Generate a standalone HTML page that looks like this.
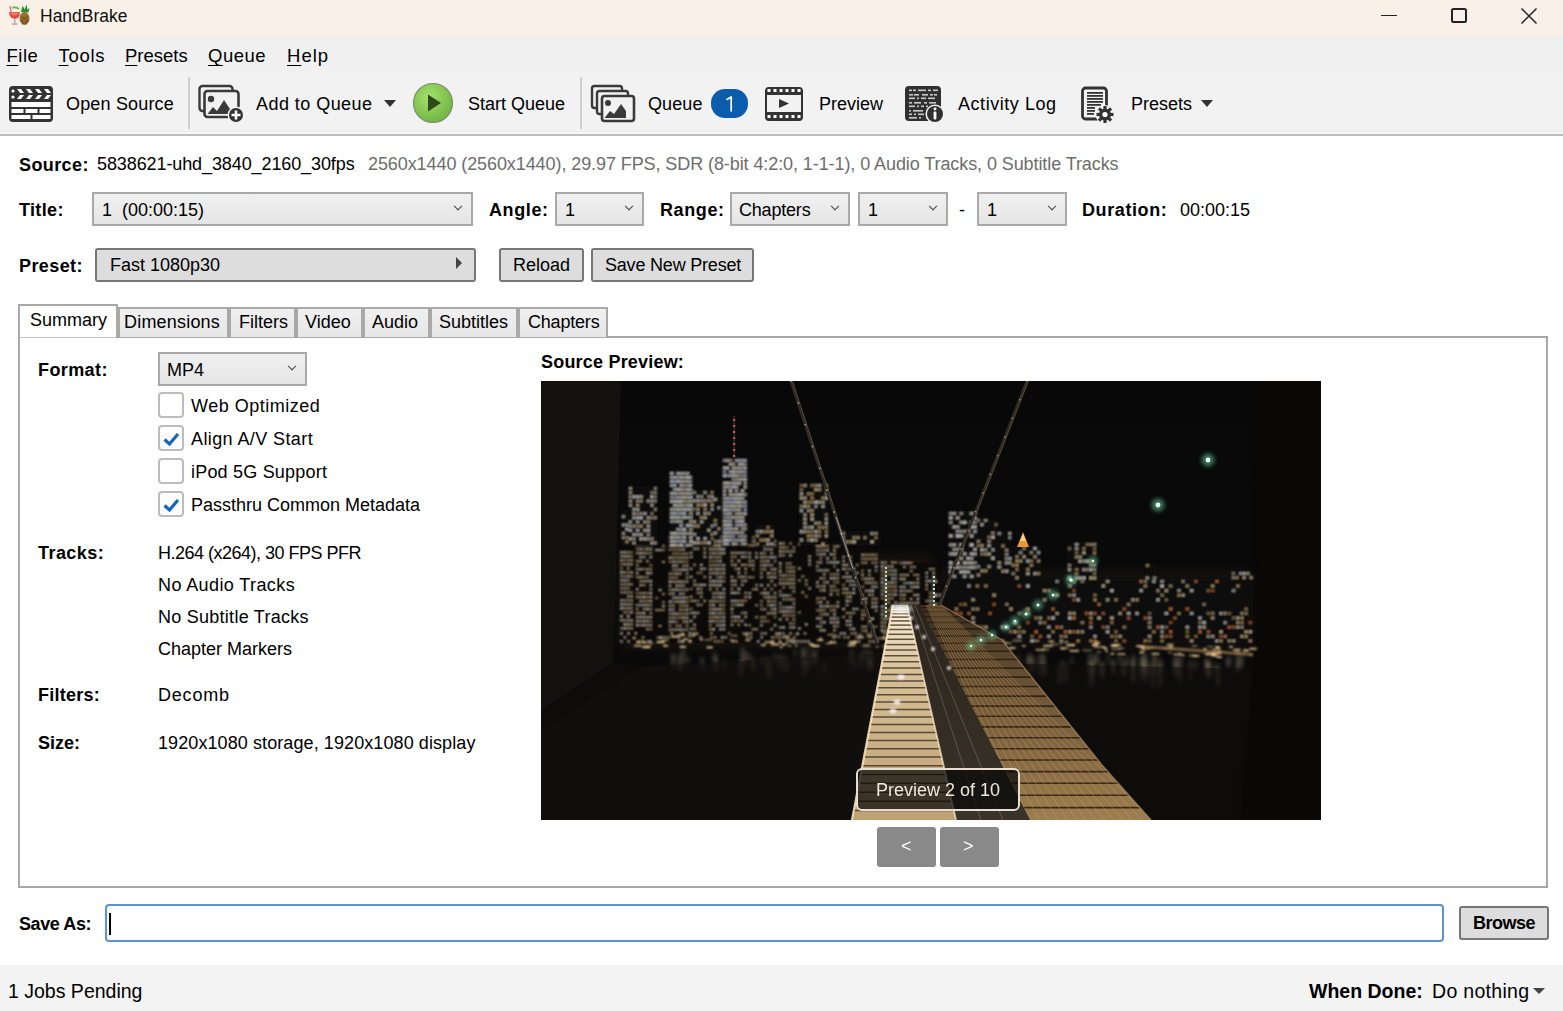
<!DOCTYPE html>
<html><head><meta charset="utf-8">
<style>
html,body{margin:0;padding:0;width:1563px;height:1011px;overflow:hidden;background:#fff;position:relative;font-family:"Liberation Sans",sans-serif;color:#000;}
.a{position:absolute;}
.t{position:absolute;white-space:nowrap;font-size:18px;line-height:20px;}
.b{font-weight:bold;}
#titlebar{left:0;top:0;width:1563px;height:38px;background:linear-gradient(#f9f1e7 0,#f9f1e7 34px,#f1efeb 38px);}
#menubar{left:0;top:38px;width:1563px;height:34px;background:#f0f0f0;}
#toolbar{left:0;top:72px;width:1563px;height:61px;background:#f2f2f2;}
#tbborder{left:0;top:131px;width:1563px;height:5px;background:linear-gradient(#ececec 0,#ececec 1px,#f7f7f7 1px,#f7f7f7 3px,#bdbdbd 3px);}
.u{text-decoration:underline;text-underline-offset:3px;text-decoration-thickness:1px;}
.combo{position:absolute;box-sizing:border-box;border:2px solid #a9a9a9;background:linear-gradient(#f0f0f0,#e5e5e5);}
.combo .chev{position:absolute;right:10px;top:50%;width:5px;height:5px;border-right:1.7px solid #404040;border-bottom:1.7px solid #404040;transform:translateY(-95%) rotate(45deg);}
.btn{position:absolute;box-sizing:border-box;border:2px solid #767676;border-radius:3px;background:#dddddd;}
.tab{position:absolute;box-sizing:border-box;border:2px solid #a9a9a9;border-bottom:none;background:linear-gradient(#f0f0f0,#e6e6e6);height:30px;top:307px;}
.cb{position:absolute;box-sizing:border-box;width:26px;height:26px;border:2px solid #bcbcbc;border-radius:4px;background:#fff;left:158px;}
</style></head><body>
<!-- title bar -->
<div id="titlebar" class="a"></div>
<svg class="a" style="left:7px;top:3px" width="24" height="24" viewBox="0 0 24 24">
  <path d="M2 9 L13 9 Q13 15 8 16 Q2 15 2 9Z" fill="#e04a40"/>
  <path d="M3 9.5 L12 9.5 Q11.5 12 7.5 12.5 Q3.5 12 3 9.5Z" fill="#f07a60"/>
  <rect x="7" y="15.5" width="1.4" height="5" fill="#a8a8a8"/>
  <ellipse cx="7.7" cy="21" rx="3.2" ry="1.1" fill="#b8b8b8"/>
  <path d="M3 3 L4 9" stroke="#e06090" stroke-width="1.3"/>
  <path d="M5 5 Q8.5 3 12 6" stroke="#60c050" stroke-width="2" fill="none"/>
  <ellipse cx="17.5" cy="15.5" rx="5" ry="6.5" fill="#9a7030"/>
  <path d="M13.5 13 L21 18 M13 17 L20 21 M21.5 13 L14 18 M22 17 L15 21" stroke="#6a4a18" stroke-width="0.9"/>
  <path d="M14 9 L15.5 2.5 L17.5 6.5 L19.5 1.5 L20.5 7 L22.5 4.5 L21.5 9.5Z" fill="#2a8a2a"/>
</svg>
<div class="t" style="left:40px;top:6px;font-size:17.5px;color:#111">HandBrake</div>
<!-- window controls -->
<div class="a" style="left:1381px;top:14.5px;width:16px;height:1.2px;background:#222"></div>
<div class="a" style="left:1451px;top:8px;width:16px;height:15px;box-sizing:border-box;border:2px solid #222;border-radius:2.5px"></div>
<svg class="a" style="left:1520px;top:7px" width="18" height="18" viewBox="0 0 18 18"><path d="M1.5 1.5L16.5 16.5M16.5 1.5L1.5 16.5" stroke="#222" stroke-width="1.5"/></svg>

<!-- menu -->
<div id="menubar" class="a"></div>
<div class="t" style="left:6.5px;top:46px;font-size:18.5px;letter-spacing:0.5px"><span class="u">F</span>ile</div>
<div class="t" style="left:58.5px;top:46px;font-size:18.5px;letter-spacing:0.7px"><span class="u">T</span>ools</div>
<div class="t" style="left:125px;top:46px;font-size:18.5px"><span class="u">P</span>resets</div>
<div class="t" style="left:208px;top:46px;font-size:18.5px;letter-spacing:0.5px"><span class="u">Q</span>ueue</div>
<div class="t" style="left:287px;top:46px;font-size:18.5px;letter-spacing:1px"><span class="u">H</span>elp</div>

<!-- toolbar -->
<div id="toolbar" class="a"></div>
<div id="tbborder" class="a"></div>
<div class="a" style="left:188px;top:77px;width:2px;height:52px;background:#cfcfcf"></div>
<div class="a" style="left:580px;top:77px;width:2px;height:52px;background:#cfcfcf"></div>

<!-- clapper icon -->
<svg class="a" style="left:8px;top:85px" width="46" height="38" viewBox="0 0 46 38">
  <rect x="1" y="1" width="44" height="36" rx="4" fill="#333"/>
  <g fill="#fff">
    <circle cx="5" cy="6" r="1.6"/><circle cx="5" cy="12" r="1.6"/>
    <path d="M9 4h4l3 4h-4z M18 4h4l3 4h-4z M27 4h4l3 4h-4z M36 4h4l3 4h-4z"/>
    <path d="M12 10h4l-3 4h-4z M21 10h4l-3 4h-4z M30 10h4l-3 4h-4z M39 10h4l-3 4h-4z"/>
    <rect x="3.5" y="17" width="39" height="5"/>
    <rect x="3.5" y="24" width="12" height="4"/><rect x="17.5" y="24" width="12" height="4"/><rect x="31.5" y="24" width="11" height="4"/>
    <rect x="3.5" y="30" width="19" height="4"/><rect x="24.5" y="30" width="18" height="4"/>
  </g>
</svg>
<div class="t" style="left:66px;top:94px;letter-spacing:0.17px">Open Source</div>

<!-- add to queue icon -->
<svg class="a" style="left:196px;top:83px" width="48" height="40" viewBox="0 0 48 40">
  <rect x="3.5" y="3" width="33" height="25" rx="3" fill="none" stroke="#3a3a3a" stroke-width="2.4"/>
  <rect x="8.5" y="8" width="34" height="26" rx="3" fill="#f2f2f2" stroke="#3a3a3a" stroke-width="2.6"/>
  <circle cx="15" cy="16" r="3.2" fill="#3a3a3a"/>
  <path d="M11.5 31 L17 24 L21 28 L28 17 L34 26 L34 31Z" fill="#3a3a3a"/>
  <circle cx="40" cy="32" r="8.5" fill="#f2f2f2"/>
  <circle cx="40" cy="32" r="7" fill="#333"/>
  <path d="M40 27.5v9M35.5 32h9" stroke="#fff" stroke-width="2.6"/>
</svg>
<div class="t" style="left:256px;top:94px;letter-spacing:0.45px">Add to Queue</div>
<div class="a" style="left:384px;top:100px;width:0;height:0;border-left:6px solid transparent;border-right:6px solid transparent;border-top:7px solid #333"></div>

<!-- start queue -->
<svg class="a" style="left:412px;top:82px" width="42" height="42" viewBox="0 0 42 42">
  <defs><radialGradient id="gg" cx="40%" cy="35%" r="70%"><stop offset="0" stop-color="#a6e070"/><stop offset="1" stop-color="#6fb33e"/></radialGradient></defs>
  <circle cx="21" cy="21" r="19.5" fill="url(#gg)" stroke="#7e8f70" stroke-width="1.2"/>
  <path d="M16 12.5 L29 21 L16 29.5Z" fill="#2c4a1a"/>
</svg>
<div class="t" style="left:468px;top:94px">Start Queue</div>

<!-- queue icon -->
<svg class="a" style="left:588px;top:83px" width="50" height="42" viewBox="0 0 50 42">
  <rect x="4" y="3" width="30" height="22" rx="2.5" fill="#f2f2f2" stroke="#3a3a3a" stroke-width="2.4"/>
  <rect x="9" y="8" width="31" height="23" rx="2.5" fill="#f2f2f2" stroke="#3a3a3a" stroke-width="2.4"/>
  <rect x="14" y="13" width="32" height="25" rx="2.5" fill="#f2f2f2" stroke="#3a3a3a" stroke-width="2.6"/>
  <circle cx="20" cy="20" r="3" fill="#3a3a3a"/>
  <path d="M16.5 35 L22 28 L26 31 L33 21 L38 28 L38 35Z" fill="#3a3a3a"/>
</svg>
<div class="t" style="left:648px;top:94px;letter-spacing:0.1px">Queue</div>
<div class="a" style="left:711px;top:89px;width:37px;height:29px;border-radius:14px;background:#0b5cad"></div>
<svg class="a" style="left:720px;top:92px" width="20" height="24" viewBox="0 0 20 24"><path d="M6.5 7.8 L11.2 5 L11.2 19.5" fill="none" stroke="#fff" stroke-width="1.7" stroke-linejoin="round"/></svg>

<!-- preview icon -->
<svg class="a" style="left:764px;top:86px" width="40" height="36" viewBox="0 0 40 36">
  <rect x="1" y="1" width="38" height="34" rx="4" fill="#333"/>
  <rect x="3" y="9" width="34" height="17" fill="#f2f2f2"/>
  <g fill="#fff"><rect x="3.5" y="3" width="3" height="3"/><rect x="9.5" y="3" width="3" height="3"/><rect x="15.5" y="3" width="3" height="3"/><rect x="21.5" y="3" width="3" height="3"/><rect x="27.5" y="3" width="3" height="3"/><rect x="33.5" y="3" width="3" height="3"/>
  <rect x="3.5" y="29" width="3" height="3"/><rect x="9.5" y="29" width="3" height="3"/><rect x="15.5" y="29" width="3" height="3"/><rect x="21.5" y="29" width="3" height="3"/><rect x="27.5" y="29" width="3" height="3"/><rect x="33.5" y="29" width="3" height="3"/></g>
  <path d="M15 13 L25 17.5 L15 22Z" fill="#333"/>
</svg>
<div class="t" style="left:819px;top:94px">Preview</div>

<!-- activity log icon -->
<svg class="a" style="left:904px;top:85px" width="44" height="38" viewBox="0 0 44 38">
  <rect x="1" y="1" width="36" height="35" rx="4" fill="#303030"/>
  <g fill="#c8c8c8">
    <rect x="5" y="4.5" width="3" height="1.6"/><rect x="9" y="4.5" width="3" height="1.6"/><rect x="14" y="4.5" width="8" height="1.6"/><rect x="24" y="4.5" width="3" height="1.6"/><rect x="29" y="4.5" width="5" height="1.6"/>
    <rect x="5" y="9" width="4" height="1.6"/><rect x="10" y="9" width="5" height="1.6"/><rect x="18" y="9" width="6" height="1.6"/><rect x="26" y="9" width="3" height="1.6"/><rect x="30" y="9" width="3" height="1.6"/>
    <rect x="5" y="12.5" width="6" height="1.6"/><rect x="13" y="12.5" width="2" height="1.6"/><rect x="17" y="12.5" width="5" height="1.6"/><rect x="24" y="12.5" width="7" height="1.6"/>
    <rect x="5" y="17" width="3" height="1.6"/><rect x="10" y="17" width="7" height="1.6"/><rect x="20" y="17" width="3" height="1.6"/><rect x="25" y="17" width="7" height="1.6"/>
    <rect x="5" y="20.5" width="6" height="1.6"/><rect x="13" y="20.5" width="2" height="1.6"/><rect x="17" y="20.5" width="3" height="1.6"/><rect x="22" y="20.5" width="2" height="1.6"/>
    <rect x="5" y="25" width="2" height="1.6"/><rect x="9" y="25" width="10" height="1.6"/>
    <rect x="5" y="28.5" width="3" height="1.6"/><rect x="10" y="28.5" width="2" height="1.6"/><rect x="14" y="28.5" width="6" height="1.6"/>
    <rect x="5" y="32" width="8" height="1.6"/><rect x="15" y="32" width="2" height="1.6"/>
  </g>
  <circle cx="31" cy="29" r="9.6" fill="#f2f2f2"/>
  <circle cx="31" cy="29" r="8" fill="#303030"/>
  <rect x="29.6" y="22.5" width="2.8" height="2.8" rx="1" fill="#fff"/>
  <rect x="29.6" y="26.5" width="2.8" height="8" rx="1" fill="#fff"/>
</svg>
<div class="t" style="left:958px;top:94px;letter-spacing:0.55px">Activity Log</div>

<!-- presets icon -->
<svg class="a" style="left:1080px;top:86px" width="38" height="38" viewBox="0 0 38 38">
  <rect x="2.5" y="2" width="24" height="31" rx="3" fill="none" stroke="#333" stroke-width="2.8"/>
  <g fill="#333"><rect x="7" y="6" width="16" height="1.8"/><rect x="7" y="9" width="16" height="1.8"/><rect x="7" y="12" width="16" height="1.8"/><rect x="7" y="15" width="16" height="1.8"/><rect x="7" y="18" width="14" height="1.8"/><rect x="7" y="21" width="8" height="1.8"/><rect x="7" y="24" width="8" height="1.8"/><rect x="7" y="27" width="7" height="1.8"/></g>
  <circle cx="25" cy="28.5" r="9.5" fill="#f2f2f2"/>
  <g transform="translate(25 28.5)" fill="#333">
    <circle r="6"/>
    <rect x="-1.6" y="-8.5" width="3.2" height="17"/>
    <rect x="-1.6" y="-8.5" width="3.2" height="17" transform="rotate(45)"/>
    <rect x="-1.6" y="-8.5" width="3.2" height="17" transform="rotate(90)"/>
    <rect x="-1.6" y="-8.5" width="3.2" height="17" transform="rotate(135)"/>
    <circle r="2.6" fill="#fff"/>
  </g>
</svg>
<div class="t" style="left:1131px;top:94px">Presets</div>
<div class="a" style="left:1201px;top:100px;width:0;height:0;border-left:6px solid transparent;border-right:6px solid transparent;border-top:7px solid #333"></div>

<!-- source row -->
<div class="t b" style="left:19px;top:155px;letter-spacing:0.4px">Source:</div>
<div class="t" style="left:97px;top:154px;letter-spacing:-0.1px">5838621-uhd_3840_2160_30fps</div>
<div class="t" style="left:368px;top:154px;color:#6d6d6d;letter-spacing:-0.085px">2560x1440 (2560x1440), 29.97 FPS, SDR (8-bit 4:2:0, 1-1-1), 0 Audio Tracks, 0 Subtitle Tracks</div>

<!-- title row -->
<div class="t b" style="left:19px;top:200px;letter-spacing:0.35px">Title:</div>
<div class="combo" style="left:92px;top:192px;width:381px;height:34px"><div class="chev"></div></div>
<div class="t" style="left:102px;top:200px">1&nbsp; (00:00:15)</div>
<div class="t b" style="left:489px;top:200px;letter-spacing:0.6px">Angle:</div>
<div class="combo" style="left:555px;top:192px;width:89px;height:34px"><div class="chev"></div></div>
<div class="t" style="left:565px;top:200px">1</div>
<div class="t b" style="left:660px;top:200px;letter-spacing:0.6px">Range:</div>
<div class="combo" style="left:730px;top:192px;width:120px;height:34px"><div class="chev"></div></div>
<div class="t" style="left:739px;top:200px;letter-spacing:-0.2px">Chapters</div>
<div class="combo" style="left:858px;top:192px;width:90px;height:34px"><div class="chev"></div></div>
<div class="t" style="left:868px;top:200px">1</div>
<div class="t" style="left:959px;top:200px">-</div>
<div class="combo" style="left:977px;top:192px;width:90px;height:34px"><div class="chev"></div></div>
<div class="t" style="left:987px;top:200px">1</div>
<div class="t b" style="left:1082px;top:200px;letter-spacing:0.6px">Duration:</div>
<div class="t" style="left:1180px;top:200px">00:00:15</div>

<!-- preset row -->
<div class="t b" style="left:19px;top:256px;letter-spacing:0.4px">Preset:</div>
<div class="btn" style="left:95px;top:248px;width:381px;height:34px"></div>
<div class="t" style="left:110px;top:255px">Fast 1080p30</div>
<div class="a" style="left:456px;top:257px;width:0;height:0;border-top:6px solid transparent;border-bottom:6px solid transparent;border-left:6px solid #444"></div>
<div class="btn" style="left:499px;top:248px;width:85px;height:34px"></div>
<div class="t" style="left:513px;top:255px">Reload</div>
<div class="btn" style="left:591px;top:248px;width:163px;height:34px"></div>
<div class="t" style="left:605px;top:255px;letter-spacing:-0.2px">Save New Preset</div>

<!-- tabs -->
<div class="a" style="left:18px;top:336px;width:1530px;height:552px;box-sizing:border-box;border:2px solid #a9a9a9;background:#fff"></div>
<div class="tab" style="left:118px;width:111px"></div>
<div class="tab" style="left:229px;width:67px"></div>
<div class="tab" style="left:296px;width:67px"></div>
<div class="tab" style="left:363px;width:67px"></div>
<div class="tab" style="left:430px;width:88px"></div>
<div class="tab" style="left:518px;width:90px"></div>
<div class="a" style="left:18px;top:304px;width:100px;height:34px;box-sizing:border-box;border:2px solid #a9a9a9;border-bottom:none;background:#fff"></div>
<div class="a" style="left:20px;top:337px;width:96px;height:1px;background:#c4c4c4"></div>
<div class="t" style="left:30px;top:310px">Summary</div>
<div class="t" style="left:124px;top:312px;letter-spacing:0.2px">Dimensions</div>
<div class="t" style="left:239px;top:312px">Filters</div>
<div class="t" style="left:305px;top:312px">Video</div>
<div class="t" style="left:372px;top:312px">Audio</div>
<div class="t" style="left:439px;top:312px">Subtitles</div>
<div class="t" style="left:528px;top:312px;letter-spacing:-0.2px">Chapters</div>

<!-- summary -->
<div class="t b" style="left:38px;top:360px;letter-spacing:0.4px">Format:</div>
<div class="combo" style="left:158px;top:352px;width:149px;height:34px"><div class="chev"></div></div>
<div class="t" style="left:167px;top:360px">MP4</div>
<div class="cb" style="top:392px"></div>
<div class="t" style="left:191px;top:396px;letter-spacing:0.5px">Web Optimized</div>
<div class="cb" style="top:425px"><svg class="a" style="left:2px;top:3px" width="18" height="18" viewBox="0 0 18 18"><path d="M2.5 9.5 L7.5 14 L16 4" fill="none" stroke="#1566c0" stroke-width="3.2"/></svg></div>
<div class="t" style="left:191px;top:429px;letter-spacing:0.4px">Align A/V Start</div>
<div class="cb" style="top:458px"></div>
<div class="t" style="left:191px;top:462px;letter-spacing:0.2px">iPod 5G Support</div>
<div class="cb" style="top:491px"><svg class="a" style="left:2px;top:3px" width="18" height="18" viewBox="0 0 18 18"><path d="M2.5 9.5 L7.5 14 L16 4" fill="none" stroke="#1566c0" stroke-width="3.2"/></svg></div>
<div class="t" style="left:191px;top:495px">Passthru Common Metadata</div>

<div class="t b" style="left:38px;top:543px;letter-spacing:0.45px">Tracks:</div>
<div class="t" style="left:158px;top:543px;letter-spacing:-0.5px">H.264 (x264), 30 FPS PFR</div>
<div class="t" style="left:158px;top:575px;letter-spacing:0.4px">No Audio Tracks</div>
<div class="t" style="left:158px;top:607px;letter-spacing:0.26px">No Subtitle Tracks</div>
<div class="t" style="left:158px;top:639px">Chapter Markers</div>
<div class="t b" style="left:38px;top:685px;letter-spacing:0.25px">Filters:</div>
<div class="t" style="left:158px;top:685px;letter-spacing:0.8px">Decomb</div>
<div class="t b" style="left:38px;top:733px">Size:</div>
<div class="t" style="left:158px;top:733px;letter-spacing:0.09px">1920x1080 storage, 1920x1080 display</div>

<div class="t b" style="left:541px;top:352px;letter-spacing:0.2px">Source Preview:</div>
<div id="photo" class="a" style="left:541px;top:381px;width:780px;height:439px;background:#0a0a0a;overflow:hidden"><svg width="780" height="439" viewBox="0 0 780 439" style="position:absolute;left:0;top:0">
<defs>
<linearGradient id="walk" x1="0" y1="0" x2="0" y2="1"><stop offset="0" stop-color="#fff4e0"/><stop offset="0.3" stop-color="#d8c098"/><stop offset="1" stop-color="#bda074"/></linearGradient>
<linearGradient id="latt" x1="0" y1="0" x2="0" y2="1"><stop offset="0" stop-color="#3a2e20"/><stop offset="0.4" stop-color="#6e5636"/><stop offset="1" stop-color="#9c7e50"/></linearGradient>
<linearGradient id="road" x1="0" y1="0" x2="0" y2="1"><stop offset="0" stop-color="#2a241c"/><stop offset="1" stop-color="#3a332a"/></linearGradient>
<linearGradient id="sky" x1="0" y1="0" x2="0" y2="1"><stop offset="0" stop-color="#080808"/><stop offset="1" stop-color="#0b0b0c"/></linearGradient>
<filter id="bl1" x="-5%" y="-5%" width="110%" height="110%"><feGaussianBlur stdDeviation="0.8"/></filter>
<filter id="bl2" x="-50%" y="-50%" width="200%" height="200%"><feGaussianBlur stdDeviation="2"/></filter>
<filter id="bl4" x="-20%" y="-20%" width="140%" height="140%"><feGaussianBlur stdDeviation="6"/></filter>
</defs>
<rect width="780" height="439" fill="url(#sky)"/>
<path d="M0 0 H80 L76 160 L72 282 L0 330Z" fill="#13110e"/>
<path d="M0 330 L72 282 L100 286 L0 350Z" fill="#0e0c0a"/>
<path d="M715 0 H780 V439 H690 L712 300Z" fill="#090807"/>
<rect x="80" y="175" width="310" height="90" fill="#2a2014" opacity=".45" filter="url(#bl4)"/>
<rect x="395" y="190" width="315" height="75" fill="#241b12" opacity=".45" filter="url(#bl4)"/>
<rect x="78" y="165" width="257" height="97" fill="#0b0a09"/><rect x="335" y="182" width="60" height="80" fill="#0b0a09"/>
<g filter="url(#bl1)">
<rect x="79.2" y="170.4" width="2.5" height="1.9" fill="#ffffff" opacity="0.88"/>
<rect x="82.6" y="170.4" width="2.5" height="1.9" fill="#fff2d0" opacity="0.95"/>
<rect x="86.0" y="170.4" width="2.5" height="1.9" fill="#e8c890" opacity="0.95"/>
<rect x="89.4" y="170.4" width="2.5" height="1.9" fill="#d8b070" opacity="0.79"/>
<rect x="79.2" y="174.4" width="2.5" height="1.9" fill="#f0d8a8" opacity="0.90"/>
<rect x="82.6" y="174.4" width="2.5" height="1.9" fill="#ffffff" opacity="0.91"/>
<rect x="86.0" y="174.4" width="2.5" height="1.9" fill="#fff2d0" opacity="0.91"/>
<rect x="89.4" y="174.4" width="2.5" height="1.9" fill="#f0d8a8" opacity="0.76"/>
<rect x="79.2" y="178.4" width="2.5" height="1.9" fill="#fff2d0" opacity="0.90"/>
<rect x="82.6" y="178.4" width="2.5" height="1.9" fill="#d8b070" opacity="0.86"/>
<rect x="86.0" y="178.4" width="2.5" height="1.9" fill="#e8c890" opacity="0.81"/>
<rect x="89.4" y="178.4" width="2.5" height="1.9" fill="#f0d8a8" opacity="0.92"/>
<rect x="79.2" y="182.4" width="2.5" height="1.9" fill="#d8b070" opacity="0.85"/>
<rect x="82.6" y="182.4" width="2.5" height="1.9" fill="#f0d8a8" opacity="0.93"/>
<rect x="86.0" y="182.4" width="2.5" height="1.9" fill="#fff2d0" opacity="0.88"/>
<rect x="89.4" y="182.4" width="2.5" height="1.9" fill="#e8c890" opacity="0.94"/>
<rect x="79.2" y="186.4" width="2.5" height="1.9" fill="#d8b070" opacity="0.85"/>
<rect x="86.0" y="186.4" width="2.5" height="1.9" fill="#f0d8a8" opacity="0.80"/>
<rect x="79.2" y="190.4" width="2.5" height="1.9" fill="#ffffff" opacity="1.00"/>
<rect x="82.6" y="190.4" width="2.5" height="1.9" fill="#f0d8a8" opacity="0.89"/>
<rect x="86.0" y="190.4" width="2.5" height="1.9" fill="#d8b070" opacity="0.83"/>
<rect x="89.4" y="190.4" width="2.5" height="1.9" fill="#f0d8a8" opacity="0.99"/>
<rect x="79.2" y="194.4" width="2.5" height="1.9" fill="#f0d8a8" opacity="0.78"/>
<rect x="82.6" y="194.4" width="2.5" height="1.9" fill="#f0d8a8" opacity="0.76"/>
<rect x="86.0" y="194.4" width="2.5" height="1.9" fill="#fff2d0" opacity="0.92"/>
<rect x="89.4" y="194.4" width="2.5" height="1.9" fill="#e8c890" opacity="0.80"/>
<rect x="79.2" y="198.4" width="2.5" height="1.9" fill="#fff2d0" opacity="0.85"/>
<rect x="82.6" y="198.4" width="2.5" height="1.9" fill="#ffffff" opacity="0.86"/>
<rect x="86.0" y="198.4" width="2.5" height="1.9" fill="#d8b070" opacity="0.97"/>
<rect x="79.2" y="202.4" width="2.5" height="1.9" fill="#f0d8a8" opacity="0.80"/>
<rect x="82.6" y="202.4" width="2.5" height="1.9" fill="#e8c890" opacity="0.91"/>
<rect x="86.0" y="202.4" width="2.5" height="1.9" fill="#fff2d0" opacity="0.80"/>
<rect x="89.4" y="202.4" width="2.5" height="1.9" fill="#e8c890" opacity="0.83"/>
<rect x="79.2" y="206.4" width="2.5" height="1.9" fill="#f0d8a8" opacity="0.77"/>
<rect x="82.6" y="206.4" width="2.5" height="1.9" fill="#fff2d0" opacity="0.75"/>
<rect x="86.0" y="206.4" width="2.5" height="1.9" fill="#e8c890" opacity="0.86"/>
<rect x="79.2" y="210.4" width="2.5" height="1.9" fill="#e8c890" opacity="0.78"/>
<rect x="82.6" y="210.4" width="2.5" height="1.9" fill="#fff2d0" opacity="0.83"/>
<rect x="86.0" y="210.4" width="2.5" height="1.9" fill="#e8c890" opacity="0.81"/>
<rect x="89.4" y="210.4" width="2.5" height="1.9" fill="#e8c890" opacity="0.80"/>
<rect x="86.0" y="214.4" width="2.5" height="1.9" fill="#ffffff" opacity="0.76"/>
<rect x="89.4" y="214.4" width="2.5" height="1.9" fill="#e8c890" opacity="0.99"/>
<rect x="79.2" y="218.4" width="2.5" height="1.9" fill="#ffffff" opacity="0.81"/>
<rect x="82.6" y="218.4" width="2.5" height="1.9" fill="#e8c890" opacity="0.87"/>
<rect x="86.0" y="218.4" width="2.5" height="1.9" fill="#f0d8a8" opacity="0.78"/>
<rect x="89.4" y="218.4" width="2.5" height="1.9" fill="#e8c890" opacity="0.90"/>
<rect x="79.2" y="222.4" width="2.5" height="1.9" fill="#fff2d0" opacity="0.94"/>
<rect x="82.6" y="222.4" width="2.5" height="1.9" fill="#ffffff" opacity="0.86"/>
<rect x="86.0" y="222.4" width="2.5" height="1.9" fill="#fff2d0" opacity="0.82"/>
<rect x="89.4" y="222.4" width="2.5" height="1.9" fill="#fff2d0" opacity="0.77"/>
<rect x="79.2" y="226.4" width="2.5" height="1.9" fill="#ffffff" opacity="1.00"/>
<rect x="82.6" y="226.4" width="2.5" height="1.9" fill="#e8c890" opacity="0.90"/>
<rect x="86.0" y="226.4" width="2.5" height="1.9" fill="#f0d8a8" opacity="0.98"/>
<rect x="89.4" y="226.4" width="2.5" height="1.9" fill="#d8b070" opacity="0.93"/>
<rect x="82.6" y="230.4" width="2.5" height="1.9" fill="#f0d8a8" opacity="0.87"/>
<rect x="86.0" y="230.4" width="2.5" height="1.9" fill="#d8b070" opacity="0.78"/>
<rect x="89.4" y="230.4" width="2.5" height="1.9" fill="#ffffff" opacity="0.89"/>
<rect x="79.2" y="234.4" width="2.5" height="1.9" fill="#fff2d0" opacity="0.95"/>
<rect x="86.0" y="234.4" width="2.5" height="1.9" fill="#ffffff" opacity="0.98"/>
<rect x="79.2" y="238.4" width="2.5" height="1.9" fill="#f0d8a8" opacity="0.97"/>
<rect x="82.6" y="238.4" width="2.5" height="1.9" fill="#e8c890" opacity="0.92"/>
<rect x="86.0" y="238.4" width="2.5" height="1.9" fill="#f0d8a8" opacity="0.90"/>
<rect x="89.4" y="238.4" width="2.5" height="1.9" fill="#f0d8a8" opacity="1.00"/>
<rect x="82.6" y="242.4" width="2.5" height="1.9" fill="#ffffff" opacity="0.98"/>
<rect x="86.0" y="242.4" width="2.5" height="1.9" fill="#ffffff" opacity="0.86"/>
<rect x="89.4" y="242.4" width="2.5" height="1.9" fill="#f0d8a8" opacity="0.88"/>
<rect x="79.2" y="246.4" width="2.5" height="1.9" fill="#d8b070" opacity="0.90"/>
<rect x="82.6" y="246.4" width="2.5" height="1.9" fill="#fff2d0" opacity="0.99"/>
<rect x="86.0" y="246.4" width="2.5" height="1.9" fill="#e8c890" opacity="0.92"/>
<rect x="89.4" y="246.4" width="2.5" height="1.9" fill="#f0d8a8" opacity="0.84"/>
<rect x="98.4" y="155.2" width="2.5" height="1.9" fill="#ffffff" opacity="0.87"/>
<rect x="101.8" y="155.2" width="2.5" height="1.9" fill="#ffffff" opacity="0.92"/>
<rect x="105.2" y="155.2" width="2.5" height="1.9" fill="#ffffff" opacity="0.95"/>
<rect x="108.6" y="155.2" width="2.5" height="1.9" fill="#fff2d0" opacity="0.97"/>
<rect x="95.0" y="159.2" width="2.5" height="1.9" fill="#e8c890" opacity="0.98"/>
<rect x="98.4" y="159.2" width="2.5" height="1.9" fill="#fff2d0" opacity="0.87"/>
<rect x="101.8" y="159.2" width="2.5" height="1.9" fill="#f0d8a8" opacity="0.93"/>
<rect x="108.6" y="159.2" width="2.5" height="1.9" fill="#fff2d0" opacity="0.78"/>
<rect x="95.0" y="163.2" width="2.5" height="1.9" fill="#fff2d0" opacity="0.96"/>
<rect x="98.4" y="163.2" width="2.5" height="1.9" fill="#e8c890" opacity="0.87"/>
<rect x="101.8" y="163.2" width="2.5" height="1.9" fill="#e8c890" opacity="0.86"/>
<rect x="105.2" y="163.2" width="2.5" height="1.9" fill="#f0d8a8" opacity="0.82"/>
<rect x="108.6" y="163.2" width="2.5" height="1.9" fill="#d8b070" opacity="0.89"/>
<rect x="95.0" y="167.2" width="2.5" height="1.9" fill="#e8c890" opacity="0.75"/>
<rect x="98.4" y="167.2" width="2.5" height="1.9" fill="#ffffff" opacity="0.80"/>
<rect x="101.8" y="167.2" width="2.5" height="1.9" fill="#d8b070" opacity="0.81"/>
<rect x="105.2" y="167.2" width="2.5" height="1.9" fill="#f0d8a8" opacity="1.00"/>
<rect x="108.6" y="167.2" width="2.5" height="1.9" fill="#f0d8a8" opacity="0.91"/>
<rect x="95.0" y="171.2" width="2.5" height="1.9" fill="#d8b070" opacity="0.99"/>
<rect x="98.4" y="171.2" width="2.5" height="1.9" fill="#fff2d0" opacity="0.96"/>
<rect x="101.8" y="171.2" width="2.5" height="1.9" fill="#f0d8a8" opacity="0.94"/>
<rect x="105.2" y="171.2" width="2.5" height="1.9" fill="#f0d8a8" opacity="0.79"/>
<rect x="108.6" y="171.2" width="2.5" height="1.9" fill="#d8b070" opacity="0.88"/>
<rect x="98.4" y="175.2" width="2.5" height="1.9" fill="#fff2d0" opacity="0.85"/>
<rect x="101.8" y="175.2" width="2.5" height="1.9" fill="#fff2d0" opacity="0.77"/>
<rect x="108.6" y="175.2" width="2.5" height="1.9" fill="#fff2d0" opacity="0.86"/>
<rect x="95.0" y="179.2" width="2.5" height="1.9" fill="#f0d8a8" opacity="0.84"/>
<rect x="98.4" y="179.2" width="2.5" height="1.9" fill="#e8c890" opacity="0.95"/>
<rect x="105.2" y="179.2" width="2.5" height="1.9" fill="#fff2d0" opacity="0.77"/>
<rect x="95.0" y="183.2" width="2.5" height="1.9" fill="#f0d8a8" opacity="0.80"/>
<rect x="108.6" y="183.2" width="2.5" height="1.9" fill="#d8b070" opacity="0.82"/>
<rect x="95.0" y="187.2" width="2.5" height="1.9" fill="#f0d8a8" opacity="0.84"/>
<rect x="98.4" y="187.2" width="2.5" height="1.9" fill="#ffffff" opacity="0.84"/>
<rect x="101.8" y="187.2" width="2.5" height="1.9" fill="#d8b070" opacity="0.87"/>
<rect x="105.2" y="187.2" width="2.5" height="1.9" fill="#f0d8a8" opacity="0.86"/>
<rect x="108.6" y="187.2" width="2.5" height="1.9" fill="#e8c890" opacity="0.83"/>
<rect x="95.0" y="191.2" width="2.5" height="1.9" fill="#fff2d0" opacity="0.87"/>
<rect x="105.2" y="191.2" width="2.5" height="1.9" fill="#ffffff" opacity="0.99"/>
<rect x="108.6" y="191.2" width="2.5" height="1.9" fill="#f0d8a8" opacity="0.94"/>
<rect x="95.0" y="195.2" width="2.5" height="1.9" fill="#e8c890" opacity="0.82"/>
<rect x="98.4" y="195.2" width="2.5" height="1.9" fill="#fff2d0" opacity="0.88"/>
<rect x="101.8" y="195.2" width="2.5" height="1.9" fill="#e8c890" opacity="0.81"/>
<rect x="105.2" y="195.2" width="2.5" height="1.9" fill="#e8c890" opacity="0.80"/>
<rect x="98.4" y="199.2" width="2.5" height="1.9" fill="#e8c890" opacity="0.87"/>
<rect x="101.8" y="199.2" width="2.5" height="1.9" fill="#f0d8a8" opacity="0.88"/>
<rect x="105.2" y="199.2" width="2.5" height="1.9" fill="#f0d8a8" opacity="0.88"/>
<rect x="108.6" y="199.2" width="2.5" height="1.9" fill="#ffffff" opacity="0.89"/>
<rect x="98.4" y="203.2" width="2.5" height="1.9" fill="#f0d8a8" opacity="0.92"/>
<rect x="101.8" y="203.2" width="2.5" height="1.9" fill="#e8c890" opacity="0.86"/>
<rect x="108.6" y="203.2" width="2.5" height="1.9" fill="#ffffff" opacity="0.82"/>
<rect x="95.0" y="207.2" width="2.5" height="1.9" fill="#fff2d0" opacity="0.83"/>
<rect x="108.6" y="207.2" width="2.5" height="1.9" fill="#f0d8a8" opacity="0.80"/>
<rect x="95.0" y="211.2" width="2.5" height="1.9" fill="#d8b070" opacity="0.78"/>
<rect x="98.4" y="211.2" width="2.5" height="1.9" fill="#f0d8a8" opacity="0.76"/>
<rect x="101.8" y="211.2" width="2.5" height="1.9" fill="#f0d8a8" opacity="0.92"/>
<rect x="105.2" y="211.2" width="2.5" height="1.9" fill="#d8b070" opacity="0.81"/>
<rect x="108.6" y="211.2" width="2.5" height="1.9" fill="#ffffff" opacity="0.93"/>
<rect x="95.0" y="215.2" width="2.5" height="1.9" fill="#e8c890" opacity="0.91"/>
<rect x="98.4" y="215.2" width="2.5" height="1.9" fill="#e8c890" opacity="0.97"/>
<rect x="101.8" y="215.2" width="2.5" height="1.9" fill="#ffffff" opacity="0.96"/>
<rect x="105.2" y="215.2" width="2.5" height="1.9" fill="#e8c890" opacity="0.80"/>
<rect x="108.6" y="215.2" width="2.5" height="1.9" fill="#fff2d0" opacity="0.88"/>
<rect x="98.4" y="219.2" width="2.5" height="1.9" fill="#fff2d0" opacity="0.81"/>
<rect x="101.8" y="219.2" width="2.5" height="1.9" fill="#d8b070" opacity="0.98"/>
<rect x="105.2" y="219.2" width="2.5" height="1.9" fill="#d8b070" opacity="0.97"/>
<rect x="108.6" y="219.2" width="2.5" height="1.9" fill="#fff2d0" opacity="0.97"/>
<rect x="95.0" y="223.2" width="2.5" height="1.9" fill="#fff2d0" opacity="0.78"/>
<rect x="98.4" y="223.2" width="2.5" height="1.9" fill="#ffffff" opacity="0.77"/>
<rect x="101.8" y="223.2" width="2.5" height="1.9" fill="#ffffff" opacity="0.89"/>
<rect x="105.2" y="223.2" width="2.5" height="1.9" fill="#fff2d0" opacity="0.85"/>
<rect x="108.6" y="223.2" width="2.5" height="1.9" fill="#f0d8a8" opacity="0.77"/>
<rect x="95.0" y="227.2" width="2.5" height="1.9" fill="#d8b070" opacity="0.98"/>
<rect x="101.8" y="227.2" width="2.5" height="1.9" fill="#e8c890" opacity="0.91"/>
<rect x="105.2" y="227.2" width="2.5" height="1.9" fill="#fff2d0" opacity="0.95"/>
<rect x="108.6" y="227.2" width="2.5" height="1.9" fill="#f0d8a8" opacity="0.76"/>
<rect x="95.0" y="231.2" width="2.5" height="1.9" fill="#e8c890" opacity="0.98"/>
<rect x="98.4" y="231.2" width="2.5" height="1.9" fill="#fff2d0" opacity="0.80"/>
<rect x="101.8" y="231.2" width="2.5" height="1.9" fill="#fff2d0" opacity="1.00"/>
<rect x="108.6" y="231.2" width="2.5" height="1.9" fill="#f0d8a8" opacity="0.78"/>
<rect x="95.0" y="235.2" width="2.5" height="1.9" fill="#f0d8a8" opacity="0.94"/>
<rect x="98.4" y="235.2" width="2.5" height="1.9" fill="#ffffff" opacity="0.86"/>
<rect x="101.8" y="235.2" width="2.5" height="1.9" fill="#fff2d0" opacity="0.90"/>
<rect x="105.2" y="235.2" width="2.5" height="1.9" fill="#f0d8a8" opacity="0.96"/>
<rect x="108.6" y="235.2" width="2.5" height="1.9" fill="#ffffff" opacity="0.84"/>
<rect x="95.0" y="239.2" width="2.5" height="1.9" fill="#fff2d0" opacity="0.90"/>
<rect x="98.4" y="239.2" width="2.5" height="1.9" fill="#f0d8a8" opacity="0.83"/>
<rect x="101.8" y="239.2" width="2.5" height="1.9" fill="#ffffff" opacity="0.89"/>
<rect x="105.2" y="239.2" width="2.5" height="1.9" fill="#e8c890" opacity="1.00"/>
<rect x="108.6" y="239.2" width="2.5" height="1.9" fill="#d8b070" opacity="0.82"/>
<rect x="95.0" y="243.2" width="2.5" height="1.9" fill="#fff2d0" opacity="0.95"/>
<rect x="98.4" y="243.2" width="2.5" height="1.9" fill="#d8b070" opacity="0.97"/>
<rect x="101.8" y="243.2" width="2.5" height="1.9" fill="#ffffff" opacity="0.94"/>
<rect x="105.2" y="243.2" width="2.5" height="1.9" fill="#fff2d0" opacity="0.77"/>
<rect x="108.6" y="243.2" width="2.5" height="1.9" fill="#ffffff" opacity="0.78"/>
<rect x="105.2" y="247.2" width="2.5" height="1.9" fill="#d8b070" opacity="0.99"/>
<rect x="108.6" y="247.2" width="2.5" height="1.9" fill="#d8b070" opacity="0.80"/>
<rect x="121.2" y="164.1" width="2.5" height="1.9" fill="#e8c890" opacity="0.78"/>
<rect x="114.4" y="168.1" width="2.5" height="1.9" fill="#ffffff" opacity="0.85"/>
<rect x="117.8" y="168.1" width="2.5" height="1.9" fill="#fff2d0" opacity="0.91"/>
<rect x="121.2" y="168.1" width="2.5" height="1.9" fill="#d8b070" opacity="0.81"/>
<rect x="121.2" y="180.1" width="2.5" height="1.9" fill="#e8c890" opacity="0.92"/>
<rect x="117.8" y="208.1" width="2.5" height="1.9" fill="#fff2d0" opacity="0.90"/>
<rect x="121.2" y="212.1" width="2.5" height="1.9" fill="#d8b070" opacity="0.94"/>
<rect x="114.4" y="216.1" width="2.5" height="1.9" fill="#d8b070" opacity="0.77"/>
<rect x="121.2" y="220.1" width="2.5" height="1.9" fill="#e8c890" opacity="0.77"/>
<rect x="121.2" y="224.1" width="2.5" height="1.9" fill="#fff2d0" opacity="0.90"/>
<rect x="114.4" y="228.1" width="2.5" height="1.9" fill="#e8c890" opacity="0.85"/>
<rect x="117.8" y="228.1" width="2.5" height="1.9" fill="#f0d8a8" opacity="0.84"/>
<rect x="121.2" y="228.1" width="2.5" height="1.9" fill="#d8b070" opacity="0.86"/>
<rect x="117.8" y="244.1" width="2.5" height="1.9" fill="#f0d8a8" opacity="0.88"/>
<rect x="127.8" y="155.7" width="2.5" height="1.9" fill="#fff2d0" opacity="0.80"/>
<rect x="131.2" y="155.7" width="2.5" height="1.9" fill="#fff2d0" opacity="0.97"/>
<rect x="134.6" y="155.7" width="2.5" height="1.9" fill="#f0d8a8" opacity="0.75"/>
<rect x="138.0" y="155.7" width="2.5" height="1.9" fill="#f0d8a8" opacity="0.91"/>
<rect x="141.4" y="155.7" width="2.5" height="1.9" fill="#e8c890" opacity="0.82"/>
<rect x="144.8" y="155.7" width="2.5" height="1.9" fill="#fff2d0" opacity="0.89"/>
<rect x="127.8" y="159.7" width="2.5" height="1.9" fill="#d8b070" opacity="0.87"/>
<rect x="131.2" y="159.7" width="2.5" height="1.9" fill="#d8b070" opacity="0.84"/>
<rect x="134.6" y="159.7" width="2.5" height="1.9" fill="#f0d8a8" opacity="0.95"/>
<rect x="138.0" y="159.7" width="2.5" height="1.9" fill="#e8c890" opacity="0.96"/>
<rect x="141.4" y="159.7" width="2.5" height="1.9" fill="#ffffff" opacity="0.86"/>
<rect x="144.8" y="159.7" width="2.5" height="1.9" fill="#fff2d0" opacity="0.84"/>
<rect x="127.8" y="163.7" width="2.5" height="1.9" fill="#e8c890" opacity="0.83"/>
<rect x="131.2" y="163.7" width="2.5" height="1.9" fill="#fff2d0" opacity="0.86"/>
<rect x="134.6" y="163.7" width="2.5" height="1.9" fill="#f0d8a8" opacity="0.87"/>
<rect x="138.0" y="163.7" width="2.5" height="1.9" fill="#e8c890" opacity="0.77"/>
<rect x="141.4" y="163.7" width="2.5" height="1.9" fill="#ffffff" opacity="0.95"/>
<rect x="144.8" y="163.7" width="2.5" height="1.9" fill="#f0d8a8" opacity="0.77"/>
<rect x="127.8" y="167.7" width="2.5" height="1.9" fill="#e8c890" opacity="0.77"/>
<rect x="131.2" y="167.7" width="2.5" height="1.9" fill="#d8b070" opacity="0.82"/>
<rect x="134.6" y="167.7" width="2.5" height="1.9" fill="#d8b070" opacity="0.91"/>
<rect x="138.0" y="167.7" width="2.5" height="1.9" fill="#f0d8a8" opacity="0.83"/>
<rect x="141.4" y="167.7" width="2.5" height="1.9" fill="#e8c890" opacity="0.98"/>
<rect x="131.2" y="171.7" width="2.5" height="1.9" fill="#d8b070" opacity="0.86"/>
<rect x="134.6" y="171.7" width="2.5" height="1.9" fill="#e8c890" opacity="0.81"/>
<rect x="138.0" y="171.7" width="2.5" height="1.9" fill="#d8b070" opacity="0.76"/>
<rect x="141.4" y="171.7" width="2.5" height="1.9" fill="#e8c890" opacity="0.85"/>
<rect x="144.8" y="171.7" width="2.5" height="1.9" fill="#e8c890" opacity="0.84"/>
<rect x="127.8" y="175.7" width="2.5" height="1.9" fill="#fff2d0" opacity="0.96"/>
<rect x="131.2" y="175.7" width="2.5" height="1.9" fill="#fff2d0" opacity="0.77"/>
<rect x="134.6" y="175.7" width="2.5" height="1.9" fill="#d8b070" opacity="0.95"/>
<rect x="138.0" y="175.7" width="2.5" height="1.9" fill="#f0d8a8" opacity="0.89"/>
<rect x="141.4" y="175.7" width="2.5" height="1.9" fill="#f0d8a8" opacity="0.91"/>
<rect x="144.8" y="175.7" width="2.5" height="1.9" fill="#f0d8a8" opacity="0.90"/>
<rect x="127.8" y="179.7" width="2.5" height="1.9" fill="#e8c890" opacity="0.77"/>
<rect x="131.2" y="179.7" width="2.5" height="1.9" fill="#f0d8a8" opacity="0.97"/>
<rect x="134.6" y="179.7" width="2.5" height="1.9" fill="#fff2d0" opacity="0.77"/>
<rect x="138.0" y="179.7" width="2.5" height="1.9" fill="#ffffff" opacity="0.81"/>
<rect x="141.4" y="179.7" width="2.5" height="1.9" fill="#e8c890" opacity="0.83"/>
<rect x="144.8" y="179.7" width="2.5" height="1.9" fill="#d8b070" opacity="0.83"/>
<rect x="131.2" y="183.7" width="2.5" height="1.9" fill="#ffffff" opacity="0.87"/>
<rect x="134.6" y="183.7" width="2.5" height="1.9" fill="#f0d8a8" opacity="0.93"/>
<rect x="141.4" y="183.7" width="2.5" height="1.9" fill="#d8b070" opacity="0.96"/>
<rect x="144.8" y="183.7" width="2.5" height="1.9" fill="#f0d8a8" opacity="0.97"/>
<rect x="131.2" y="187.7" width="2.5" height="1.9" fill="#e8c890" opacity="0.84"/>
<rect x="134.6" y="187.7" width="2.5" height="1.9" fill="#f0d8a8" opacity="0.86"/>
<rect x="138.0" y="187.7" width="2.5" height="1.9" fill="#fff2d0" opacity="0.81"/>
<rect x="141.4" y="187.7" width="2.5" height="1.9" fill="#ffffff" opacity="0.92"/>
<rect x="144.8" y="187.7" width="2.5" height="1.9" fill="#ffffff" opacity="0.86"/>
<rect x="127.8" y="191.7" width="2.5" height="1.9" fill="#f0d8a8" opacity="0.87"/>
<rect x="131.2" y="191.7" width="2.5" height="1.9" fill="#d8b070" opacity="0.91"/>
<rect x="134.6" y="191.7" width="2.5" height="1.9" fill="#fff2d0" opacity="0.98"/>
<rect x="138.0" y="191.7" width="2.5" height="1.9" fill="#f0d8a8" opacity="0.90"/>
<rect x="144.8" y="191.7" width="2.5" height="1.9" fill="#f0d8a8" opacity="0.80"/>
<rect x="127.8" y="195.7" width="2.5" height="1.9" fill="#e8c890" opacity="0.81"/>
<rect x="131.2" y="195.7" width="2.5" height="1.9" fill="#e8c890" opacity="0.88"/>
<rect x="134.6" y="195.7" width="2.5" height="1.9" fill="#d8b070" opacity="0.85"/>
<rect x="144.8" y="195.7" width="2.5" height="1.9" fill="#e8c890" opacity="0.87"/>
<rect x="127.8" y="199.7" width="2.5" height="1.9" fill="#ffffff" opacity="0.98"/>
<rect x="131.2" y="199.7" width="2.5" height="1.9" fill="#e8c890" opacity="0.94"/>
<rect x="134.6" y="199.7" width="2.5" height="1.9" fill="#fff2d0" opacity="0.85"/>
<rect x="138.0" y="199.7" width="2.5" height="1.9" fill="#fff2d0" opacity="0.95"/>
<rect x="141.4" y="199.7" width="2.5" height="1.9" fill="#e8c890" opacity="0.95"/>
<rect x="144.8" y="199.7" width="2.5" height="1.9" fill="#f0d8a8" opacity="0.91"/>
<rect x="127.8" y="203.7" width="2.5" height="1.9" fill="#f0d8a8" opacity="0.97"/>
<rect x="134.6" y="203.7" width="2.5" height="1.9" fill="#fff2d0" opacity="0.93"/>
<rect x="138.0" y="203.7" width="2.5" height="1.9" fill="#fff2d0" opacity="0.85"/>
<rect x="141.4" y="203.7" width="2.5" height="1.9" fill="#fff2d0" opacity="0.81"/>
<rect x="127.8" y="207.7" width="2.5" height="1.9" fill="#e8c890" opacity="0.82"/>
<rect x="131.2" y="207.7" width="2.5" height="1.9" fill="#fff2d0" opacity="0.89"/>
<rect x="134.6" y="207.7" width="2.5" height="1.9" fill="#fff2d0" opacity="0.96"/>
<rect x="138.0" y="207.7" width="2.5" height="1.9" fill="#fff2d0" opacity="0.77"/>
<rect x="141.4" y="207.7" width="2.5" height="1.9" fill="#e8c890" opacity="0.77"/>
<rect x="144.8" y="207.7" width="2.5" height="1.9" fill="#ffffff" opacity="0.77"/>
<rect x="127.8" y="211.7" width="2.5" height="1.9" fill="#e8c890" opacity="0.96"/>
<rect x="131.2" y="211.7" width="2.5" height="1.9" fill="#fff2d0" opacity="0.85"/>
<rect x="138.0" y="211.7" width="2.5" height="1.9" fill="#ffffff" opacity="0.80"/>
<rect x="141.4" y="211.7" width="2.5" height="1.9" fill="#e8c890" opacity="0.87"/>
<rect x="131.2" y="215.7" width="2.5" height="1.9" fill="#ffffff" opacity="0.77"/>
<rect x="134.6" y="215.7" width="2.5" height="1.9" fill="#ffffff" opacity="0.92"/>
<rect x="138.0" y="215.7" width="2.5" height="1.9" fill="#f0d8a8" opacity="0.92"/>
<rect x="141.4" y="215.7" width="2.5" height="1.9" fill="#ffffff" opacity="0.92"/>
<rect x="144.8" y="215.7" width="2.5" height="1.9" fill="#f0d8a8" opacity="0.91"/>
<rect x="127.8" y="219.7" width="2.5" height="1.9" fill="#ffffff" opacity="0.93"/>
<rect x="131.2" y="219.7" width="2.5" height="1.9" fill="#d8b070" opacity="0.89"/>
<rect x="134.6" y="219.7" width="2.5" height="1.9" fill="#f0d8a8" opacity="0.96"/>
<rect x="138.0" y="219.7" width="2.5" height="1.9" fill="#fff2d0" opacity="0.98"/>
<rect x="141.4" y="219.7" width="2.5" height="1.9" fill="#ffffff" opacity="0.98"/>
<rect x="144.8" y="219.7" width="2.5" height="1.9" fill="#d8b070" opacity="0.94"/>
<rect x="127.8" y="223.7" width="2.5" height="1.9" fill="#f0d8a8" opacity="0.81"/>
<rect x="131.2" y="223.7" width="2.5" height="1.9" fill="#f0d8a8" opacity="0.83"/>
<rect x="138.0" y="223.7" width="2.5" height="1.9" fill="#d8b070" opacity="0.86"/>
<rect x="141.4" y="223.7" width="2.5" height="1.9" fill="#f0d8a8" opacity="0.79"/>
<rect x="144.8" y="223.7" width="2.5" height="1.9" fill="#fff2d0" opacity="0.79"/>
<rect x="127.8" y="227.7" width="2.5" height="1.9" fill="#ffffff" opacity="0.90"/>
<rect x="131.2" y="227.7" width="2.5" height="1.9" fill="#fff2d0" opacity="0.76"/>
<rect x="138.0" y="227.7" width="2.5" height="1.9" fill="#f0d8a8" opacity="0.84"/>
<rect x="141.4" y="227.7" width="2.5" height="1.9" fill="#e8c890" opacity="0.78"/>
<rect x="144.8" y="227.7" width="2.5" height="1.9" fill="#fff2d0" opacity="0.96"/>
<rect x="127.8" y="231.7" width="2.5" height="1.9" fill="#d8b070" opacity="0.98"/>
<rect x="131.2" y="231.7" width="2.5" height="1.9" fill="#ffffff" opacity="0.90"/>
<rect x="134.6" y="231.7" width="2.5" height="1.9" fill="#fff2d0" opacity="0.92"/>
<rect x="138.0" y="231.7" width="2.5" height="1.9" fill="#f0d8a8" opacity="0.82"/>
<rect x="141.4" y="231.7" width="2.5" height="1.9" fill="#d8b070" opacity="0.91"/>
<rect x="144.8" y="231.7" width="2.5" height="1.9" fill="#ffffff" opacity="0.80"/>
<rect x="127.8" y="235.7" width="2.5" height="1.9" fill="#d8b070" opacity="0.96"/>
<rect x="131.2" y="235.7" width="2.5" height="1.9" fill="#fff2d0" opacity="0.81"/>
<rect x="134.6" y="235.7" width="2.5" height="1.9" fill="#d8b070" opacity="0.89"/>
<rect x="138.0" y="235.7" width="2.5" height="1.9" fill="#e8c890" opacity="0.88"/>
<rect x="141.4" y="235.7" width="2.5" height="1.9" fill="#fff2d0" opacity="1.00"/>
<rect x="144.8" y="235.7" width="2.5" height="1.9" fill="#fff2d0" opacity="0.89"/>
<rect x="127.8" y="239.7" width="2.5" height="1.9" fill="#fff2d0" opacity="0.94"/>
<rect x="131.2" y="239.7" width="2.5" height="1.9" fill="#ffffff" opacity="0.89"/>
<rect x="134.6" y="239.7" width="2.5" height="1.9" fill="#d8b070" opacity="0.77"/>
<rect x="141.4" y="239.7" width="2.5" height="1.9" fill="#f0d8a8" opacity="0.86"/>
<rect x="144.8" y="239.7" width="2.5" height="1.9" fill="#fff2d0" opacity="0.98"/>
<rect x="127.8" y="243.7" width="2.5" height="1.9" fill="#e8c890" opacity="0.77"/>
<rect x="134.6" y="243.7" width="2.5" height="1.9" fill="#d8b070" opacity="0.90"/>
<rect x="138.0" y="243.7" width="2.5" height="1.9" fill="#f0d8a8" opacity="0.82"/>
<rect x="144.8" y="243.7" width="2.5" height="1.9" fill="#e8c890" opacity="0.84"/>
<rect x="127.8" y="247.7" width="2.5" height="1.9" fill="#e8c890" opacity="0.89"/>
<rect x="131.2" y="247.7" width="2.5" height="1.9" fill="#f0d8a8" opacity="0.85"/>
<rect x="134.6" y="247.7" width="2.5" height="1.9" fill="#fff2d0" opacity="0.83"/>
<rect x="138.0" y="247.7" width="2.5" height="1.9" fill="#ffffff" opacity="0.90"/>
<rect x="141.4" y="247.7" width="2.5" height="1.9" fill="#f0d8a8" opacity="0.79"/>
<rect x="144.8" y="247.7" width="2.5" height="1.9" fill="#f0d8a8" opacity="0.79"/>
<rect x="148.9" y="158.9" width="2.5" height="1.9" fill="#fff2d0" opacity="0.89"/>
<rect x="152.3" y="158.9" width="2.5" height="1.9" fill="#f0d8a8" opacity="0.93"/>
<rect x="159.1" y="158.9" width="2.5" height="1.9" fill="#ffffff" opacity="0.90"/>
<rect x="148.9" y="162.9" width="2.5" height="1.9" fill="#e8c890" opacity="0.98"/>
<rect x="155.7" y="162.9" width="2.5" height="1.9" fill="#d8b070" opacity="0.87"/>
<rect x="152.3" y="166.9" width="2.5" height="1.9" fill="#ffffff" opacity="0.78"/>
<rect x="155.7" y="166.9" width="2.5" height="1.9" fill="#e8c890" opacity="0.83"/>
<rect x="162.5" y="166.9" width="2.5" height="1.9" fill="#f0d8a8" opacity="0.83"/>
<rect x="148.9" y="170.9" width="2.5" height="1.9" fill="#e8c890" opacity="0.98"/>
<rect x="162.5" y="170.9" width="2.5" height="1.9" fill="#e8c890" opacity="0.97"/>
<rect x="148.9" y="174.9" width="2.5" height="1.9" fill="#ffffff" opacity="0.81"/>
<rect x="162.5" y="174.9" width="2.5" height="1.9" fill="#fff2d0" opacity="0.89"/>
<rect x="152.3" y="182.9" width="2.5" height="1.9" fill="#e8c890" opacity="0.86"/>
<rect x="159.1" y="182.9" width="2.5" height="1.9" fill="#ffffff" opacity="0.89"/>
<rect x="148.9" y="186.9" width="2.5" height="1.9" fill="#fff2d0" opacity="0.78"/>
<rect x="159.1" y="186.9" width="2.5" height="1.9" fill="#fff2d0" opacity="0.93"/>
<rect x="162.5" y="186.9" width="2.5" height="1.9" fill="#fff2d0" opacity="0.77"/>
<rect x="155.7" y="190.9" width="2.5" height="1.9" fill="#d8b070" opacity="0.92"/>
<rect x="159.1" y="190.9" width="2.5" height="1.9" fill="#d8b070" opacity="0.76"/>
<rect x="148.9" y="194.9" width="2.5" height="1.9" fill="#ffffff" opacity="0.79"/>
<rect x="162.5" y="194.9" width="2.5" height="1.9" fill="#f0d8a8" opacity="0.80"/>
<rect x="152.3" y="198.9" width="2.5" height="1.9" fill="#ffffff" opacity="0.75"/>
<rect x="152.3" y="202.9" width="2.5" height="1.9" fill="#f0d8a8" opacity="0.91"/>
<rect x="155.7" y="202.9" width="2.5" height="1.9" fill="#d8b070" opacity="0.99"/>
<rect x="159.1" y="202.9" width="2.5" height="1.9" fill="#ffffff" opacity="0.93"/>
<rect x="162.5" y="202.9" width="2.5" height="1.9" fill="#ffffff" opacity="0.85"/>
<rect x="148.9" y="206.9" width="2.5" height="1.9" fill="#d8b070" opacity="0.78"/>
<rect x="155.7" y="206.9" width="2.5" height="1.9" fill="#fff2d0" opacity="0.88"/>
<rect x="159.1" y="206.9" width="2.5" height="1.9" fill="#d8b070" opacity="0.84"/>
<rect x="155.7" y="210.9" width="2.5" height="1.9" fill="#d8b070" opacity="0.97"/>
<rect x="159.1" y="210.9" width="2.5" height="1.9" fill="#fff2d0" opacity="0.82"/>
<rect x="148.9" y="214.9" width="2.5" height="1.9" fill="#f0d8a8" opacity="0.86"/>
<rect x="159.1" y="214.9" width="2.5" height="1.9" fill="#e8c890" opacity="0.90"/>
<rect x="148.9" y="218.9" width="2.5" height="1.9" fill="#e8c890" opacity="0.77"/>
<rect x="152.3" y="218.9" width="2.5" height="1.9" fill="#fff2d0" opacity="0.81"/>
<rect x="155.7" y="218.9" width="2.5" height="1.9" fill="#e8c890" opacity="0.76"/>
<rect x="162.5" y="218.9" width="2.5" height="1.9" fill="#f0d8a8" opacity="0.91"/>
<rect x="155.7" y="222.9" width="2.5" height="1.9" fill="#ffffff" opacity="0.77"/>
<rect x="159.1" y="222.9" width="2.5" height="1.9" fill="#d8b070" opacity="0.83"/>
<rect x="148.9" y="226.9" width="2.5" height="1.9" fill="#d8b070" opacity="0.88"/>
<rect x="148.9" y="230.9" width="2.5" height="1.9" fill="#fff2d0" opacity="0.78"/>
<rect x="152.3" y="230.9" width="2.5" height="1.9" fill="#ffffff" opacity="0.89"/>
<rect x="155.7" y="230.9" width="2.5" height="1.9" fill="#fff2d0" opacity="0.81"/>
<rect x="152.3" y="234.9" width="2.5" height="1.9" fill="#fff2d0" opacity="0.90"/>
<rect x="148.9" y="238.9" width="2.5" height="1.9" fill="#fff2d0" opacity="0.90"/>
<rect x="152.3" y="242.9" width="2.5" height="1.9" fill="#f0d8a8" opacity="0.98"/>
<rect x="148.9" y="246.9" width="2.5" height="1.9" fill="#fff2d0" opacity="0.76"/>
<rect x="152.3" y="246.9" width="2.5" height="1.9" fill="#d8b070" opacity="0.95"/>
<rect x="168.0" y="155.3" width="2.5" height="1.9" fill="#fff2d0" opacity="0.87"/>
<rect x="171.4" y="155.3" width="2.5" height="1.9" fill="#e8c890" opacity="0.95"/>
<rect x="174.8" y="155.3" width="2.5" height="1.9" fill="#ffffff" opacity="0.87"/>
<rect x="178.2" y="155.3" width="2.5" height="1.9" fill="#f0d8a8" opacity="0.78"/>
<rect x="181.6" y="155.3" width="2.5" height="1.9" fill="#e8c890" opacity="1.00"/>
<rect x="168.0" y="159.3" width="2.5" height="1.9" fill="#ffffff" opacity="0.88"/>
<rect x="174.8" y="159.3" width="2.5" height="1.9" fill="#ffffff" opacity="0.97"/>
<rect x="178.2" y="159.3" width="2.5" height="1.9" fill="#ffffff" opacity="0.89"/>
<rect x="181.6" y="159.3" width="2.5" height="1.9" fill="#f0d8a8" opacity="0.99"/>
<rect x="168.0" y="163.3" width="2.5" height="1.9" fill="#e8c890" opacity="0.81"/>
<rect x="171.4" y="163.3" width="2.5" height="1.9" fill="#e8c890" opacity="0.96"/>
<rect x="174.8" y="163.3" width="2.5" height="1.9" fill="#f0d8a8" opacity="0.98"/>
<rect x="178.2" y="163.3" width="2.5" height="1.9" fill="#d8b070" opacity="0.99"/>
<rect x="168.0" y="167.3" width="2.5" height="1.9" fill="#fff2d0" opacity="0.85"/>
<rect x="171.4" y="167.3" width="2.5" height="1.9" fill="#f0d8a8" opacity="0.93"/>
<rect x="174.8" y="167.3" width="2.5" height="1.9" fill="#e8c890" opacity="0.98"/>
<rect x="178.2" y="167.3" width="2.5" height="1.9" fill="#ffffff" opacity="0.98"/>
<rect x="181.6" y="167.3" width="2.5" height="1.9" fill="#ffffff" opacity="0.95"/>
<rect x="168.0" y="171.3" width="2.5" height="1.9" fill="#d8b070" opacity="0.81"/>
<rect x="171.4" y="171.3" width="2.5" height="1.9" fill="#fff2d0" opacity="0.87"/>
<rect x="174.8" y="171.3" width="2.5" height="1.9" fill="#e8c890" opacity="0.87"/>
<rect x="178.2" y="171.3" width="2.5" height="1.9" fill="#ffffff" opacity="0.87"/>
<rect x="181.6" y="171.3" width="2.5" height="1.9" fill="#fff2d0" opacity="0.97"/>
<rect x="168.0" y="175.3" width="2.5" height="1.9" fill="#ffffff" opacity="0.85"/>
<rect x="171.4" y="175.3" width="2.5" height="1.9" fill="#d8b070" opacity="0.84"/>
<rect x="174.8" y="175.3" width="2.5" height="1.9" fill="#f0d8a8" opacity="0.88"/>
<rect x="178.2" y="175.3" width="2.5" height="1.9" fill="#e8c890" opacity="0.85"/>
<rect x="168.0" y="179.3" width="2.5" height="1.9" fill="#d8b070" opacity="0.78"/>
<rect x="171.4" y="179.3" width="2.5" height="1.9" fill="#d8b070" opacity="0.78"/>
<rect x="174.8" y="179.3" width="2.5" height="1.9" fill="#f0d8a8" opacity="0.76"/>
<rect x="178.2" y="179.3" width="2.5" height="1.9" fill="#ffffff" opacity="0.86"/>
<rect x="168.0" y="183.3" width="2.5" height="1.9" fill="#d8b070" opacity="0.94"/>
<rect x="171.4" y="183.3" width="2.5" height="1.9" fill="#f0d8a8" opacity="0.83"/>
<rect x="174.8" y="183.3" width="2.5" height="1.9" fill="#ffffff" opacity="0.76"/>
<rect x="178.2" y="183.3" width="2.5" height="1.9" fill="#e8c890" opacity="0.78"/>
<rect x="181.6" y="183.3" width="2.5" height="1.9" fill="#ffffff" opacity="0.86"/>
<rect x="168.0" y="187.3" width="2.5" height="1.9" fill="#fff2d0" opacity="0.88"/>
<rect x="171.4" y="187.3" width="2.5" height="1.9" fill="#d8b070" opacity="0.93"/>
<rect x="174.8" y="187.3" width="2.5" height="1.9" fill="#fff2d0" opacity="0.97"/>
<rect x="178.2" y="187.3" width="2.5" height="1.9" fill="#e8c890" opacity="0.93"/>
<rect x="181.6" y="187.3" width="2.5" height="1.9" fill="#ffffff" opacity="0.88"/>
<rect x="168.0" y="191.3" width="2.5" height="1.9" fill="#f0d8a8" opacity="0.82"/>
<rect x="171.4" y="191.3" width="2.5" height="1.9" fill="#fff2d0" opacity="0.79"/>
<rect x="174.8" y="191.3" width="2.5" height="1.9" fill="#ffffff" opacity="0.89"/>
<rect x="178.2" y="191.3" width="2.5" height="1.9" fill="#d8b070" opacity="0.92"/>
<rect x="181.6" y="191.3" width="2.5" height="1.9" fill="#fff2d0" opacity="0.89"/>
<rect x="168.0" y="195.3" width="2.5" height="1.9" fill="#f0d8a8" opacity="0.99"/>
<rect x="174.8" y="195.3" width="2.5" height="1.9" fill="#d8b070" opacity="0.77"/>
<rect x="178.2" y="195.3" width="2.5" height="1.9" fill="#ffffff" opacity="0.87"/>
<rect x="181.6" y="195.3" width="2.5" height="1.9" fill="#d8b070" opacity="0.82"/>
<rect x="168.0" y="199.3" width="2.5" height="1.9" fill="#fff2d0" opacity="0.79"/>
<rect x="171.4" y="199.3" width="2.5" height="1.9" fill="#ffffff" opacity="0.94"/>
<rect x="174.8" y="199.3" width="2.5" height="1.9" fill="#fff2d0" opacity="0.88"/>
<rect x="178.2" y="199.3" width="2.5" height="1.9" fill="#ffffff" opacity="0.95"/>
<rect x="181.6" y="199.3" width="2.5" height="1.9" fill="#d8b070" opacity="0.93"/>
<rect x="168.0" y="203.3" width="2.5" height="1.9" fill="#f0d8a8" opacity="0.98"/>
<rect x="171.4" y="203.3" width="2.5" height="1.9" fill="#f0d8a8" opacity="0.98"/>
<rect x="174.8" y="203.3" width="2.5" height="1.9" fill="#ffffff" opacity="0.87"/>
<rect x="178.2" y="203.3" width="2.5" height="1.9" fill="#ffffff" opacity="0.93"/>
<rect x="168.0" y="207.3" width="2.5" height="1.9" fill="#f0d8a8" opacity="0.84"/>
<rect x="174.8" y="207.3" width="2.5" height="1.9" fill="#d8b070" opacity="0.95"/>
<rect x="181.6" y="207.3" width="2.5" height="1.9" fill="#ffffff" opacity="0.90"/>
<rect x="171.4" y="211.3" width="2.5" height="1.9" fill="#e8c890" opacity="0.93"/>
<rect x="174.8" y="211.3" width="2.5" height="1.9" fill="#f0d8a8" opacity="0.91"/>
<rect x="178.2" y="211.3" width="2.5" height="1.9" fill="#ffffff" opacity="0.90"/>
<rect x="181.6" y="211.3" width="2.5" height="1.9" fill="#f0d8a8" opacity="0.96"/>
<rect x="171.4" y="215.3" width="2.5" height="1.9" fill="#ffffff" opacity="0.76"/>
<rect x="174.8" y="215.3" width="2.5" height="1.9" fill="#e8c890" opacity="0.82"/>
<rect x="178.2" y="215.3" width="2.5" height="1.9" fill="#ffffff" opacity="0.99"/>
<rect x="181.6" y="215.3" width="2.5" height="1.9" fill="#fff2d0" opacity="0.82"/>
<rect x="168.0" y="219.3" width="2.5" height="1.9" fill="#fff2d0" opacity="0.81"/>
<rect x="171.4" y="219.3" width="2.5" height="1.9" fill="#e8c890" opacity="0.99"/>
<rect x="174.8" y="219.3" width="2.5" height="1.9" fill="#e8c890" opacity="0.87"/>
<rect x="178.2" y="219.3" width="2.5" height="1.9" fill="#e8c890" opacity="0.77"/>
<rect x="181.6" y="219.3" width="2.5" height="1.9" fill="#d8b070" opacity="0.82"/>
<rect x="168.0" y="223.3" width="2.5" height="1.9" fill="#f0d8a8" opacity="0.83"/>
<rect x="171.4" y="223.3" width="2.5" height="1.9" fill="#ffffff" opacity="0.92"/>
<rect x="178.2" y="223.3" width="2.5" height="1.9" fill="#fff2d0" opacity="0.83"/>
<rect x="181.6" y="223.3" width="2.5" height="1.9" fill="#e8c890" opacity="0.82"/>
<rect x="168.0" y="227.3" width="2.5" height="1.9" fill="#d8b070" opacity="0.94"/>
<rect x="171.4" y="227.3" width="2.5" height="1.9" fill="#fff2d0" opacity="0.91"/>
<rect x="174.8" y="227.3" width="2.5" height="1.9" fill="#fff2d0" opacity="0.98"/>
<rect x="178.2" y="227.3" width="2.5" height="1.9" fill="#f0d8a8" opacity="1.00"/>
<rect x="181.6" y="227.3" width="2.5" height="1.9" fill="#d8b070" opacity="0.78"/>
<rect x="168.0" y="231.3" width="2.5" height="1.9" fill="#ffffff" opacity="0.76"/>
<rect x="171.4" y="231.3" width="2.5" height="1.9" fill="#ffffff" opacity="0.97"/>
<rect x="174.8" y="231.3" width="2.5" height="1.9" fill="#d8b070" opacity="0.85"/>
<rect x="178.2" y="231.3" width="2.5" height="1.9" fill="#ffffff" opacity="0.81"/>
<rect x="181.6" y="231.3" width="2.5" height="1.9" fill="#d8b070" opacity="0.93"/>
<rect x="168.0" y="235.3" width="2.5" height="1.9" fill="#d8b070" opacity="0.96"/>
<rect x="171.4" y="235.3" width="2.5" height="1.9" fill="#e8c890" opacity="0.96"/>
<rect x="174.8" y="235.3" width="2.5" height="1.9" fill="#ffffff" opacity="0.91"/>
<rect x="178.2" y="235.3" width="2.5" height="1.9" fill="#d8b070" opacity="0.95"/>
<rect x="181.6" y="235.3" width="2.5" height="1.9" fill="#ffffff" opacity="0.91"/>
<rect x="168.0" y="239.3" width="2.5" height="1.9" fill="#fff2d0" opacity="0.99"/>
<rect x="171.4" y="239.3" width="2.5" height="1.9" fill="#fff2d0" opacity="0.82"/>
<rect x="174.8" y="239.3" width="2.5" height="1.9" fill="#d8b070" opacity="0.91"/>
<rect x="178.2" y="239.3" width="2.5" height="1.9" fill="#fff2d0" opacity="0.76"/>
<rect x="181.6" y="239.3" width="2.5" height="1.9" fill="#f0d8a8" opacity="0.97"/>
<rect x="168.0" y="243.3" width="2.5" height="1.9" fill="#d8b070" opacity="0.93"/>
<rect x="174.8" y="243.3" width="2.5" height="1.9" fill="#d8b070" opacity="0.98"/>
<rect x="178.2" y="243.3" width="2.5" height="1.9" fill="#ffffff" opacity="0.79"/>
<rect x="181.6" y="243.3" width="2.5" height="1.9" fill="#ffffff" opacity="0.95"/>
<rect x="168.0" y="247.3" width="2.5" height="1.9" fill="#d8b070" opacity="0.81"/>
<rect x="171.4" y="247.3" width="2.5" height="1.9" fill="#ffffff" opacity="0.94"/>
<rect x="178.2" y="247.3" width="2.5" height="1.9" fill="#fff2d0" opacity="0.89"/>
<rect x="181.6" y="247.3" width="2.5" height="1.9" fill="#fff2d0" opacity="0.86"/>
<rect x="189.8" y="170.9" width="2.5" height="1.9" fill="#fff2d0" opacity="0.83"/>
<rect x="193.2" y="170.9" width="2.5" height="1.9" fill="#e8c890" opacity="0.89"/>
<rect x="196.6" y="170.9" width="2.5" height="1.9" fill="#ffffff" opacity="0.82"/>
<rect x="200.0" y="170.9" width="2.5" height="1.9" fill="#ffffff" opacity="0.80"/>
<rect x="203.4" y="170.9" width="2.5" height="1.9" fill="#e8c890" opacity="0.76"/>
<rect x="189.8" y="174.9" width="2.5" height="1.9" fill="#d8b070" opacity="0.92"/>
<rect x="193.2" y="174.9" width="2.5" height="1.9" fill="#d8b070" opacity="0.87"/>
<rect x="200.0" y="174.9" width="2.5" height="1.9" fill="#ffffff" opacity="0.87"/>
<rect x="203.4" y="174.9" width="2.5" height="1.9" fill="#e8c890" opacity="0.85"/>
<rect x="189.8" y="178.9" width="2.5" height="1.9" fill="#e8c890" opacity="0.90"/>
<rect x="196.6" y="178.9" width="2.5" height="1.9" fill="#fff2d0" opacity="0.98"/>
<rect x="189.8" y="182.9" width="2.5" height="1.9" fill="#f0d8a8" opacity="0.79"/>
<rect x="193.2" y="182.9" width="2.5" height="1.9" fill="#fff2d0" opacity="0.88"/>
<rect x="200.0" y="182.9" width="2.5" height="1.9" fill="#f0d8a8" opacity="0.94"/>
<rect x="203.4" y="182.9" width="2.5" height="1.9" fill="#e8c890" opacity="0.87"/>
<rect x="193.2" y="186.9" width="2.5" height="1.9" fill="#d8b070" opacity="0.75"/>
<rect x="196.6" y="186.9" width="2.5" height="1.9" fill="#fff2d0" opacity="0.95"/>
<rect x="203.4" y="186.9" width="2.5" height="1.9" fill="#e8c890" opacity="0.96"/>
<rect x="196.6" y="190.9" width="2.5" height="1.9" fill="#ffffff" opacity="0.85"/>
<rect x="203.4" y="190.9" width="2.5" height="1.9" fill="#e8c890" opacity="0.76"/>
<rect x="189.8" y="194.9" width="2.5" height="1.9" fill="#fff2d0" opacity="0.83"/>
<rect x="196.6" y="194.9" width="2.5" height="1.9" fill="#d8b070" opacity="0.95"/>
<rect x="200.0" y="194.9" width="2.5" height="1.9" fill="#ffffff" opacity="0.84"/>
<rect x="203.4" y="194.9" width="2.5" height="1.9" fill="#d8b070" opacity="0.90"/>
<rect x="189.8" y="198.9" width="2.5" height="1.9" fill="#fff2d0" opacity="0.94"/>
<rect x="193.2" y="198.9" width="2.5" height="1.9" fill="#fff2d0" opacity="0.89"/>
<rect x="200.0" y="198.9" width="2.5" height="1.9" fill="#f0d8a8" opacity="0.79"/>
<rect x="203.4" y="198.9" width="2.5" height="1.9" fill="#fff2d0" opacity="0.86"/>
<rect x="189.8" y="202.9" width="2.5" height="1.9" fill="#e8c890" opacity="0.76"/>
<rect x="193.2" y="202.9" width="2.5" height="1.9" fill="#e8c890" opacity="0.96"/>
<rect x="200.0" y="202.9" width="2.5" height="1.9" fill="#fff2d0" opacity="0.83"/>
<rect x="189.8" y="206.9" width="2.5" height="1.9" fill="#d8b070" opacity="0.86"/>
<rect x="196.6" y="206.9" width="2.5" height="1.9" fill="#ffffff" opacity="0.95"/>
<rect x="189.8" y="210.9" width="2.5" height="1.9" fill="#ffffff" opacity="0.99"/>
<rect x="193.2" y="210.9" width="2.5" height="1.9" fill="#fff2d0" opacity="0.94"/>
<rect x="196.6" y="210.9" width="2.5" height="1.9" fill="#f0d8a8" opacity="0.79"/>
<rect x="203.4" y="210.9" width="2.5" height="1.9" fill="#f0d8a8" opacity="0.80"/>
<rect x="203.4" y="214.9" width="2.5" height="1.9" fill="#e8c890" opacity="0.98"/>
<rect x="189.8" y="218.9" width="2.5" height="1.9" fill="#ffffff" opacity="0.86"/>
<rect x="193.2" y="218.9" width="2.5" height="1.9" fill="#ffffff" opacity="0.88"/>
<rect x="196.6" y="218.9" width="2.5" height="1.9" fill="#e8c890" opacity="0.89"/>
<rect x="200.0" y="218.9" width="2.5" height="1.9" fill="#f0d8a8" opacity="0.88"/>
<rect x="203.4" y="218.9" width="2.5" height="1.9" fill="#d8b070" opacity="0.90"/>
<rect x="189.8" y="222.9" width="2.5" height="1.9" fill="#d8b070" opacity="0.79"/>
<rect x="193.2" y="222.9" width="2.5" height="1.9" fill="#d8b070" opacity="0.93"/>
<rect x="196.6" y="222.9" width="2.5" height="1.9" fill="#ffffff" opacity="1.00"/>
<rect x="200.0" y="222.9" width="2.5" height="1.9" fill="#fff2d0" opacity="0.94"/>
<rect x="189.8" y="226.9" width="2.5" height="1.9" fill="#fff2d0" opacity="0.96"/>
<rect x="189.8" y="230.9" width="2.5" height="1.9" fill="#d8b070" opacity="0.77"/>
<rect x="200.0" y="230.9" width="2.5" height="1.9" fill="#d8b070" opacity="0.86"/>
<rect x="203.4" y="230.9" width="2.5" height="1.9" fill="#ffffff" opacity="0.80"/>
<rect x="189.8" y="234.9" width="2.5" height="1.9" fill="#fff2d0" opacity="0.77"/>
<rect x="193.2" y="234.9" width="2.5" height="1.9" fill="#ffffff" opacity="0.97"/>
<rect x="196.6" y="234.9" width="2.5" height="1.9" fill="#ffffff" opacity="0.96"/>
<rect x="203.4" y="234.9" width="2.5" height="1.9" fill="#f0d8a8" opacity="0.95"/>
<rect x="189.8" y="238.9" width="2.5" height="1.9" fill="#d8b070" opacity="0.79"/>
<rect x="193.2" y="238.9" width="2.5" height="1.9" fill="#d8b070" opacity="0.99"/>
<rect x="196.6" y="238.9" width="2.5" height="1.9" fill="#d8b070" opacity="0.78"/>
<rect x="200.0" y="238.9" width="2.5" height="1.9" fill="#ffffff" opacity="0.76"/>
<rect x="189.8" y="242.9" width="2.5" height="1.9" fill="#ffffff" opacity="0.77"/>
<rect x="196.6" y="242.9" width="2.5" height="1.9" fill="#d8b070" opacity="0.97"/>
<rect x="203.4" y="242.9" width="2.5" height="1.9" fill="#ffffff" opacity="0.84"/>
<rect x="210.9" y="155.3" width="2.5" height="1.9" fill="#d8b070" opacity="0.78"/>
<rect x="210.9" y="159.3" width="2.5" height="1.9" fill="#fff2d0" opacity="0.75"/>
<rect x="214.3" y="159.3" width="2.5" height="1.9" fill="#fff2d0" opacity="0.93"/>
<rect x="207.5" y="163.3" width="2.5" height="1.9" fill="#d8b070" opacity="0.94"/>
<rect x="210.9" y="163.3" width="2.5" height="1.9" fill="#f0d8a8" opacity="0.91"/>
<rect x="214.3" y="163.3" width="2.5" height="1.9" fill="#e8c890" opacity="0.85"/>
<rect x="207.5" y="171.3" width="2.5" height="1.9" fill="#ffffff" opacity="0.81"/>
<rect x="214.3" y="171.3" width="2.5" height="1.9" fill="#d8b070" opacity="0.99"/>
<rect x="207.5" y="175.3" width="2.5" height="1.9" fill="#ffffff" opacity="0.81"/>
<rect x="214.3" y="175.3" width="2.5" height="1.9" fill="#ffffff" opacity="0.90"/>
<rect x="207.5" y="179.3" width="2.5" height="1.9" fill="#f0d8a8" opacity="0.84"/>
<rect x="210.9" y="179.3" width="2.5" height="1.9" fill="#e8c890" opacity="0.86"/>
<rect x="207.5" y="183.3" width="2.5" height="1.9" fill="#f0d8a8" opacity="0.92"/>
<rect x="210.9" y="183.3" width="2.5" height="1.9" fill="#ffffff" opacity="0.84"/>
<rect x="210.9" y="187.3" width="2.5" height="1.9" fill="#d8b070" opacity="0.84"/>
<rect x="207.5" y="195.3" width="2.5" height="1.9" fill="#fff2d0" opacity="0.77"/>
<rect x="210.9" y="195.3" width="2.5" height="1.9" fill="#d8b070" opacity="0.76"/>
<rect x="214.3" y="203.3" width="2.5" height="1.9" fill="#f0d8a8" opacity="0.84"/>
<rect x="210.9" y="207.3" width="2.5" height="1.9" fill="#e8c890" opacity="0.77"/>
<rect x="214.3" y="207.3" width="2.5" height="1.9" fill="#f0d8a8" opacity="1.00"/>
<rect x="207.5" y="211.3" width="2.5" height="1.9" fill="#fff2d0" opacity="0.91"/>
<rect x="207.5" y="215.3" width="2.5" height="1.9" fill="#ffffff" opacity="0.91"/>
<rect x="214.3" y="223.3" width="2.5" height="1.9" fill="#f0d8a8" opacity="0.75"/>
<rect x="214.3" y="235.3" width="2.5" height="1.9" fill="#fff2d0" opacity="0.75"/>
<rect x="207.5" y="243.3" width="2.5" height="1.9" fill="#d8b070" opacity="0.85"/>
<rect x="210.9" y="247.3" width="2.5" height="1.9" fill="#e8c890" opacity="0.89"/>
<rect x="214.3" y="247.3" width="2.5" height="1.9" fill="#fff2d0" opacity="0.78"/>
<rect x="219.2" y="159.3" width="2.5" height="1.9" fill="#e8c890" opacity="0.85"/>
<rect x="222.6" y="159.3" width="2.5" height="1.9" fill="#fff2d0" opacity="0.90"/>
<rect x="226.0" y="159.3" width="2.5" height="1.9" fill="#f0d8a8" opacity="0.86"/>
<rect x="232.8" y="159.3" width="2.5" height="1.9" fill="#e8c890" opacity="0.79"/>
<rect x="222.6" y="163.3" width="2.5" height="1.9" fill="#ffffff" opacity="0.90"/>
<rect x="232.8" y="163.3" width="2.5" height="1.9" fill="#f0d8a8" opacity="0.81"/>
<rect x="222.6" y="167.3" width="2.5" height="1.9" fill="#ffffff" opacity="0.79"/>
<rect x="226.0" y="167.3" width="2.5" height="1.9" fill="#f0d8a8" opacity="0.85"/>
<rect x="229.4" y="167.3" width="2.5" height="1.9" fill="#e8c890" opacity="0.91"/>
<rect x="219.2" y="171.3" width="2.5" height="1.9" fill="#ffffff" opacity="0.82"/>
<rect x="222.6" y="171.3" width="2.5" height="1.9" fill="#e8c890" opacity="0.78"/>
<rect x="229.4" y="171.3" width="2.5" height="1.9" fill="#ffffff" opacity="0.80"/>
<rect x="219.2" y="175.3" width="2.5" height="1.9" fill="#fff2d0" opacity="0.89"/>
<rect x="222.6" y="175.3" width="2.5" height="1.9" fill="#f0d8a8" opacity="0.85"/>
<rect x="226.0" y="175.3" width="2.5" height="1.9" fill="#e8c890" opacity="0.81"/>
<rect x="229.4" y="175.3" width="2.5" height="1.9" fill="#ffffff" opacity="0.95"/>
<rect x="232.8" y="175.3" width="2.5" height="1.9" fill="#ffffff" opacity="0.83"/>
<rect x="219.2" y="179.3" width="2.5" height="1.9" fill="#d8b070" opacity="0.96"/>
<rect x="222.6" y="179.3" width="2.5" height="1.9" fill="#e8c890" opacity="0.85"/>
<rect x="226.0" y="179.3" width="2.5" height="1.9" fill="#fff2d0" opacity="0.92"/>
<rect x="232.8" y="179.3" width="2.5" height="1.9" fill="#d8b070" opacity="0.87"/>
<rect x="219.2" y="183.3" width="2.5" height="1.9" fill="#e8c890" opacity="0.87"/>
<rect x="222.6" y="183.3" width="2.5" height="1.9" fill="#ffffff" opacity="0.90"/>
<rect x="226.0" y="183.3" width="2.5" height="1.9" fill="#e8c890" opacity="0.84"/>
<rect x="229.4" y="183.3" width="2.5" height="1.9" fill="#e8c890" opacity="0.92"/>
<rect x="219.2" y="187.3" width="2.5" height="1.9" fill="#e8c890" opacity="0.76"/>
<rect x="222.6" y="187.3" width="2.5" height="1.9" fill="#f0d8a8" opacity="0.88"/>
<rect x="229.4" y="187.3" width="2.5" height="1.9" fill="#f0d8a8" opacity="0.80"/>
<rect x="232.8" y="187.3" width="2.5" height="1.9" fill="#ffffff" opacity="0.91"/>
<rect x="219.2" y="191.3" width="2.5" height="1.9" fill="#f0d8a8" opacity="0.82"/>
<rect x="226.0" y="191.3" width="2.5" height="1.9" fill="#fff2d0" opacity="0.96"/>
<rect x="229.4" y="191.3" width="2.5" height="1.9" fill="#d8b070" opacity="0.79"/>
<rect x="232.8" y="191.3" width="2.5" height="1.9" fill="#d8b070" opacity="0.91"/>
<rect x="219.2" y="195.3" width="2.5" height="1.9" fill="#ffffff" opacity="0.76"/>
<rect x="226.0" y="195.3" width="2.5" height="1.9" fill="#d8b070" opacity="0.91"/>
<rect x="229.4" y="195.3" width="2.5" height="1.9" fill="#fff2d0" opacity="0.89"/>
<rect x="232.8" y="195.3" width="2.5" height="1.9" fill="#ffffff" opacity="0.85"/>
<rect x="229.4" y="199.3" width="2.5" height="1.9" fill="#f0d8a8" opacity="0.86"/>
<rect x="219.2" y="203.3" width="2.5" height="1.9" fill="#ffffff" opacity="0.92"/>
<rect x="226.0" y="203.3" width="2.5" height="1.9" fill="#f0d8a8" opacity="0.96"/>
<rect x="232.8" y="203.3" width="2.5" height="1.9" fill="#e8c890" opacity="0.93"/>
<rect x="222.6" y="207.3" width="2.5" height="1.9" fill="#e8c890" opacity="0.78"/>
<rect x="229.4" y="207.3" width="2.5" height="1.9" fill="#d8b070" opacity="0.88"/>
<rect x="219.2" y="211.3" width="2.5" height="1.9" fill="#d8b070" opacity="0.87"/>
<rect x="222.6" y="211.3" width="2.5" height="1.9" fill="#ffffff" opacity="0.98"/>
<rect x="226.0" y="211.3" width="2.5" height="1.9" fill="#ffffff" opacity="0.87"/>
<rect x="232.8" y="211.3" width="2.5" height="1.9" fill="#ffffff" opacity="0.78"/>
<rect x="222.6" y="215.3" width="2.5" height="1.9" fill="#e8c890" opacity="0.83"/>
<rect x="226.0" y="215.3" width="2.5" height="1.9" fill="#fff2d0" opacity="0.91"/>
<rect x="229.4" y="215.3" width="2.5" height="1.9" fill="#e8c890" opacity="0.92"/>
<rect x="232.8" y="215.3" width="2.5" height="1.9" fill="#e8c890" opacity="0.96"/>
<rect x="219.2" y="219.3" width="2.5" height="1.9" fill="#e8c890" opacity="0.79"/>
<rect x="226.0" y="219.3" width="2.5" height="1.9" fill="#f0d8a8" opacity="0.92"/>
<rect x="229.4" y="219.3" width="2.5" height="1.9" fill="#d8b070" opacity="0.84"/>
<rect x="232.8" y="219.3" width="2.5" height="1.9" fill="#f0d8a8" opacity="0.81"/>
<rect x="219.2" y="223.3" width="2.5" height="1.9" fill="#d8b070" opacity="0.84"/>
<rect x="226.0" y="223.3" width="2.5" height="1.9" fill="#e8c890" opacity="0.77"/>
<rect x="229.4" y="223.3" width="2.5" height="1.9" fill="#ffffff" opacity="0.98"/>
<rect x="232.8" y="223.3" width="2.5" height="1.9" fill="#ffffff" opacity="0.78"/>
<rect x="219.2" y="227.3" width="2.5" height="1.9" fill="#e8c890" opacity="0.78"/>
<rect x="222.6" y="227.3" width="2.5" height="1.9" fill="#fff2d0" opacity="0.76"/>
<rect x="229.4" y="227.3" width="2.5" height="1.9" fill="#e8c890" opacity="0.87"/>
<rect x="232.8" y="227.3" width="2.5" height="1.9" fill="#ffffff" opacity="0.99"/>
<rect x="226.0" y="231.3" width="2.5" height="1.9" fill="#fff2d0" opacity="0.80"/>
<rect x="229.4" y="231.3" width="2.5" height="1.9" fill="#e8c890" opacity="0.93"/>
<rect x="232.8" y="231.3" width="2.5" height="1.9" fill="#fff2d0" opacity="0.94"/>
<rect x="219.2" y="235.3" width="2.5" height="1.9" fill="#d8b070" opacity="0.92"/>
<rect x="222.6" y="235.3" width="2.5" height="1.9" fill="#d8b070" opacity="0.90"/>
<rect x="232.8" y="235.3" width="2.5" height="1.9" fill="#d8b070" opacity="0.76"/>
<rect x="219.2" y="239.3" width="2.5" height="1.9" fill="#d8b070" opacity="0.92"/>
<rect x="222.6" y="239.3" width="2.5" height="1.9" fill="#e8c890" opacity="0.78"/>
<rect x="226.0" y="239.3" width="2.5" height="1.9" fill="#d8b070" opacity="0.76"/>
<rect x="219.2" y="243.3" width="2.5" height="1.9" fill="#ffffff" opacity="0.79"/>
<rect x="232.8" y="243.3" width="2.5" height="1.9" fill="#fff2d0" opacity="0.88"/>
<rect x="229.4" y="247.3" width="2.5" height="1.9" fill="#f0d8a8" opacity="0.86"/>
<rect x="238.0" y="161.5" width="2.5" height="1.9" fill="#fff2d0" opacity="0.99"/>
<rect x="241.4" y="161.5" width="2.5" height="1.9" fill="#e8c890" opacity="0.93"/>
<rect x="248.2" y="161.5" width="2.5" height="1.9" fill="#e8c890" opacity="0.78"/>
<rect x="238.0" y="165.5" width="2.5" height="1.9" fill="#f0d8a8" opacity="0.83"/>
<rect x="241.4" y="165.5" width="2.5" height="1.9" fill="#e8c890" opacity="0.99"/>
<rect x="244.8" y="165.5" width="2.5" height="1.9" fill="#d8b070" opacity="0.83"/>
<rect x="251.6" y="165.5" width="2.5" height="1.9" fill="#f0d8a8" opacity="0.79"/>
<rect x="238.0" y="169.5" width="2.5" height="1.9" fill="#fff2d0" opacity="1.00"/>
<rect x="241.4" y="169.5" width="2.5" height="1.9" fill="#e8c890" opacity="0.89"/>
<rect x="244.8" y="169.5" width="2.5" height="1.9" fill="#fff2d0" opacity="0.77"/>
<rect x="248.2" y="169.5" width="2.5" height="1.9" fill="#e8c890" opacity="0.87"/>
<rect x="251.6" y="169.5" width="2.5" height="1.9" fill="#f0d8a8" opacity="0.85"/>
<rect x="238.0" y="173.5" width="2.5" height="1.9" fill="#f0d8a8" opacity="0.92"/>
<rect x="241.4" y="173.5" width="2.5" height="1.9" fill="#e8c890" opacity="0.77"/>
<rect x="248.2" y="173.5" width="2.5" height="1.9" fill="#fff2d0" opacity="0.93"/>
<rect x="238.0" y="181.5" width="2.5" height="1.9" fill="#ffffff" opacity="0.95"/>
<rect x="244.8" y="181.5" width="2.5" height="1.9" fill="#e8c890" opacity="0.83"/>
<rect x="248.2" y="181.5" width="2.5" height="1.9" fill="#e8c890" opacity="0.79"/>
<rect x="238.0" y="185.5" width="2.5" height="1.9" fill="#d8b070" opacity="0.97"/>
<rect x="244.8" y="185.5" width="2.5" height="1.9" fill="#f0d8a8" opacity="0.79"/>
<rect x="248.2" y="185.5" width="2.5" height="1.9" fill="#e8c890" opacity="0.88"/>
<rect x="251.6" y="185.5" width="2.5" height="1.9" fill="#f0d8a8" opacity="0.75"/>
<rect x="238.0" y="189.5" width="2.5" height="1.9" fill="#fff2d0" opacity="0.99"/>
<rect x="244.8" y="189.5" width="2.5" height="1.9" fill="#d8b070" opacity="0.80"/>
<rect x="248.2" y="189.5" width="2.5" height="1.9" fill="#fff2d0" opacity="0.82"/>
<rect x="251.6" y="189.5" width="2.5" height="1.9" fill="#e8c890" opacity="0.93"/>
<rect x="238.0" y="193.5" width="2.5" height="1.9" fill="#d8b070" opacity="0.86"/>
<rect x="241.4" y="193.5" width="2.5" height="1.9" fill="#ffffff" opacity="0.79"/>
<rect x="244.8" y="193.5" width="2.5" height="1.9" fill="#d8b070" opacity="0.86"/>
<rect x="248.2" y="193.5" width="2.5" height="1.9" fill="#d8b070" opacity="0.80"/>
<rect x="251.6" y="193.5" width="2.5" height="1.9" fill="#e8c890" opacity="0.82"/>
<rect x="238.0" y="197.5" width="2.5" height="1.9" fill="#d8b070" opacity="0.89"/>
<rect x="241.4" y="197.5" width="2.5" height="1.9" fill="#d8b070" opacity="0.81"/>
<rect x="244.8" y="197.5" width="2.5" height="1.9" fill="#d8b070" opacity="0.93"/>
<rect x="248.2" y="197.5" width="2.5" height="1.9" fill="#f0d8a8" opacity="0.95"/>
<rect x="251.6" y="197.5" width="2.5" height="1.9" fill="#f0d8a8" opacity="0.92"/>
<rect x="238.0" y="201.5" width="2.5" height="1.9" fill="#ffffff" opacity="0.80"/>
<rect x="241.4" y="201.5" width="2.5" height="1.9" fill="#fff2d0" opacity="0.84"/>
<rect x="244.8" y="201.5" width="2.5" height="1.9" fill="#f0d8a8" opacity="1.00"/>
<rect x="248.2" y="201.5" width="2.5" height="1.9" fill="#fff2d0" opacity="0.85"/>
<rect x="251.6" y="201.5" width="2.5" height="1.9" fill="#fff2d0" opacity="0.83"/>
<rect x="241.4" y="205.5" width="2.5" height="1.9" fill="#d8b070" opacity="0.89"/>
<rect x="248.2" y="205.5" width="2.5" height="1.9" fill="#f0d8a8" opacity="0.76"/>
<rect x="251.6" y="205.5" width="2.5" height="1.9" fill="#f0d8a8" opacity="0.86"/>
<rect x="238.0" y="209.5" width="2.5" height="1.9" fill="#f0d8a8" opacity="0.80"/>
<rect x="251.6" y="209.5" width="2.5" height="1.9" fill="#fff2d0" opacity="0.79"/>
<rect x="238.0" y="213.5" width="2.5" height="1.9" fill="#f0d8a8" opacity="0.80"/>
<rect x="241.4" y="213.5" width="2.5" height="1.9" fill="#fff2d0" opacity="0.97"/>
<rect x="244.8" y="213.5" width="2.5" height="1.9" fill="#ffffff" opacity="0.84"/>
<rect x="248.2" y="213.5" width="2.5" height="1.9" fill="#d8b070" opacity="0.79"/>
<rect x="241.4" y="217.5" width="2.5" height="1.9" fill="#f0d8a8" opacity="0.78"/>
<rect x="244.8" y="217.5" width="2.5" height="1.9" fill="#e8c890" opacity="0.78"/>
<rect x="248.2" y="217.5" width="2.5" height="1.9" fill="#e8c890" opacity="0.95"/>
<rect x="251.6" y="217.5" width="2.5" height="1.9" fill="#e8c890" opacity="0.82"/>
<rect x="238.0" y="221.5" width="2.5" height="1.9" fill="#fff2d0" opacity="0.75"/>
<rect x="251.6" y="221.5" width="2.5" height="1.9" fill="#fff2d0" opacity="0.79"/>
<rect x="238.0" y="225.5" width="2.5" height="1.9" fill="#e8c890" opacity="0.78"/>
<rect x="241.4" y="225.5" width="2.5" height="1.9" fill="#e8c890" opacity="0.86"/>
<rect x="244.8" y="225.5" width="2.5" height="1.9" fill="#ffffff" opacity="0.87"/>
<rect x="248.2" y="225.5" width="2.5" height="1.9" fill="#ffffff" opacity="0.99"/>
<rect x="251.6" y="225.5" width="2.5" height="1.9" fill="#e8c890" opacity="0.85"/>
<rect x="238.0" y="229.5" width="2.5" height="1.9" fill="#fff2d0" opacity="0.76"/>
<rect x="241.4" y="229.5" width="2.5" height="1.9" fill="#fff2d0" opacity="0.99"/>
<rect x="244.8" y="229.5" width="2.5" height="1.9" fill="#ffffff" opacity="0.95"/>
<rect x="248.2" y="229.5" width="2.5" height="1.9" fill="#f0d8a8" opacity="0.87"/>
<rect x="251.6" y="229.5" width="2.5" height="1.9" fill="#f0d8a8" opacity="0.79"/>
<rect x="241.4" y="233.5" width="2.5" height="1.9" fill="#e8c890" opacity="0.89"/>
<rect x="244.8" y="233.5" width="2.5" height="1.9" fill="#d8b070" opacity="0.91"/>
<rect x="248.2" y="233.5" width="2.5" height="1.9" fill="#d8b070" opacity="0.79"/>
<rect x="251.6" y="233.5" width="2.5" height="1.9" fill="#e8c890" opacity="0.85"/>
<rect x="238.0" y="237.5" width="2.5" height="1.9" fill="#ffffff" opacity="0.81"/>
<rect x="244.8" y="237.5" width="2.5" height="1.9" fill="#e8c890" opacity="0.96"/>
<rect x="251.6" y="237.5" width="2.5" height="1.9" fill="#e8c890" opacity="0.89"/>
<rect x="248.2" y="241.5" width="2.5" height="1.9" fill="#e8c890" opacity="0.90"/>
<rect x="251.6" y="241.5" width="2.5" height="1.9" fill="#d8b070" opacity="0.82"/>
<rect x="238.0" y="245.5" width="2.5" height="1.9" fill="#f0d8a8" opacity="0.84"/>
<rect x="241.4" y="245.5" width="2.5" height="1.9" fill="#ffffff" opacity="0.94"/>
<rect x="248.2" y="245.5" width="2.5" height="1.9" fill="#f0d8a8" opacity="0.92"/>
<rect x="251.6" y="245.5" width="2.5" height="1.9" fill="#ffffff" opacity="0.89"/>
<rect x="260.6" y="158.5" width="2.5" height="1.9" fill="#fff2d0" opacity="0.99"/>
<rect x="257.2" y="162.5" width="2.5" height="1.9" fill="#f0d8a8" opacity="0.81"/>
<rect x="267.4" y="174.5" width="2.5" height="1.9" fill="#fff2d0" opacity="0.92"/>
<rect x="267.4" y="178.5" width="2.5" height="1.9" fill="#fff2d0" opacity="0.95"/>
<rect x="267.4" y="182.5" width="2.5" height="1.9" fill="#ffffff" opacity="0.83"/>
<rect x="257.2" y="186.5" width="2.5" height="1.9" fill="#f0d8a8" opacity="0.99"/>
<rect x="260.6" y="194.5" width="2.5" height="1.9" fill="#d8b070" opacity="1.00"/>
<rect x="257.2" y="198.5" width="2.5" height="1.9" fill="#d8b070" opacity="1.00"/>
<rect x="264.0" y="198.5" width="2.5" height="1.9" fill="#f0d8a8" opacity="0.86"/>
<rect x="264.0" y="202.5" width="2.5" height="1.9" fill="#d8b070" opacity="0.99"/>
<rect x="267.4" y="206.5" width="2.5" height="1.9" fill="#fff2d0" opacity="0.87"/>
<rect x="260.6" y="210.5" width="2.5" height="1.9" fill="#e8c890" opacity="0.94"/>
<rect x="264.0" y="214.5" width="2.5" height="1.9" fill="#d8b070" opacity="0.92"/>
<rect x="257.2" y="230.5" width="2.5" height="1.9" fill="#e8c890" opacity="0.76"/>
<rect x="264.0" y="242.5" width="2.5" height="1.9" fill="#fff2d0" opacity="0.95"/>
<rect x="257.2" y="246.5" width="2.5" height="1.9" fill="#ffffff" opacity="0.86"/>
<rect x="275.2" y="164.4" width="2.5" height="1.9" fill="#f0d8a8" opacity="0.88"/>
<rect x="278.6" y="164.4" width="2.5" height="1.9" fill="#f0d8a8" opacity="0.90"/>
<rect x="282.0" y="164.4" width="2.5" height="1.9" fill="#d8b070" opacity="0.95"/>
<rect x="285.4" y="164.4" width="2.5" height="1.9" fill="#d8b070" opacity="0.82"/>
<rect x="292.2" y="164.4" width="2.5" height="1.9" fill="#f0d8a8" opacity="0.86"/>
<rect x="295.6" y="164.4" width="2.5" height="1.9" fill="#f0d8a8" opacity="0.99"/>
<rect x="275.2" y="168.4" width="2.5" height="1.9" fill="#d8b070" opacity="0.97"/>
<rect x="278.6" y="168.4" width="2.5" height="1.9" fill="#f0d8a8" opacity="0.75"/>
<rect x="282.0" y="168.4" width="2.5" height="1.9" fill="#e8c890" opacity="0.86"/>
<rect x="285.4" y="168.4" width="2.5" height="1.9" fill="#ffffff" opacity="0.87"/>
<rect x="292.2" y="168.4" width="2.5" height="1.9" fill="#fff2d0" opacity="0.92"/>
<rect x="275.2" y="172.4" width="2.5" height="1.9" fill="#e8c890" opacity="0.78"/>
<rect x="278.6" y="172.4" width="2.5" height="1.9" fill="#ffffff" opacity="0.85"/>
<rect x="282.0" y="172.4" width="2.5" height="1.9" fill="#ffffff" opacity="0.93"/>
<rect x="288.8" y="172.4" width="2.5" height="1.9" fill="#fff2d0" opacity="0.96"/>
<rect x="292.2" y="172.4" width="2.5" height="1.9" fill="#e8c890" opacity="0.97"/>
<rect x="278.6" y="176.4" width="2.5" height="1.9" fill="#f0d8a8" opacity="0.81"/>
<rect x="285.4" y="176.4" width="2.5" height="1.9" fill="#ffffff" opacity="0.93"/>
<rect x="292.2" y="176.4" width="2.5" height="1.9" fill="#f0d8a8" opacity="0.95"/>
<rect x="275.2" y="180.4" width="2.5" height="1.9" fill="#d8b070" opacity="0.92"/>
<rect x="278.6" y="180.4" width="2.5" height="1.9" fill="#ffffff" opacity="0.83"/>
<rect x="285.4" y="180.4" width="2.5" height="1.9" fill="#d8b070" opacity="0.91"/>
<rect x="288.8" y="180.4" width="2.5" height="1.9" fill="#ffffff" opacity="0.91"/>
<rect x="292.2" y="180.4" width="2.5" height="1.9" fill="#ffffff" opacity="0.92"/>
<rect x="295.6" y="180.4" width="2.5" height="1.9" fill="#ffffff" opacity="0.97"/>
<rect x="275.2" y="184.4" width="2.5" height="1.9" fill="#fff2d0" opacity="0.82"/>
<rect x="292.2" y="184.4" width="2.5" height="1.9" fill="#d8b070" opacity="0.81"/>
<rect x="275.2" y="188.4" width="2.5" height="1.9" fill="#d8b070" opacity="0.89"/>
<rect x="278.6" y="188.4" width="2.5" height="1.9" fill="#ffffff" opacity="0.84"/>
<rect x="282.0" y="188.4" width="2.5" height="1.9" fill="#f0d8a8" opacity="0.90"/>
<rect x="285.4" y="188.4" width="2.5" height="1.9" fill="#ffffff" opacity="0.82"/>
<rect x="295.6" y="188.4" width="2.5" height="1.9" fill="#ffffff" opacity="0.90"/>
<rect x="282.0" y="192.4" width="2.5" height="1.9" fill="#e8c890" opacity="0.99"/>
<rect x="288.8" y="192.4" width="2.5" height="1.9" fill="#d8b070" opacity="0.89"/>
<rect x="292.2" y="192.4" width="2.5" height="1.9" fill="#e8c890" opacity="0.85"/>
<rect x="295.6" y="192.4" width="2.5" height="1.9" fill="#f0d8a8" opacity="0.78"/>
<rect x="278.6" y="196.4" width="2.5" height="1.9" fill="#e8c890" opacity="0.99"/>
<rect x="282.0" y="196.4" width="2.5" height="1.9" fill="#e8c890" opacity="0.84"/>
<rect x="288.8" y="196.4" width="2.5" height="1.9" fill="#ffffff" opacity="0.92"/>
<rect x="292.2" y="196.4" width="2.5" height="1.9" fill="#ffffff" opacity="0.92"/>
<rect x="295.6" y="196.4" width="2.5" height="1.9" fill="#f0d8a8" opacity="0.87"/>
<rect x="275.2" y="200.4" width="2.5" height="1.9" fill="#ffffff" opacity="0.89"/>
<rect x="282.0" y="200.4" width="2.5" height="1.9" fill="#f0d8a8" opacity="0.77"/>
<rect x="285.4" y="200.4" width="2.5" height="1.9" fill="#fff2d0" opacity="0.92"/>
<rect x="292.2" y="200.4" width="2.5" height="1.9" fill="#d8b070" opacity="0.79"/>
<rect x="295.6" y="200.4" width="2.5" height="1.9" fill="#e8c890" opacity="0.76"/>
<rect x="275.2" y="204.4" width="2.5" height="1.9" fill="#ffffff" opacity="0.79"/>
<rect x="278.6" y="204.4" width="2.5" height="1.9" fill="#e8c890" opacity="0.81"/>
<rect x="282.0" y="204.4" width="2.5" height="1.9" fill="#f0d8a8" opacity="0.98"/>
<rect x="288.8" y="204.4" width="2.5" height="1.9" fill="#fff2d0" opacity="0.82"/>
<rect x="292.2" y="204.4" width="2.5" height="1.9" fill="#e8c890" opacity="0.76"/>
<rect x="278.6" y="208.4" width="2.5" height="1.9" fill="#d8b070" opacity="0.92"/>
<rect x="282.0" y="208.4" width="2.5" height="1.9" fill="#fff2d0" opacity="0.96"/>
<rect x="288.8" y="208.4" width="2.5" height="1.9" fill="#e8c890" opacity="0.82"/>
<rect x="292.2" y="208.4" width="2.5" height="1.9" fill="#d8b070" opacity="0.81"/>
<rect x="295.6" y="208.4" width="2.5" height="1.9" fill="#e8c890" opacity="0.83"/>
<rect x="288.8" y="212.4" width="2.5" height="1.9" fill="#fff2d0" opacity="0.98"/>
<rect x="295.6" y="212.4" width="2.5" height="1.9" fill="#d8b070" opacity="0.90"/>
<rect x="275.2" y="216.4" width="2.5" height="1.9" fill="#d8b070" opacity="0.97"/>
<rect x="278.6" y="216.4" width="2.5" height="1.9" fill="#d8b070" opacity="0.76"/>
<rect x="282.0" y="216.4" width="2.5" height="1.9" fill="#f0d8a8" opacity="0.96"/>
<rect x="275.2" y="220.4" width="2.5" height="1.9" fill="#d8b070" opacity="0.76"/>
<rect x="278.6" y="220.4" width="2.5" height="1.9" fill="#ffffff" opacity="0.90"/>
<rect x="285.4" y="220.4" width="2.5" height="1.9" fill="#f0d8a8" opacity="0.85"/>
<rect x="295.6" y="220.4" width="2.5" height="1.9" fill="#f0d8a8" opacity="0.92"/>
<rect x="278.6" y="224.4" width="2.5" height="1.9" fill="#ffffff" opacity="0.94"/>
<rect x="282.0" y="224.4" width="2.5" height="1.9" fill="#f0d8a8" opacity="0.84"/>
<rect x="285.4" y="224.4" width="2.5" height="1.9" fill="#fff2d0" opacity="0.98"/>
<rect x="288.8" y="224.4" width="2.5" height="1.9" fill="#f0d8a8" opacity="0.75"/>
<rect x="292.2" y="224.4" width="2.5" height="1.9" fill="#e8c890" opacity="0.79"/>
<rect x="295.6" y="224.4" width="2.5" height="1.9" fill="#fff2d0" opacity="0.96"/>
<rect x="275.2" y="228.4" width="2.5" height="1.9" fill="#e8c890" opacity="0.80"/>
<rect x="278.6" y="228.4" width="2.5" height="1.9" fill="#e8c890" opacity="0.95"/>
<rect x="282.0" y="228.4" width="2.5" height="1.9" fill="#e8c890" opacity="0.81"/>
<rect x="288.8" y="228.4" width="2.5" height="1.9" fill="#d8b070" opacity="0.87"/>
<rect x="292.2" y="228.4" width="2.5" height="1.9" fill="#e8c890" opacity="1.00"/>
<rect x="278.6" y="232.4" width="2.5" height="1.9" fill="#d8b070" opacity="0.83"/>
<rect x="282.0" y="232.4" width="2.5" height="1.9" fill="#f0d8a8" opacity="0.91"/>
<rect x="285.4" y="232.4" width="2.5" height="1.9" fill="#fff2d0" opacity="0.84"/>
<rect x="292.2" y="232.4" width="2.5" height="1.9" fill="#ffffff" opacity="0.92"/>
<rect x="275.2" y="236.4" width="2.5" height="1.9" fill="#ffffff" opacity="0.88"/>
<rect x="278.6" y="236.4" width="2.5" height="1.9" fill="#e8c890" opacity="1.00"/>
<rect x="288.8" y="236.4" width="2.5" height="1.9" fill="#fff2d0" opacity="0.88"/>
<rect x="292.2" y="236.4" width="2.5" height="1.9" fill="#ffffff" opacity="0.88"/>
<rect x="295.6" y="236.4" width="2.5" height="1.9" fill="#d8b070" opacity="0.88"/>
<rect x="278.6" y="240.4" width="2.5" height="1.9" fill="#f0d8a8" opacity="0.75"/>
<rect x="282.0" y="240.4" width="2.5" height="1.9" fill="#ffffff" opacity="0.93"/>
<rect x="288.8" y="240.4" width="2.5" height="1.9" fill="#ffffff" opacity="0.90"/>
<rect x="292.2" y="240.4" width="2.5" height="1.9" fill="#f0d8a8" opacity="0.90"/>
<rect x="295.6" y="240.4" width="2.5" height="1.9" fill="#ffffff" opacity="0.94"/>
<rect x="275.2" y="244.4" width="2.5" height="1.9" fill="#ffffff" opacity="0.80"/>
<rect x="278.6" y="244.4" width="2.5" height="1.9" fill="#e8c890" opacity="0.95"/>
<rect x="292.2" y="244.4" width="2.5" height="1.9" fill="#fff2d0" opacity="0.90"/>
<rect x="295.6" y="244.4" width="2.5" height="1.9" fill="#d8b070" opacity="0.83"/>
<rect x="278.6" y="248.4" width="2.5" height="1.9" fill="#f0d8a8" opacity="0.99"/>
<rect x="282.0" y="248.4" width="2.5" height="1.9" fill="#fff2d0" opacity="0.95"/>
<rect x="292.2" y="248.4" width="2.5" height="1.9" fill="#f0d8a8" opacity="0.93"/>
<rect x="301.4" y="175.0" width="2.5" height="1.9" fill="#f0d8a8" opacity="0.90"/>
<rect x="308.2" y="175.0" width="2.5" height="1.9" fill="#e8c890" opacity="0.83"/>
<rect x="301.4" y="179.0" width="2.5" height="1.9" fill="#fff2d0" opacity="0.85"/>
<rect x="308.2" y="179.0" width="2.5" height="1.9" fill="#e8c890" opacity="0.82"/>
<rect x="301.4" y="183.0" width="2.5" height="1.9" fill="#fff2d0" opacity="0.92"/>
<rect x="304.8" y="183.0" width="2.5" height="1.9" fill="#f0d8a8" opacity="0.99"/>
<rect x="315.0" y="183.0" width="2.5" height="1.9" fill="#d8b070" opacity="0.87"/>
<rect x="301.4" y="187.0" width="2.5" height="1.9" fill="#ffffff" opacity="0.90"/>
<rect x="304.8" y="187.0" width="2.5" height="1.9" fill="#d8b070" opacity="0.76"/>
<rect x="308.2" y="187.0" width="2.5" height="1.9" fill="#e8c890" opacity="0.84"/>
<rect x="311.6" y="187.0" width="2.5" height="1.9" fill="#fff2d0" opacity="0.99"/>
<rect x="304.8" y="191.0" width="2.5" height="1.9" fill="#f0d8a8" opacity="0.87"/>
<rect x="315.0" y="191.0" width="2.5" height="1.9" fill="#fff2d0" opacity="0.87"/>
<rect x="301.4" y="195.0" width="2.5" height="1.9" fill="#e8c890" opacity="0.97"/>
<rect x="304.8" y="195.0" width="2.5" height="1.9" fill="#fff2d0" opacity="0.85"/>
<rect x="308.2" y="195.0" width="2.5" height="1.9" fill="#ffffff" opacity="0.90"/>
<rect x="304.8" y="199.0" width="2.5" height="1.9" fill="#f0d8a8" opacity="0.79"/>
<rect x="308.2" y="199.0" width="2.5" height="1.9" fill="#f0d8a8" opacity="0.97"/>
<rect x="311.6" y="199.0" width="2.5" height="1.9" fill="#ffffff" opacity="0.79"/>
<rect x="301.4" y="203.0" width="2.5" height="1.9" fill="#d8b070" opacity="0.90"/>
<rect x="308.2" y="203.0" width="2.5" height="1.9" fill="#f0d8a8" opacity="0.81"/>
<rect x="311.6" y="203.0" width="2.5" height="1.9" fill="#ffffff" opacity="0.78"/>
<rect x="315.0" y="203.0" width="2.5" height="1.9" fill="#e8c890" opacity="0.79"/>
<rect x="301.4" y="207.0" width="2.5" height="1.9" fill="#e8c890" opacity="0.95"/>
<rect x="304.8" y="207.0" width="2.5" height="1.9" fill="#ffffff" opacity="0.89"/>
<rect x="311.6" y="207.0" width="2.5" height="1.9" fill="#ffffff" opacity="0.83"/>
<rect x="301.4" y="211.0" width="2.5" height="1.9" fill="#d8b070" opacity="0.98"/>
<rect x="304.8" y="211.0" width="2.5" height="1.9" fill="#e8c890" opacity="0.96"/>
<rect x="308.2" y="211.0" width="2.5" height="1.9" fill="#d8b070" opacity="0.98"/>
<rect x="311.6" y="211.0" width="2.5" height="1.9" fill="#ffffff" opacity="0.95"/>
<rect x="304.8" y="215.0" width="2.5" height="1.9" fill="#f0d8a8" opacity="0.82"/>
<rect x="308.2" y="215.0" width="2.5" height="1.9" fill="#fff2d0" opacity="0.94"/>
<rect x="304.8" y="219.0" width="2.5" height="1.9" fill="#ffffff" opacity="0.97"/>
<rect x="308.2" y="219.0" width="2.5" height="1.9" fill="#d8b070" opacity="0.78"/>
<rect x="304.8" y="223.0" width="2.5" height="1.9" fill="#e8c890" opacity="0.92"/>
<rect x="301.4" y="227.0" width="2.5" height="1.9" fill="#fff2d0" opacity="0.96"/>
<rect x="311.6" y="227.0" width="2.5" height="1.9" fill="#ffffff" opacity="0.87"/>
<rect x="315.0" y="227.0" width="2.5" height="1.9" fill="#f0d8a8" opacity="0.86"/>
<rect x="304.8" y="231.0" width="2.5" height="1.9" fill="#e8c890" opacity="0.85"/>
<rect x="308.2" y="231.0" width="2.5" height="1.9" fill="#f0d8a8" opacity="0.82"/>
<rect x="311.6" y="231.0" width="2.5" height="1.9" fill="#e8c890" opacity="0.80"/>
<rect x="301.4" y="235.0" width="2.5" height="1.9" fill="#e8c890" opacity="0.90"/>
<rect x="308.2" y="235.0" width="2.5" height="1.9" fill="#f0d8a8" opacity="0.91"/>
<rect x="304.8" y="239.0" width="2.5" height="1.9" fill="#ffffff" opacity="0.93"/>
<rect x="308.2" y="239.0" width="2.5" height="1.9" fill="#ffffff" opacity="0.79"/>
<rect x="304.8" y="243.0" width="2.5" height="1.9" fill="#e8c890" opacity="0.85"/>
<rect x="308.2" y="243.0" width="2.5" height="1.9" fill="#ffffff" opacity="0.88"/>
<rect x="308.2" y="247.0" width="2.5" height="1.9" fill="#e8c890" opacity="0.79"/>
<rect x="311.6" y="247.0" width="2.5" height="1.9" fill="#ffffff" opacity="0.96"/>
<rect x="320.3" y="172.8" width="2.5" height="1.9" fill="#f0d8a8" opacity="0.98"/>
<rect x="323.7" y="172.8" width="2.5" height="1.9" fill="#d8b070" opacity="0.92"/>
<rect x="327.1" y="172.8" width="2.5" height="1.9" fill="#d8b070" opacity="0.99"/>
<rect x="330.5" y="172.8" width="2.5" height="1.9" fill="#f0d8a8" opacity="0.87"/>
<rect x="333.9" y="172.8" width="2.5" height="1.9" fill="#e8c890" opacity="0.79"/>
<rect x="320.3" y="176.8" width="2.5" height="1.9" fill="#e8c890" opacity="0.84"/>
<rect x="323.7" y="176.8" width="2.5" height="1.9" fill="#d8b070" opacity="0.98"/>
<rect x="327.1" y="176.8" width="2.5" height="1.9" fill="#d8b070" opacity="0.97"/>
<rect x="330.5" y="176.8" width="2.5" height="1.9" fill="#e8c890" opacity="0.81"/>
<rect x="333.9" y="176.8" width="2.5" height="1.9" fill="#e8c890" opacity="0.99"/>
<rect x="320.3" y="180.8" width="2.5" height="1.9" fill="#d8b070" opacity="0.91"/>
<rect x="323.7" y="180.8" width="2.5" height="1.9" fill="#f0d8a8" opacity="0.86"/>
<rect x="330.5" y="180.8" width="2.5" height="1.9" fill="#e8c890" opacity="0.79"/>
<rect x="333.9" y="180.8" width="2.5" height="1.9" fill="#e8c890" opacity="0.78"/>
<rect x="333.9" y="184.8" width="2.5" height="1.9" fill="#ffffff" opacity="0.90"/>
<rect x="320.3" y="188.8" width="2.5" height="1.9" fill="#d8b070" opacity="0.85"/>
<rect x="327.1" y="188.8" width="2.5" height="1.9" fill="#ffffff" opacity="0.92"/>
<rect x="333.9" y="188.8" width="2.5" height="1.9" fill="#f0d8a8" opacity="0.76"/>
<rect x="320.3" y="192.8" width="2.5" height="1.9" fill="#f0d8a8" opacity="0.99"/>
<rect x="327.1" y="192.8" width="2.5" height="1.9" fill="#e8c890" opacity="0.86"/>
<rect x="320.3" y="196.8" width="2.5" height="1.9" fill="#d8b070" opacity="0.83"/>
<rect x="323.7" y="196.8" width="2.5" height="1.9" fill="#fff2d0" opacity="0.93"/>
<rect x="327.1" y="196.8" width="2.5" height="1.9" fill="#fff2d0" opacity="0.87"/>
<rect x="330.5" y="196.8" width="2.5" height="1.9" fill="#fff2d0" opacity="0.78"/>
<rect x="323.7" y="200.8" width="2.5" height="1.9" fill="#fff2d0" opacity="0.80"/>
<rect x="327.1" y="200.8" width="2.5" height="1.9" fill="#e8c890" opacity="1.00"/>
<rect x="330.5" y="200.8" width="2.5" height="1.9" fill="#f0d8a8" opacity="0.83"/>
<rect x="333.9" y="200.8" width="2.5" height="1.9" fill="#f0d8a8" opacity="0.78"/>
<rect x="320.3" y="204.8" width="2.5" height="1.9" fill="#d8b070" opacity="0.87"/>
<rect x="330.5" y="204.8" width="2.5" height="1.9" fill="#f0d8a8" opacity="0.98"/>
<rect x="333.9" y="204.8" width="2.5" height="1.9" fill="#ffffff" opacity="0.83"/>
<rect x="323.7" y="208.8" width="2.5" height="1.9" fill="#f0d8a8" opacity="0.85"/>
<rect x="327.1" y="208.8" width="2.5" height="1.9" fill="#ffffff" opacity="0.90"/>
<rect x="330.5" y="208.8" width="2.5" height="1.9" fill="#ffffff" opacity="0.98"/>
<rect x="320.3" y="212.8" width="2.5" height="1.9" fill="#e8c890" opacity="0.81"/>
<rect x="327.1" y="212.8" width="2.5" height="1.9" fill="#e8c890" opacity="0.97"/>
<rect x="330.5" y="212.8" width="2.5" height="1.9" fill="#e8c890" opacity="0.88"/>
<rect x="320.3" y="216.8" width="2.5" height="1.9" fill="#d8b070" opacity="0.94"/>
<rect x="323.7" y="216.8" width="2.5" height="1.9" fill="#ffffff" opacity="0.97"/>
<rect x="330.5" y="216.8" width="2.5" height="1.9" fill="#f0d8a8" opacity="0.78"/>
<rect x="333.9" y="216.8" width="2.5" height="1.9" fill="#fff2d0" opacity="0.81"/>
<rect x="320.3" y="220.8" width="2.5" height="1.9" fill="#ffffff" opacity="0.84"/>
<rect x="323.7" y="220.8" width="2.5" height="1.9" fill="#fff2d0" opacity="0.81"/>
<rect x="330.5" y="220.8" width="2.5" height="1.9" fill="#f0d8a8" opacity="0.93"/>
<rect x="333.9" y="220.8" width="2.5" height="1.9" fill="#e8c890" opacity="0.99"/>
<rect x="330.5" y="224.8" width="2.5" height="1.9" fill="#fff2d0" opacity="0.91"/>
<rect x="333.9" y="224.8" width="2.5" height="1.9" fill="#ffffff" opacity="0.95"/>
<rect x="320.3" y="228.8" width="2.5" height="1.9" fill="#d8b070" opacity="0.84"/>
<rect x="323.7" y="228.8" width="2.5" height="1.9" fill="#d8b070" opacity="0.95"/>
<rect x="333.9" y="228.8" width="2.5" height="1.9" fill="#f0d8a8" opacity="0.81"/>
<rect x="320.3" y="232.8" width="2.5" height="1.9" fill="#f0d8a8" opacity="0.99"/>
<rect x="323.7" y="232.8" width="2.5" height="1.9" fill="#d8b070" opacity="0.90"/>
<rect x="320.3" y="236.8" width="2.5" height="1.9" fill="#f0d8a8" opacity="0.88"/>
<rect x="327.1" y="236.8" width="2.5" height="1.9" fill="#f0d8a8" opacity="0.97"/>
<rect x="330.5" y="236.8" width="2.5" height="1.9" fill="#ffffff" opacity="0.99"/>
<rect x="327.1" y="240.8" width="2.5" height="1.9" fill="#ffffff" opacity="0.76"/>
<rect x="320.3" y="244.8" width="2.5" height="1.9" fill="#fff2d0" opacity="0.75"/>
<rect x="323.7" y="244.8" width="2.5" height="1.9" fill="#f0d8a8" opacity="0.95"/>
<rect x="330.5" y="244.8" width="2.5" height="1.9" fill="#ffffff" opacity="0.87"/>
<rect x="333.9" y="244.8" width="2.5" height="1.9" fill="#d8b070" opacity="0.76"/>
<rect x="320.3" y="248.8" width="2.5" height="1.9" fill="#d8b070" opacity="0.81"/>
<rect x="323.7" y="248.8" width="2.5" height="1.9" fill="#e8c890" opacity="0.98"/>
<rect x="330.5" y="248.8" width="2.5" height="1.9" fill="#fff2d0" opacity="0.84"/>
<rect x="339.8" y="180.6" width="2.5" height="1.9" fill="#fff2d0" opacity="0.82"/>
<rect x="343.2" y="180.6" width="2.5" height="1.9" fill="#d8b070" opacity="0.97"/>
<rect x="350.0" y="180.6" width="2.5" height="1.9" fill="#f0d8a8" opacity="0.87"/>
<rect x="353.4" y="180.6" width="2.5" height="1.9" fill="#f0d8a8" opacity="0.79"/>
<rect x="339.8" y="184.6" width="2.5" height="1.9" fill="#ffffff" opacity="0.95"/>
<rect x="343.2" y="184.6" width="2.5" height="1.9" fill="#e8c890" opacity="0.89"/>
<rect x="346.6" y="184.6" width="2.5" height="1.9" fill="#ffffff" opacity="0.77"/>
<rect x="350.0" y="184.6" width="2.5" height="1.9" fill="#f0d8a8" opacity="0.97"/>
<rect x="339.8" y="188.6" width="2.5" height="1.9" fill="#f0d8a8" opacity="0.86"/>
<rect x="343.2" y="188.6" width="2.5" height="1.9" fill="#e8c890" opacity="0.89"/>
<rect x="346.6" y="188.6" width="2.5" height="1.9" fill="#e8c890" opacity="0.83"/>
<rect x="350.0" y="188.6" width="2.5" height="1.9" fill="#ffffff" opacity="0.75"/>
<rect x="353.4" y="188.6" width="2.5" height="1.9" fill="#f0d8a8" opacity="0.98"/>
<rect x="339.8" y="192.6" width="2.5" height="1.9" fill="#d8b070" opacity="0.82"/>
<rect x="343.2" y="192.6" width="2.5" height="1.9" fill="#e8c890" opacity="0.94"/>
<rect x="346.6" y="192.6" width="2.5" height="1.9" fill="#d8b070" opacity="0.88"/>
<rect x="350.0" y="192.6" width="2.5" height="1.9" fill="#ffffff" opacity="0.76"/>
<rect x="353.4" y="192.6" width="2.5" height="1.9" fill="#ffffff" opacity="0.78"/>
<rect x="339.8" y="196.6" width="2.5" height="1.9" fill="#fff2d0" opacity="0.89"/>
<rect x="343.2" y="196.6" width="2.5" height="1.9" fill="#ffffff" opacity="0.75"/>
<rect x="350.0" y="196.6" width="2.5" height="1.9" fill="#ffffff" opacity="0.91"/>
<rect x="353.4" y="196.6" width="2.5" height="1.9" fill="#ffffff" opacity="0.79"/>
<rect x="339.8" y="200.6" width="2.5" height="1.9" fill="#ffffff" opacity="0.98"/>
<rect x="343.2" y="200.6" width="2.5" height="1.9" fill="#f0d8a8" opacity="0.84"/>
<rect x="346.6" y="200.6" width="2.5" height="1.9" fill="#f0d8a8" opacity="0.98"/>
<rect x="350.0" y="200.6" width="2.5" height="1.9" fill="#fff2d0" opacity="0.98"/>
<rect x="353.4" y="200.6" width="2.5" height="1.9" fill="#d8b070" opacity="0.91"/>
<rect x="339.8" y="204.6" width="2.5" height="1.9" fill="#d8b070" opacity="0.86"/>
<rect x="343.2" y="204.6" width="2.5" height="1.9" fill="#ffffff" opacity="0.94"/>
<rect x="346.6" y="204.6" width="2.5" height="1.9" fill="#e8c890" opacity="0.92"/>
<rect x="350.0" y="204.6" width="2.5" height="1.9" fill="#d8b070" opacity="0.99"/>
<rect x="353.4" y="204.6" width="2.5" height="1.9" fill="#fff2d0" opacity="0.76"/>
<rect x="339.8" y="208.6" width="2.5" height="1.9" fill="#d8b070" opacity="0.98"/>
<rect x="343.2" y="208.6" width="2.5" height="1.9" fill="#ffffff" opacity="0.92"/>
<rect x="346.6" y="208.6" width="2.5" height="1.9" fill="#d8b070" opacity="0.76"/>
<rect x="350.0" y="208.6" width="2.5" height="1.9" fill="#d8b070" opacity="0.78"/>
<rect x="353.4" y="208.6" width="2.5" height="1.9" fill="#f0d8a8" opacity="0.90"/>
<rect x="339.8" y="212.6" width="2.5" height="1.9" fill="#ffffff" opacity="0.83"/>
<rect x="343.2" y="212.6" width="2.5" height="1.9" fill="#d8b070" opacity="0.75"/>
<rect x="346.6" y="212.6" width="2.5" height="1.9" fill="#fff2d0" opacity="0.80"/>
<rect x="350.0" y="212.6" width="2.5" height="1.9" fill="#f0d8a8" opacity="0.80"/>
<rect x="353.4" y="212.6" width="2.5" height="1.9" fill="#ffffff" opacity="0.94"/>
<rect x="339.8" y="216.6" width="2.5" height="1.9" fill="#d8b070" opacity="0.76"/>
<rect x="343.2" y="216.6" width="2.5" height="1.9" fill="#f0d8a8" opacity="0.87"/>
<rect x="346.6" y="216.6" width="2.5" height="1.9" fill="#d8b070" opacity="0.98"/>
<rect x="350.0" y="216.6" width="2.5" height="1.9" fill="#d8b070" opacity="0.90"/>
<rect x="343.2" y="220.6" width="2.5" height="1.9" fill="#d8b070" opacity="0.80"/>
<rect x="346.6" y="220.6" width="2.5" height="1.9" fill="#f0d8a8" opacity="0.86"/>
<rect x="353.4" y="220.6" width="2.5" height="1.9" fill="#e8c890" opacity="0.92"/>
<rect x="339.8" y="224.6" width="2.5" height="1.9" fill="#ffffff" opacity="0.97"/>
<rect x="343.2" y="224.6" width="2.5" height="1.9" fill="#f0d8a8" opacity="0.82"/>
<rect x="350.0" y="224.6" width="2.5" height="1.9" fill="#ffffff" opacity="0.99"/>
<rect x="353.4" y="224.6" width="2.5" height="1.9" fill="#ffffff" opacity="0.77"/>
<rect x="339.8" y="228.6" width="2.5" height="1.9" fill="#e8c890" opacity="0.84"/>
<rect x="343.2" y="228.6" width="2.5" height="1.9" fill="#f0d8a8" opacity="0.94"/>
<rect x="346.6" y="228.6" width="2.5" height="1.9" fill="#d8b070" opacity="0.89"/>
<rect x="350.0" y="228.6" width="2.5" height="1.9" fill="#e8c890" opacity="0.88"/>
<rect x="353.4" y="228.6" width="2.5" height="1.9" fill="#ffffff" opacity="0.92"/>
<rect x="339.8" y="232.6" width="2.5" height="1.9" fill="#ffffff" opacity="0.95"/>
<rect x="343.2" y="232.6" width="2.5" height="1.9" fill="#e8c890" opacity="0.76"/>
<rect x="346.6" y="232.6" width="2.5" height="1.9" fill="#d8b070" opacity="0.79"/>
<rect x="350.0" y="232.6" width="2.5" height="1.9" fill="#ffffff" opacity="0.90"/>
<rect x="353.4" y="232.6" width="2.5" height="1.9" fill="#f0d8a8" opacity="0.84"/>
<rect x="339.8" y="236.6" width="2.5" height="1.9" fill="#e8c890" opacity="0.79"/>
<rect x="343.2" y="236.6" width="2.5" height="1.9" fill="#ffffff" opacity="0.95"/>
<rect x="346.6" y="236.6" width="2.5" height="1.9" fill="#ffffff" opacity="0.77"/>
<rect x="350.0" y="236.6" width="2.5" height="1.9" fill="#d8b070" opacity="0.88"/>
<rect x="353.4" y="236.6" width="2.5" height="1.9" fill="#fff2d0" opacity="0.92"/>
<rect x="339.8" y="240.6" width="2.5" height="1.9" fill="#e8c890" opacity="0.97"/>
<rect x="343.2" y="240.6" width="2.5" height="1.9" fill="#e8c890" opacity="0.95"/>
<rect x="350.0" y="240.6" width="2.5" height="1.9" fill="#e8c890" opacity="0.88"/>
<rect x="353.4" y="240.6" width="2.5" height="1.9" fill="#f0d8a8" opacity="0.90"/>
<rect x="339.8" y="244.6" width="2.5" height="1.9" fill="#f0d8a8" opacity="0.99"/>
<rect x="343.2" y="244.6" width="2.5" height="1.9" fill="#e8c890" opacity="0.82"/>
<rect x="350.0" y="244.6" width="2.5" height="1.9" fill="#f0d8a8" opacity="0.93"/>
<rect x="353.4" y="244.6" width="2.5" height="1.9" fill="#ffffff" opacity="0.75"/>
<rect x="339.8" y="248.6" width="2.5" height="1.9" fill="#ffffff" opacity="0.97"/>
<rect x="343.2" y="248.6" width="2.5" height="1.9" fill="#d8b070" opacity="0.99"/>
<rect x="346.6" y="248.6" width="2.5" height="1.9" fill="#ffffff" opacity="0.93"/>
<rect x="350.0" y="248.6" width="2.5" height="1.9" fill="#e8c890" opacity="0.77"/>
<rect x="353.4" y="248.6" width="2.5" height="1.9" fill="#fff2d0" opacity="0.83"/>
<rect x="358.7" y="181.0" width="2.5" height="1.9" fill="#d8b070" opacity="0.89"/>
<rect x="362.1" y="181.0" width="2.5" height="1.9" fill="#fff2d0" opacity="0.83"/>
<rect x="365.5" y="181.0" width="2.5" height="1.9" fill="#ffffff" opacity="0.88"/>
<rect x="368.9" y="181.0" width="2.5" height="1.9" fill="#d8b070" opacity="0.99"/>
<rect x="362.1" y="185.0" width="2.5" height="1.9" fill="#fff2d0" opacity="0.80"/>
<rect x="368.9" y="185.0" width="2.5" height="1.9" fill="#d8b070" opacity="0.91"/>
<rect x="372.3" y="185.0" width="2.5" height="1.9" fill="#f0d8a8" opacity="0.78"/>
<rect x="368.9" y="189.0" width="2.5" height="1.9" fill="#f0d8a8" opacity="0.81"/>
<rect x="358.7" y="193.0" width="2.5" height="1.9" fill="#f0d8a8" opacity="0.86"/>
<rect x="362.1" y="193.0" width="2.5" height="1.9" fill="#e8c890" opacity="0.87"/>
<rect x="365.5" y="193.0" width="2.5" height="1.9" fill="#e8c890" opacity="0.94"/>
<rect x="372.3" y="193.0" width="2.5" height="1.9" fill="#d8b070" opacity="0.94"/>
<rect x="375.7" y="193.0" width="2.5" height="1.9" fill="#d8b070" opacity="0.99"/>
<rect x="358.7" y="197.0" width="2.5" height="1.9" fill="#fff2d0" opacity="0.94"/>
<rect x="362.1" y="197.0" width="2.5" height="1.9" fill="#f0d8a8" opacity="0.98"/>
<rect x="375.7" y="197.0" width="2.5" height="1.9" fill="#f0d8a8" opacity="0.97"/>
<rect x="362.1" y="201.0" width="2.5" height="1.9" fill="#f0d8a8" opacity="0.76"/>
<rect x="365.5" y="201.0" width="2.5" height="1.9" fill="#ffffff" opacity="0.76"/>
<rect x="368.9" y="201.0" width="2.5" height="1.9" fill="#ffffff" opacity="0.96"/>
<rect x="372.3" y="201.0" width="2.5" height="1.9" fill="#d8b070" opacity="0.92"/>
<rect x="375.7" y="201.0" width="2.5" height="1.9" fill="#f0d8a8" opacity="0.94"/>
<rect x="358.7" y="205.0" width="2.5" height="1.9" fill="#ffffff" opacity="0.87"/>
<rect x="362.1" y="205.0" width="2.5" height="1.9" fill="#ffffff" opacity="0.86"/>
<rect x="368.9" y="205.0" width="2.5" height="1.9" fill="#fff2d0" opacity="0.75"/>
<rect x="372.3" y="205.0" width="2.5" height="1.9" fill="#fff2d0" opacity="0.96"/>
<rect x="375.7" y="205.0" width="2.5" height="1.9" fill="#ffffff" opacity="0.96"/>
<rect x="358.7" y="209.0" width="2.5" height="1.9" fill="#fff2d0" opacity="0.92"/>
<rect x="362.1" y="209.0" width="2.5" height="1.9" fill="#e8c890" opacity="0.79"/>
<rect x="365.5" y="209.0" width="2.5" height="1.9" fill="#fff2d0" opacity="0.84"/>
<rect x="368.9" y="209.0" width="2.5" height="1.9" fill="#f0d8a8" opacity="0.84"/>
<rect x="358.7" y="213.0" width="2.5" height="1.9" fill="#f0d8a8" opacity="0.92"/>
<rect x="362.1" y="213.0" width="2.5" height="1.9" fill="#f0d8a8" opacity="0.99"/>
<rect x="372.3" y="213.0" width="2.5" height="1.9" fill="#f0d8a8" opacity="0.90"/>
<rect x="375.7" y="213.0" width="2.5" height="1.9" fill="#fff2d0" opacity="0.97"/>
<rect x="358.7" y="217.0" width="2.5" height="1.9" fill="#d8b070" opacity="0.77"/>
<rect x="362.1" y="217.0" width="2.5" height="1.9" fill="#d8b070" opacity="0.91"/>
<rect x="368.9" y="217.0" width="2.5" height="1.9" fill="#f0d8a8" opacity="0.94"/>
<rect x="375.7" y="217.0" width="2.5" height="1.9" fill="#ffffff" opacity="0.93"/>
<rect x="358.7" y="221.0" width="2.5" height="1.9" fill="#d8b070" opacity="0.77"/>
<rect x="362.1" y="221.0" width="2.5" height="1.9" fill="#d8b070" opacity="0.82"/>
<rect x="365.5" y="221.0" width="2.5" height="1.9" fill="#f0d8a8" opacity="0.89"/>
<rect x="368.9" y="221.0" width="2.5" height="1.9" fill="#f0d8a8" opacity="0.77"/>
<rect x="372.3" y="221.0" width="2.5" height="1.9" fill="#d8b070" opacity="0.95"/>
<rect x="375.7" y="221.0" width="2.5" height="1.9" fill="#fff2d0" opacity="0.89"/>
<rect x="358.7" y="225.0" width="2.5" height="1.9" fill="#d8b070" opacity="0.75"/>
<rect x="362.1" y="225.0" width="2.5" height="1.9" fill="#d8b070" opacity="0.83"/>
<rect x="368.9" y="225.0" width="2.5" height="1.9" fill="#e8c890" opacity="0.84"/>
<rect x="372.3" y="225.0" width="2.5" height="1.9" fill="#d8b070" opacity="0.99"/>
<rect x="365.5" y="229.0" width="2.5" height="1.9" fill="#d8b070" opacity="0.94"/>
<rect x="368.9" y="229.0" width="2.5" height="1.9" fill="#fff2d0" opacity="0.81"/>
<rect x="372.3" y="229.0" width="2.5" height="1.9" fill="#e8c890" opacity="0.94"/>
<rect x="375.7" y="229.0" width="2.5" height="1.9" fill="#e8c890" opacity="0.78"/>
<rect x="358.7" y="233.0" width="2.5" height="1.9" fill="#ffffff" opacity="0.78"/>
<rect x="365.5" y="233.0" width="2.5" height="1.9" fill="#d8b070" opacity="0.76"/>
<rect x="368.9" y="233.0" width="2.5" height="1.9" fill="#f0d8a8" opacity="0.93"/>
<rect x="372.3" y="233.0" width="2.5" height="1.9" fill="#f0d8a8" opacity="0.80"/>
<rect x="375.7" y="233.0" width="2.5" height="1.9" fill="#e8c890" opacity="0.86"/>
<rect x="365.5" y="237.0" width="2.5" height="1.9" fill="#fff2d0" opacity="0.97"/>
<rect x="372.3" y="237.0" width="2.5" height="1.9" fill="#d8b070" opacity="0.77"/>
<rect x="375.7" y="237.0" width="2.5" height="1.9" fill="#f0d8a8" opacity="0.87"/>
<rect x="358.7" y="241.0" width="2.5" height="1.9" fill="#fff2d0" opacity="0.81"/>
<rect x="362.1" y="241.0" width="2.5" height="1.9" fill="#e8c890" opacity="0.75"/>
<rect x="368.9" y="241.0" width="2.5" height="1.9" fill="#ffffff" opacity="0.96"/>
<rect x="372.3" y="241.0" width="2.5" height="1.9" fill="#ffffff" opacity="0.92"/>
<rect x="375.7" y="241.0" width="2.5" height="1.9" fill="#e8c890" opacity="0.75"/>
<rect x="358.7" y="245.0" width="2.5" height="1.9" fill="#f0d8a8" opacity="0.83"/>
<rect x="362.1" y="245.0" width="2.5" height="1.9" fill="#ffffff" opacity="0.83"/>
<rect x="368.9" y="245.0" width="2.5" height="1.9" fill="#ffffff" opacity="0.88"/>
<rect x="358.7" y="249.0" width="2.5" height="1.9" fill="#d8b070" opacity="0.84"/>
<rect x="365.5" y="249.0" width="2.5" height="1.9" fill="#fff2d0" opacity="0.98"/>
<rect x="368.9" y="249.0" width="2.5" height="1.9" fill="#f0d8a8" opacity="0.94"/>
<rect x="375.7" y="249.0" width="2.5" height="1.9" fill="#f0d8a8" opacity="0.87"/>
<rect x="387.9" y="187.0" width="2.5" height="1.9" fill="#fff2d0" opacity="0.77"/>
<rect x="391.3" y="187.0" width="2.5" height="1.9" fill="#f0d8a8" opacity="0.79"/>
<rect x="384.5" y="191.0" width="2.5" height="1.9" fill="#ffffff" opacity="0.84"/>
<rect x="391.3" y="191.0" width="2.5" height="1.9" fill="#fff2d0" opacity="0.88"/>
<rect x="384.5" y="195.0" width="2.5" height="1.9" fill="#f0d8a8" opacity="0.84"/>
<rect x="391.3" y="195.0" width="2.5" height="1.9" fill="#fff2d0" opacity="0.93"/>
<rect x="384.5" y="199.0" width="2.5" height="1.9" fill="#fff2d0" opacity="0.81"/>
<rect x="387.9" y="199.0" width="2.5" height="1.9" fill="#ffffff" opacity="0.98"/>
<rect x="384.5" y="203.0" width="2.5" height="1.9" fill="#f0d8a8" opacity="0.95"/>
<rect x="391.3" y="203.0" width="2.5" height="1.9" fill="#fff2d0" opacity="0.82"/>
<rect x="384.5" y="207.0" width="2.5" height="1.9" fill="#d8b070" opacity="0.97"/>
<rect x="391.3" y="207.0" width="2.5" height="1.9" fill="#ffffff" opacity="0.81"/>
<rect x="387.9" y="211.0" width="2.5" height="1.9" fill="#d8b070" opacity="0.88"/>
<rect x="391.3" y="211.0" width="2.5" height="1.9" fill="#ffffff" opacity="0.77"/>
<rect x="387.9" y="215.0" width="2.5" height="1.9" fill="#f0d8a8" opacity="0.81"/>
<rect x="391.3" y="215.0" width="2.5" height="1.9" fill="#d8b070" opacity="0.75"/>
<rect x="384.5" y="219.0" width="2.5" height="1.9" fill="#e8c890" opacity="0.81"/>
<rect x="387.9" y="219.0" width="2.5" height="1.9" fill="#fff2d0" opacity="0.92"/>
<rect x="391.3" y="219.0" width="2.5" height="1.9" fill="#fff2d0" opacity="0.78"/>
<rect x="387.9" y="223.0" width="2.5" height="1.9" fill="#f0d8a8" opacity="0.88"/>
<rect x="391.3" y="223.0" width="2.5" height="1.9" fill="#f0d8a8" opacity="0.88"/>
<rect x="384.5" y="227.0" width="2.5" height="1.9" fill="#ffffff" opacity="0.97"/>
<rect x="387.9" y="227.0" width="2.5" height="1.9" fill="#fff2d0" opacity="0.79"/>
<rect x="387.9" y="231.0" width="2.5" height="1.9" fill="#f0d8a8" opacity="0.81"/>
<rect x="391.3" y="231.0" width="2.5" height="1.9" fill="#d8b070" opacity="0.95"/>
<rect x="387.9" y="235.0" width="2.5" height="1.9" fill="#f0d8a8" opacity="0.99"/>
<rect x="391.3" y="235.0" width="2.5" height="1.9" fill="#d8b070" opacity="0.78"/>
<rect x="384.5" y="239.0" width="2.5" height="1.9" fill="#e8c890" opacity="0.78"/>
<rect x="387.9" y="239.0" width="2.5" height="1.9" fill="#fff2d0" opacity="0.85"/>
<rect x="391.3" y="239.0" width="2.5" height="1.9" fill="#fff2d0" opacity="0.92"/>
<rect x="387.9" y="243.0" width="2.5" height="1.9" fill="#fff2d0" opacity="0.96"/>
<rect x="387.9" y="247.0" width="2.5" height="1.9" fill="#d8b070" opacity="0.80"/>
<rect x="391.3" y="247.0" width="2.5" height="1.9" fill="#ffffff" opacity="0.87"/>
<rect x="79.2" y="251.5" width="2.4" height="1.8" fill="#ffffff" opacity="0.94"/>
<rect x="86.4" y="251.5" width="2.4" height="1.8" fill="#fff6dc" opacity="0.97"/>
<rect x="93.6" y="251.5" width="2.4" height="1.8" fill="#f8e0b0" opacity="1.00"/>
<rect x="129.6" y="251.5" width="2.4" height="1.8" fill="#f8e0b0" opacity="0.96"/>
<rect x="140.4" y="251.5" width="2.4" height="1.8" fill="#f8e0b0" opacity="0.89"/>
<rect x="147.6" y="251.5" width="2.4" height="1.8" fill="#ffffff" opacity="0.93"/>
<rect x="151.2" y="251.5" width="2.4" height="1.8" fill="#f8e0b0" opacity="0.91"/>
<rect x="154.8" y="251.5" width="2.4" height="1.8" fill="#f8e0b0" opacity="0.96"/>
<rect x="169.2" y="251.5" width="2.4" height="1.8" fill="#e8c080" opacity="0.98"/>
<rect x="187.2" y="251.5" width="2.4" height="1.8" fill="#e8c080" opacity="0.86"/>
<rect x="201.6" y="251.5" width="2.4" height="1.8" fill="#f8e0b0" opacity="0.80"/>
<rect x="205.2" y="251.5" width="2.4" height="1.8" fill="#fff6dc" opacity="0.87"/>
<rect x="208.8" y="251.5" width="2.4" height="1.8" fill="#ffffff" opacity="0.76"/>
<rect x="219.6" y="251.5" width="2.4" height="1.8" fill="#f8e0b0" opacity="0.84"/>
<rect x="223.2" y="251.5" width="2.4" height="1.8" fill="#fff6dc" opacity="0.90"/>
<rect x="234.0" y="251.5" width="2.4" height="1.8" fill="#e8c080" opacity="0.82"/>
<rect x="237.6" y="251.5" width="2.4" height="1.8" fill="#fff6dc" opacity="0.97"/>
<rect x="241.2" y="251.5" width="2.4" height="1.8" fill="#f8e0b0" opacity="0.81"/>
<rect x="248.4" y="251.5" width="2.4" height="1.8" fill="#f8e0b0" opacity="0.94"/>
<rect x="255.6" y="251.5" width="2.4" height="1.8" fill="#f8e0b0" opacity="0.78"/>
<rect x="262.8" y="251.5" width="2.4" height="1.8" fill="#ffffff" opacity="0.82"/>
<rect x="298.8" y="251.5" width="2.4" height="1.8" fill="#ffffff" opacity="0.90"/>
<rect x="302.4" y="251.5" width="2.4" height="1.8" fill="#ffffff" opacity="0.97"/>
<rect x="309.6" y="251.5" width="2.4" height="1.8" fill="#f8e0b0" opacity="0.81"/>
<rect x="313.2" y="251.5" width="2.4" height="1.8" fill="#fff6dc" opacity="0.96"/>
<rect x="342.0" y="251.5" width="2.4" height="1.8" fill="#f8e0b0" opacity="0.89"/>
<rect x="345.6" y="251.5" width="2.4" height="1.8" fill="#f8e0b0" opacity="0.99"/>
<rect x="349.2" y="251.5" width="2.4" height="1.8" fill="#ffffff" opacity="0.88"/>
<rect x="356.4" y="251.5" width="2.4" height="1.8" fill="#f8e0b0" opacity="0.92"/>
<rect x="367.2" y="251.5" width="2.4" height="1.8" fill="#f8e0b0" opacity="0.79"/>
<rect x="392.4" y="251.5" width="2.4" height="1.8" fill="#ffffff" opacity="0.88"/>
<rect x="82.8" y="255.5" width="2.4" height="1.8" fill="#f8e0b0" opacity="0.90"/>
<rect x="100.8" y="255.5" width="2.4" height="1.8" fill="#e8c080" opacity="0.94"/>
<rect x="118.8" y="255.5" width="2.4" height="1.8" fill="#ffffff" opacity="0.88"/>
<rect x="122.4" y="255.5" width="2.4" height="1.8" fill="#fff6dc" opacity="0.85"/>
<rect x="126.0" y="255.5" width="2.4" height="1.8" fill="#f8e0b0" opacity="0.83"/>
<rect x="136.8" y="255.5" width="2.4" height="1.8" fill="#ffffff" opacity="1.00"/>
<rect x="158.4" y="255.5" width="2.4" height="1.8" fill="#f8e0b0" opacity="0.86"/>
<rect x="169.2" y="255.5" width="2.4" height="1.8" fill="#e8c080" opacity="0.82"/>
<rect x="172.8" y="255.5" width="2.4" height="1.8" fill="#fff6dc" opacity="0.79"/>
<rect x="180.0" y="255.5" width="2.4" height="1.8" fill="#fff6dc" opacity="1.00"/>
<rect x="183.6" y="255.5" width="2.4" height="1.8" fill="#ffffff" opacity="0.75"/>
<rect x="205.2" y="255.5" width="2.4" height="1.8" fill="#e8c080" opacity="0.84"/>
<rect x="208.8" y="255.5" width="2.4" height="1.8" fill="#f8e0b0" opacity="0.90"/>
<rect x="219.6" y="255.5" width="2.4" height="1.8" fill="#ffffff" opacity="0.83"/>
<rect x="230.4" y="255.5" width="2.4" height="1.8" fill="#f8e0b0" opacity="0.98"/>
<rect x="234.0" y="255.5" width="2.4" height="1.8" fill="#e8c080" opacity="0.82"/>
<rect x="237.6" y="255.5" width="2.4" height="1.8" fill="#fff6dc" opacity="0.80"/>
<rect x="241.2" y="255.5" width="2.4" height="1.8" fill="#e8c080" opacity="0.90"/>
<rect x="244.8" y="255.5" width="2.4" height="1.8" fill="#ffffff" opacity="0.91"/>
<rect x="252.0" y="255.5" width="2.4" height="1.8" fill="#e8c080" opacity="0.84"/>
<rect x="291.6" y="255.5" width="2.4" height="1.8" fill="#ffffff" opacity="0.89"/>
<rect x="302.4" y="255.5" width="2.4" height="1.8" fill="#f8e0b0" opacity="0.75"/>
<rect x="306.0" y="255.5" width="2.4" height="1.8" fill="#e8c080" opacity="0.99"/>
<rect x="316.8" y="255.5" width="2.4" height="1.8" fill="#ffffff" opacity="0.75"/>
<rect x="320.4" y="255.5" width="2.4" height="1.8" fill="#f8e0b0" opacity="0.92"/>
<rect x="342.0" y="255.5" width="2.4" height="1.8" fill="#f8e0b0" opacity="0.98"/>
<rect x="349.2" y="255.5" width="2.4" height="1.8" fill="#e8c080" opacity="0.84"/>
<rect x="363.6" y="255.5" width="2.4" height="1.8" fill="#fff6dc" opacity="0.87"/>
<rect x="370.8" y="255.5" width="2.4" height="1.8" fill="#f8e0b0" opacity="0.77"/>
<rect x="374.4" y="255.5" width="2.4" height="1.8" fill="#fff6dc" opacity="0.83"/>
<rect x="381.6" y="255.5" width="2.4" height="1.8" fill="#f8e0b0" opacity="0.92"/>
<rect x="79.2" y="259.5" width="2.4" height="1.8" fill="#ffffff" opacity="0.86"/>
<rect x="86.4" y="259.5" width="2.4" height="1.8" fill="#f8e0b0" opacity="0.94"/>
<rect x="97.2" y="259.5" width="2.4" height="1.8" fill="#f8e0b0" opacity="0.89"/>
<rect x="100.8" y="259.5" width="2.4" height="1.8" fill="#e8c080" opacity="0.95"/>
<rect x="108.0" y="259.5" width="2.4" height="1.8" fill="#ffffff" opacity="0.92"/>
<rect x="136.8" y="259.5" width="2.4" height="1.8" fill="#f8e0b0" opacity="0.96"/>
<rect x="140.4" y="259.5" width="2.4" height="1.8" fill="#fff6dc" opacity="0.80"/>
<rect x="147.6" y="259.5" width="2.4" height="1.8" fill="#e8c080" opacity="0.86"/>
<rect x="172.8" y="259.5" width="2.4" height="1.8" fill="#e8c080" opacity="0.92"/>
<rect x="176.4" y="259.5" width="2.4" height="1.8" fill="#e8c080" opacity="0.96"/>
<rect x="180.0" y="259.5" width="2.4" height="1.8" fill="#e8c080" opacity="0.75"/>
<rect x="190.8" y="259.5" width="2.4" height="1.8" fill="#e8c080" opacity="0.97"/>
<rect x="194.4" y="259.5" width="2.4" height="1.8" fill="#e8c080" opacity="0.90"/>
<rect x="216.0" y="259.5" width="2.4" height="1.8" fill="#ffffff" opacity="0.90"/>
<rect x="230.4" y="259.5" width="2.4" height="1.8" fill="#e8c080" opacity="0.79"/>
<rect x="237.6" y="259.5" width="2.4" height="1.8" fill="#fff6dc" opacity="0.96"/>
<rect x="244.8" y="259.5" width="2.4" height="1.8" fill="#e8c080" opacity="0.84"/>
<rect x="248.4" y="259.5" width="2.4" height="1.8" fill="#ffffff" opacity="0.92"/>
<rect x="252.0" y="259.5" width="2.4" height="1.8" fill="#ffffff" opacity="0.77"/>
<rect x="255.6" y="259.5" width="2.4" height="1.8" fill="#fff6dc" opacity="0.87"/>
<rect x="259.2" y="259.5" width="2.4" height="1.8" fill="#fff6dc" opacity="0.88"/>
<rect x="262.8" y="259.5" width="2.4" height="1.8" fill="#f8e0b0" opacity="0.94"/>
<rect x="266.4" y="259.5" width="2.4" height="1.8" fill="#ffffff" opacity="0.87"/>
<rect x="313.2" y="259.5" width="2.4" height="1.8" fill="#f8e0b0" opacity="0.77"/>
<rect x="316.8" y="259.5" width="2.4" height="1.8" fill="#fff6dc" opacity="0.89"/>
<rect x="327.6" y="259.5" width="2.4" height="1.8" fill="#e8c080" opacity="0.98"/>
<rect x="331.2" y="259.5" width="2.4" height="1.8" fill="#fff6dc" opacity="0.83"/>
<rect x="334.8" y="259.5" width="2.4" height="1.8" fill="#ffffff" opacity="0.77"/>
<rect x="345.6" y="259.5" width="2.4" height="1.8" fill="#ffffff" opacity="0.86"/>
<rect x="356.4" y="259.5" width="2.4" height="1.8" fill="#e8c080" opacity="0.85"/>
<rect x="370.8" y="259.5" width="2.4" height="1.8" fill="#e8c080" opacity="0.91"/>
<rect x="381.6" y="259.5" width="2.4" height="1.8" fill="#f8e0b0" opacity="0.95"/>
<rect x="385.2" y="259.5" width="2.4" height="1.8" fill="#f8e0b0" opacity="0.91"/>
<rect x="388.8" y="259.5" width="2.4" height="1.8" fill="#e8c080" opacity="0.84"/>
<rect x="80" y="129" width="27" height="36" fill="#0b0a09"/>
<rect x="102.8" y="130.5" width="2.4" height="1.8" fill="#e8c080" opacity="0.95"/>
<rect x="81.2" y="134.7" width="2.4" height="1.8" fill="#fff6dc" opacity="0.86"/>
<rect x="102.8" y="134.7" width="2.4" height="1.8" fill="#ffffff" opacity="0.93"/>
<rect x="88.4" y="138.9" width="2.4" height="1.8" fill="#e8c080" opacity="0.94"/>
<rect x="92.0" y="138.9" width="2.4" height="1.8" fill="#e8c080" opacity="0.92"/>
<rect x="95.6" y="138.9" width="2.4" height="1.8" fill="#e8c080" opacity="0.87"/>
<rect x="99.2" y="138.9" width="2.4" height="1.8" fill="#fff6dc" opacity="0.96"/>
<rect x="81.2" y="143.1" width="2.4" height="1.8" fill="#ffffff" opacity="0.81"/>
<rect x="84.8" y="143.1" width="2.4" height="1.8" fill="#ffffff" opacity="0.79"/>
<rect x="88.4" y="143.1" width="2.4" height="1.8" fill="#f8e0b0" opacity="0.85"/>
<rect x="95.6" y="143.1" width="2.4" height="1.8" fill="#ffffff" opacity="0.96"/>
<rect x="99.2" y="143.1" width="2.4" height="1.8" fill="#e8c080" opacity="0.91"/>
<rect x="102.8" y="143.1" width="2.4" height="1.8" fill="#e8c080" opacity="0.94"/>
<rect x="84.8" y="147.3" width="2.4" height="1.8" fill="#ffffff" opacity="0.92"/>
<rect x="88.4" y="147.3" width="2.4" height="1.8" fill="#f8e0b0" opacity="0.79"/>
<rect x="92.0" y="147.3" width="2.4" height="1.8" fill="#ffffff" opacity="0.81"/>
<rect x="95.6" y="147.3" width="2.4" height="1.8" fill="#fff6dc" opacity="0.79"/>
<rect x="99.2" y="147.3" width="2.4" height="1.8" fill="#f8e0b0" opacity="0.82"/>
<rect x="81.2" y="151.5" width="2.4" height="1.8" fill="#fff6dc" opacity="0.86"/>
<rect x="81.2" y="155.7" width="2.4" height="1.8" fill="#ffffff" opacity="0.77"/>
<rect x="84.8" y="155.7" width="2.4" height="1.8" fill="#e8c080" opacity="0.85"/>
<rect x="88.4" y="155.7" width="2.4" height="1.8" fill="#ffffff" opacity="0.77"/>
<rect x="92.0" y="155.7" width="2.4" height="1.8" fill="#ffffff" opacity="0.93"/>
<rect x="95.6" y="155.7" width="2.4" height="1.8" fill="#f8e0b0" opacity="0.79"/>
<rect x="102.8" y="155.7" width="2.4" height="1.8" fill="#fff6dc" opacity="0.85"/>
<rect x="84.8" y="159.9" width="2.4" height="1.8" fill="#e8c080" opacity="0.88"/>
<rect x="92.0" y="159.9" width="2.4" height="1.8" fill="#e8c080" opacity="0.81"/>
<rect x="87" y="105" width="29" height="60" fill="#0b0a09"/>
<rect x="88.2" y="106.5" width="2.4" height="1.8" fill="#f5ecd8" opacity="0.91"/>
<rect x="113.4" y="106.5" width="2.4" height="1.8" fill="#ffffff" opacity="0.80"/>
<rect x="88.2" y="110.7" width="2.4" height="1.8" fill="#ffffff" opacity="0.84"/>
<rect x="109.8" y="110.7" width="2.4" height="1.8" fill="#e8d0a0" opacity="0.79"/>
<rect x="113.4" y="110.7" width="2.4" height="1.8" fill="#f5ecd8" opacity="0.86"/>
<rect x="88.2" y="114.9" width="2.4" height="1.8" fill="#e8d0a0" opacity="0.88"/>
<rect x="91.8" y="114.9" width="2.4" height="1.8" fill="#ffffff" opacity="0.92"/>
<rect x="95.4" y="114.9" width="2.4" height="1.8" fill="#ffffff" opacity="0.96"/>
<rect x="99.0" y="114.9" width="2.4" height="1.8" fill="#f5ecd8" opacity="0.88"/>
<rect x="109.8" y="114.9" width="2.4" height="1.8" fill="#f5ecd8" opacity="1.00"/>
<rect x="113.4" y="114.9" width="2.4" height="1.8" fill="#e8d0a0" opacity="0.82"/>
<rect x="88.2" y="119.1" width="2.4" height="1.8" fill="#ffffff" opacity="0.79"/>
<rect x="95.4" y="119.1" width="2.4" height="1.8" fill="#e8d0a0" opacity="0.88"/>
<rect x="99.0" y="119.1" width="2.4" height="1.8" fill="#e8d0a0" opacity="0.78"/>
<rect x="106.2" y="119.1" width="2.4" height="1.8" fill="#f5ecd8" opacity="0.81"/>
<rect x="109.8" y="119.1" width="2.4" height="1.8" fill="#f5ecd8" opacity="0.83"/>
<rect x="113.4" y="119.1" width="2.4" height="1.8" fill="#f5ecd8" opacity="0.77"/>
<rect x="88.2" y="123.3" width="2.4" height="1.8" fill="#f5ecd8" opacity="0.89"/>
<rect x="95.4" y="123.3" width="2.4" height="1.8" fill="#e8d0a0" opacity="0.97"/>
<rect x="109.8" y="123.3" width="2.4" height="1.8" fill="#f5ecd8" opacity="0.86"/>
<rect x="91.8" y="127.5" width="2.4" height="1.8" fill="#ffffff" opacity="0.88"/>
<rect x="95.4" y="127.5" width="2.4" height="1.8" fill="#ffffff" opacity="0.94"/>
<rect x="113.4" y="127.5" width="2.4" height="1.8" fill="#e8d0a0" opacity="0.94"/>
<rect x="91.8" y="131.7" width="2.4" height="1.8" fill="#f5ecd8" opacity="0.94"/>
<rect x="95.4" y="131.7" width="2.4" height="1.8" fill="#e8d0a0" opacity="0.87"/>
<rect x="99.0" y="131.7" width="2.4" height="1.8" fill="#e8d0a0" opacity="0.93"/>
<rect x="102.6" y="131.7" width="2.4" height="1.8" fill="#ffffff" opacity="0.88"/>
<rect x="109.8" y="131.7" width="2.4" height="1.8" fill="#e8d0a0" opacity="0.76"/>
<rect x="91.8" y="135.9" width="2.4" height="1.8" fill="#ffffff" opacity="0.85"/>
<rect x="95.4" y="135.9" width="2.4" height="1.8" fill="#ffffff" opacity="0.98"/>
<rect x="99.0" y="135.9" width="2.4" height="1.8" fill="#ffffff" opacity="0.96"/>
<rect x="106.2" y="135.9" width="2.4" height="1.8" fill="#ffffff" opacity="0.87"/>
<rect x="109.8" y="135.9" width="2.4" height="1.8" fill="#e8d0a0" opacity="0.79"/>
<rect x="113.4" y="135.9" width="2.4" height="1.8" fill="#f5ecd8" opacity="0.82"/>
<rect x="88.2" y="140.1" width="2.4" height="1.8" fill="#ffffff" opacity="0.83"/>
<rect x="95.4" y="140.1" width="2.4" height="1.8" fill="#ffffff" opacity="0.81"/>
<rect x="102.6" y="140.1" width="2.4" height="1.8" fill="#f5ecd8" opacity="0.79"/>
<rect x="106.2" y="140.1" width="2.4" height="1.8" fill="#e8d0a0" opacity="0.87"/>
<rect x="88.2" y="144.3" width="2.4" height="1.8" fill="#ffffff" opacity="0.82"/>
<rect x="91.8" y="144.3" width="2.4" height="1.8" fill="#e8d0a0" opacity="0.90"/>
<rect x="95.4" y="144.3" width="2.4" height="1.8" fill="#e8d0a0" opacity="0.82"/>
<rect x="99.0" y="144.3" width="2.4" height="1.8" fill="#e8d0a0" opacity="0.91"/>
<rect x="106.2" y="144.3" width="2.4" height="1.8" fill="#f5ecd8" opacity="0.93"/>
<rect x="88.2" y="148.5" width="2.4" height="1.8" fill="#ffffff" opacity="0.96"/>
<rect x="95.4" y="148.5" width="2.4" height="1.8" fill="#ffffff" opacity="0.94"/>
<rect x="102.6" y="148.5" width="2.4" height="1.8" fill="#ffffff" opacity="0.85"/>
<rect x="106.2" y="148.5" width="2.4" height="1.8" fill="#ffffff" opacity="0.98"/>
<rect x="91.8" y="152.7" width="2.4" height="1.8" fill="#ffffff" opacity="0.94"/>
<rect x="95.4" y="152.7" width="2.4" height="1.8" fill="#ffffff" opacity="0.86"/>
<rect x="99.0" y="152.7" width="2.4" height="1.8" fill="#f5ecd8" opacity="0.98"/>
<rect x="106.2" y="152.7" width="2.4" height="1.8" fill="#e8d0a0" opacity="0.94"/>
<rect x="88.2" y="156.9" width="2.4" height="1.8" fill="#f5ecd8" opacity="0.99"/>
<rect x="91.8" y="156.9" width="2.4" height="1.8" fill="#f5ecd8" opacity="0.79"/>
<rect x="99.0" y="156.9" width="2.4" height="1.8" fill="#f5ecd8" opacity="0.99"/>
<rect x="102.6" y="156.9" width="2.4" height="1.8" fill="#f5ecd8" opacity="0.97"/>
<rect x="106.2" y="156.9" width="2.4" height="1.8" fill="#ffffff" opacity="0.82"/>
<rect x="109.8" y="156.9" width="2.4" height="1.8" fill="#e8d0a0" opacity="0.89"/>
<rect x="91.8" y="161.1" width="2.4" height="1.8" fill="#e8d0a0" opacity="0.93"/>
<rect x="109.8" y="161.1" width="2.4" height="1.8" fill="#ffffff" opacity="0.83"/>
<rect x="113.4" y="161.1" width="2.4" height="1.8" fill="#e8d0a0" opacity="0.94"/>
<rect x="128" y="90" width="22" height="75" fill="#0b0a09"/>
<rect x="129.2" y="91.5" width="2.8" height="1.8" fill="#ffffff" opacity="0.91"/>
<rect x="135.6" y="91.5" width="2.8" height="1.8" fill="#e8f0ff" opacity="0.96"/>
<rect x="138.8" y="91.5" width="2.8" height="1.8" fill="#ffffff" opacity="0.84"/>
<rect x="142.0" y="91.5" width="2.8" height="1.8" fill="#ffffff" opacity="0.76"/>
<rect x="145.2" y="91.5" width="2.8" height="1.8" fill="#f5ead0" opacity="0.89"/>
<rect x="129.2" y="95.5" width="2.8" height="1.8" fill="#e8f0ff" opacity="0.88"/>
<rect x="132.4" y="95.5" width="2.8" height="1.8" fill="#ffffff" opacity="0.89"/>
<rect x="135.6" y="95.5" width="2.8" height="1.8" fill="#e8f0ff" opacity="0.84"/>
<rect x="138.8" y="95.5" width="2.8" height="1.8" fill="#f5ead0" opacity="1.00"/>
<rect x="142.0" y="95.5" width="2.8" height="1.8" fill="#e8f0ff" opacity="0.81"/>
<rect x="145.2" y="95.5" width="2.8" height="1.8" fill="#ffffff" opacity="0.98"/>
<rect x="148.4" y="95.5" width="2.8" height="1.8" fill="#e8f0ff" opacity="0.95"/>
<rect x="129.2" y="99.5" width="2.8" height="1.8" fill="#e8f0ff" opacity="0.95"/>
<rect x="132.4" y="99.5" width="2.8" height="1.8" fill="#e8f0ff" opacity="0.84"/>
<rect x="135.6" y="99.5" width="2.8" height="1.8" fill="#ffffff" opacity="0.98"/>
<rect x="138.8" y="99.5" width="2.8" height="1.8" fill="#e8f0ff" opacity="0.94"/>
<rect x="142.0" y="99.5" width="2.8" height="1.8" fill="#f5ead0" opacity="0.87"/>
<rect x="145.2" y="99.5" width="2.8" height="1.8" fill="#ffffff" opacity="0.81"/>
<rect x="148.4" y="99.5" width="2.8" height="1.8" fill="#e8f0ff" opacity="0.82"/>
<rect x="129.2" y="103.5" width="2.8" height="1.8" fill="#e8f0ff" opacity="0.85"/>
<rect x="132.4" y="103.5" width="2.8" height="1.8" fill="#e8f0ff" opacity="0.96"/>
<rect x="138.8" y="103.5" width="2.8" height="1.8" fill="#ffffff" opacity="0.91"/>
<rect x="142.0" y="103.5" width="2.8" height="1.8" fill="#e8f0ff" opacity="0.77"/>
<rect x="145.2" y="103.5" width="2.8" height="1.8" fill="#f5ead0" opacity="0.77"/>
<rect x="148.4" y="103.5" width="2.8" height="1.8" fill="#ffffff" opacity="0.99"/>
<rect x="132.4" y="107.5" width="2.8" height="1.8" fill="#ffffff" opacity="0.82"/>
<rect x="135.6" y="107.5" width="2.8" height="1.8" fill="#ffffff" opacity="0.95"/>
<rect x="138.8" y="107.5" width="2.8" height="1.8" fill="#f5ead0" opacity="0.97"/>
<rect x="142.0" y="107.5" width="2.8" height="1.8" fill="#f5ead0" opacity="0.77"/>
<rect x="145.2" y="107.5" width="2.8" height="1.8" fill="#e8f0ff" opacity="0.93"/>
<rect x="148.4" y="107.5" width="2.8" height="1.8" fill="#e8f0ff" opacity="0.94"/>
<rect x="129.2" y="111.5" width="2.8" height="1.8" fill="#ffffff" opacity="0.87"/>
<rect x="132.4" y="111.5" width="2.8" height="1.8" fill="#ffffff" opacity="0.90"/>
<rect x="135.6" y="111.5" width="2.8" height="1.8" fill="#e8f0ff" opacity="0.79"/>
<rect x="138.8" y="111.5" width="2.8" height="1.8" fill="#f5ead0" opacity="0.92"/>
<rect x="142.0" y="111.5" width="2.8" height="1.8" fill="#f5ead0" opacity="0.87"/>
<rect x="145.2" y="111.5" width="2.8" height="1.8" fill="#ffffff" opacity="0.86"/>
<rect x="148.4" y="111.5" width="2.8" height="1.8" fill="#f5ead0" opacity="0.91"/>
<rect x="129.2" y="115.5" width="2.8" height="1.8" fill="#e8f0ff" opacity="0.79"/>
<rect x="132.4" y="115.5" width="2.8" height="1.8" fill="#e8f0ff" opacity="0.77"/>
<rect x="135.6" y="115.5" width="2.8" height="1.8" fill="#f5ead0" opacity="0.93"/>
<rect x="138.8" y="115.5" width="2.8" height="1.8" fill="#e8f0ff" opacity="0.90"/>
<rect x="142.0" y="115.5" width="2.8" height="1.8" fill="#f5ead0" opacity="0.98"/>
<rect x="145.2" y="115.5" width="2.8" height="1.8" fill="#f5ead0" opacity="0.86"/>
<rect x="148.4" y="115.5" width="2.8" height="1.8" fill="#e8f0ff" opacity="0.99"/>
<rect x="129.2" y="119.5" width="2.8" height="1.8" fill="#f5ead0" opacity="0.98"/>
<rect x="132.4" y="119.5" width="2.8" height="1.8" fill="#e8f0ff" opacity="0.99"/>
<rect x="135.6" y="119.5" width="2.8" height="1.8" fill="#ffffff" opacity="0.99"/>
<rect x="138.8" y="119.5" width="2.8" height="1.8" fill="#ffffff" opacity="0.98"/>
<rect x="142.0" y="119.5" width="2.8" height="1.8" fill="#f5ead0" opacity="0.79"/>
<rect x="145.2" y="119.5" width="2.8" height="1.8" fill="#f5ead0" opacity="0.80"/>
<rect x="148.4" y="119.5" width="2.8" height="1.8" fill="#f5ead0" opacity="0.92"/>
<rect x="132.4" y="123.5" width="2.8" height="1.8" fill="#ffffff" opacity="0.95"/>
<rect x="135.6" y="123.5" width="2.8" height="1.8" fill="#f5ead0" opacity="0.90"/>
<rect x="138.8" y="123.5" width="2.8" height="1.8" fill="#f5ead0" opacity="0.99"/>
<rect x="142.0" y="123.5" width="2.8" height="1.8" fill="#e8f0ff" opacity="0.77"/>
<rect x="145.2" y="123.5" width="2.8" height="1.8" fill="#f5ead0" opacity="0.87"/>
<rect x="148.4" y="123.5" width="2.8" height="1.8" fill="#ffffff" opacity="0.99"/>
<rect x="129.2" y="127.5" width="2.8" height="1.8" fill="#f5ead0" opacity="0.91"/>
<rect x="132.4" y="127.5" width="2.8" height="1.8" fill="#e8f0ff" opacity="0.86"/>
<rect x="135.6" y="127.5" width="2.8" height="1.8" fill="#ffffff" opacity="0.96"/>
<rect x="138.8" y="127.5" width="2.8" height="1.8" fill="#ffffff" opacity="0.86"/>
<rect x="142.0" y="127.5" width="2.8" height="1.8" fill="#ffffff" opacity="0.93"/>
<rect x="145.2" y="127.5" width="2.8" height="1.8" fill="#ffffff" opacity="0.87"/>
<rect x="148.4" y="127.5" width="2.8" height="1.8" fill="#e8f0ff" opacity="0.98"/>
<rect x="129.2" y="131.5" width="2.8" height="1.8" fill="#ffffff" opacity="0.84"/>
<rect x="132.4" y="131.5" width="2.8" height="1.8" fill="#e8f0ff" opacity="0.95"/>
<rect x="135.6" y="131.5" width="2.8" height="1.8" fill="#e8f0ff" opacity="0.78"/>
<rect x="138.8" y="131.5" width="2.8" height="1.8" fill="#e8f0ff" opacity="0.87"/>
<rect x="142.0" y="131.5" width="2.8" height="1.8" fill="#ffffff" opacity="0.90"/>
<rect x="148.4" y="131.5" width="2.8" height="1.8" fill="#f5ead0" opacity="0.87"/>
<rect x="129.2" y="135.5" width="2.8" height="1.8" fill="#e8f0ff" opacity="0.98"/>
<rect x="132.4" y="135.5" width="2.8" height="1.8" fill="#f5ead0" opacity="0.98"/>
<rect x="135.6" y="135.5" width="2.8" height="1.8" fill="#e8f0ff" opacity="0.99"/>
<rect x="138.8" y="135.5" width="2.8" height="1.8" fill="#ffffff" opacity="0.77"/>
<rect x="142.0" y="135.5" width="2.8" height="1.8" fill="#ffffff" opacity="0.93"/>
<rect x="145.2" y="135.5" width="2.8" height="1.8" fill="#ffffff" opacity="0.83"/>
<rect x="148.4" y="135.5" width="2.8" height="1.8" fill="#e8f0ff" opacity="0.87"/>
<rect x="129.2" y="139.5" width="2.8" height="1.8" fill="#e8f0ff" opacity="0.78"/>
<rect x="132.4" y="139.5" width="2.8" height="1.8" fill="#e8f0ff" opacity="0.77"/>
<rect x="135.6" y="139.5" width="2.8" height="1.8" fill="#f5ead0" opacity="0.96"/>
<rect x="138.8" y="139.5" width="2.8" height="1.8" fill="#f5ead0" opacity="0.88"/>
<rect x="148.4" y="139.5" width="2.8" height="1.8" fill="#f5ead0" opacity="0.87"/>
<rect x="138.8" y="143.5" width="2.8" height="1.8" fill="#e8f0ff" opacity="0.95"/>
<rect x="145.2" y="143.5" width="2.8" height="1.8" fill="#e8f0ff" opacity="0.97"/>
<rect x="148.4" y="143.5" width="2.8" height="1.8" fill="#ffffff" opacity="0.90"/>
<rect x="135.6" y="147.5" width="2.8" height="1.8" fill="#ffffff" opacity="0.82"/>
<rect x="138.8" y="147.5" width="2.8" height="1.8" fill="#e8f0ff" opacity="0.82"/>
<rect x="142.0" y="147.5" width="2.8" height="1.8" fill="#ffffff" opacity="0.95"/>
<rect x="148.4" y="147.5" width="2.8" height="1.8" fill="#f5ead0" opacity="0.83"/>
<rect x="129.2" y="151.5" width="2.8" height="1.8" fill="#f5ead0" opacity="0.93"/>
<rect x="132.4" y="151.5" width="2.8" height="1.8" fill="#ffffff" opacity="0.99"/>
<rect x="135.6" y="151.5" width="2.8" height="1.8" fill="#f5ead0" opacity="0.89"/>
<rect x="138.8" y="151.5" width="2.8" height="1.8" fill="#ffffff" opacity="0.77"/>
<rect x="142.0" y="151.5" width="2.8" height="1.8" fill="#e8f0ff" opacity="0.95"/>
<rect x="145.2" y="151.5" width="2.8" height="1.8" fill="#f5ead0" opacity="0.76"/>
<rect x="148.4" y="151.5" width="2.8" height="1.8" fill="#ffffff" opacity="0.88"/>
<rect x="129.2" y="155.5" width="2.8" height="1.8" fill="#ffffff" opacity="0.94"/>
<rect x="132.4" y="155.5" width="2.8" height="1.8" fill="#f5ead0" opacity="0.93"/>
<rect x="135.6" y="155.5" width="2.8" height="1.8" fill="#e8f0ff" opacity="0.98"/>
<rect x="138.8" y="155.5" width="2.8" height="1.8" fill="#f5ead0" opacity="0.77"/>
<rect x="142.0" y="155.5" width="2.8" height="1.8" fill="#ffffff" opacity="0.89"/>
<rect x="148.4" y="155.5" width="2.8" height="1.8" fill="#ffffff" opacity="0.89"/>
<rect x="129.2" y="159.5" width="2.8" height="1.8" fill="#ffffff" opacity="0.90"/>
<rect x="132.4" y="159.5" width="2.8" height="1.8" fill="#e8f0ff" opacity="0.93"/>
<rect x="135.6" y="159.5" width="2.8" height="1.8" fill="#ffffff" opacity="0.77"/>
<rect x="138.8" y="159.5" width="2.8" height="1.8" fill="#e8f0ff" opacity="0.89"/>
<rect x="142.0" y="159.5" width="2.8" height="1.8" fill="#ffffff" opacity="0.91"/>
<rect x="148.4" y="159.5" width="2.8" height="1.8" fill="#ffffff" opacity="0.88"/>
<rect x="129.2" y="163.5" width="2.8" height="1.8" fill="#ffffff" opacity="0.96"/>
<rect x="132.4" y="163.5" width="2.8" height="1.8" fill="#f5ead0" opacity="0.96"/>
<rect x="135.6" y="163.5" width="2.8" height="1.8" fill="#f5ead0" opacity="0.78"/>
<rect x="138.8" y="163.5" width="2.8" height="1.8" fill="#ffffff" opacity="1.00"/>
<rect x="145.2" y="163.5" width="2.8" height="1.8" fill="#e8f0ff" opacity="0.91"/>
<rect x="148.4" y="163.5" width="2.8" height="1.8" fill="#f5ead0" opacity="0.78"/>
<rect x="151" y="109" width="21" height="56" fill="#0b0a09"/>
<rect x="152.2" y="110.5" width="2.4" height="1.8" fill="#ffffff" opacity="0.76"/>
<rect x="163.0" y="110.5" width="2.4" height="1.8" fill="#ffffff" opacity="0.78"/>
<rect x="170.2" y="110.5" width="2.4" height="1.8" fill="#e8c080" opacity="0.97"/>
<rect x="155.8" y="114.7" width="2.4" height="1.8" fill="#ffffff" opacity="0.83"/>
<rect x="159.4" y="114.7" width="2.4" height="1.8" fill="#fff6dc" opacity="0.81"/>
<rect x="166.6" y="114.7" width="2.4" height="1.8" fill="#f8e0b0" opacity="0.80"/>
<rect x="170.2" y="114.7" width="2.4" height="1.8" fill="#ffffff" opacity="0.90"/>
<rect x="152.2" y="118.9" width="2.4" height="1.8" fill="#fff6dc" opacity="0.90"/>
<rect x="155.8" y="118.9" width="2.4" height="1.8" fill="#ffffff" opacity="0.86"/>
<rect x="159.4" y="118.9" width="2.4" height="1.8" fill="#ffffff" opacity="0.80"/>
<rect x="163.0" y="118.9" width="2.4" height="1.8" fill="#f8e0b0" opacity="0.83"/>
<rect x="166.6" y="118.9" width="2.4" height="1.8" fill="#ffffff" opacity="0.76"/>
<rect x="170.2" y="118.9" width="2.4" height="1.8" fill="#e8c080" opacity="0.92"/>
<rect x="155.8" y="123.1" width="2.4" height="1.8" fill="#f8e0b0" opacity="0.78"/>
<rect x="159.4" y="123.1" width="2.4" height="1.8" fill="#e8c080" opacity="0.89"/>
<rect x="163.0" y="123.1" width="2.4" height="1.8" fill="#fff6dc" opacity="0.96"/>
<rect x="170.2" y="123.1" width="2.4" height="1.8" fill="#f8e0b0" opacity="0.98"/>
<rect x="152.2" y="127.3" width="2.4" height="1.8" fill="#e8c080" opacity="0.75"/>
<rect x="155.8" y="127.3" width="2.4" height="1.8" fill="#fff6dc" opacity="0.75"/>
<rect x="163.0" y="127.3" width="2.4" height="1.8" fill="#f8e0b0" opacity="0.79"/>
<rect x="170.2" y="127.3" width="2.4" height="1.8" fill="#ffffff" opacity="0.83"/>
<rect x="155.8" y="131.5" width="2.4" height="1.8" fill="#fff6dc" opacity="0.93"/>
<rect x="163.0" y="131.5" width="2.4" height="1.8" fill="#fff6dc" opacity="0.88"/>
<rect x="166.6" y="131.5" width="2.4" height="1.8" fill="#f8e0b0" opacity="0.87"/>
<rect x="159.4" y="135.7" width="2.4" height="1.8" fill="#f8e0b0" opacity="0.90"/>
<rect x="163.0" y="135.7" width="2.4" height="1.8" fill="#fff6dc" opacity="0.91"/>
<rect x="152.2" y="139.9" width="2.4" height="1.8" fill="#f8e0b0" opacity="1.00"/>
<rect x="159.4" y="139.9" width="2.4" height="1.8" fill="#ffffff" opacity="0.87"/>
<rect x="152.2" y="144.1" width="2.4" height="1.8" fill="#fff6dc" opacity="0.79"/>
<rect x="155.8" y="144.1" width="2.4" height="1.8" fill="#e8c080" opacity="0.93"/>
<rect x="170.2" y="144.1" width="2.4" height="1.8" fill="#ffffff" opacity="0.78"/>
<rect x="166.6" y="148.3" width="2.4" height="1.8" fill="#fff6dc" opacity="0.88"/>
<rect x="152.2" y="152.5" width="2.4" height="1.8" fill="#ffffff" opacity="0.86"/>
<rect x="170.2" y="152.5" width="2.4" height="1.8" fill="#fff6dc" opacity="0.84"/>
<rect x="155.8" y="156.7" width="2.4" height="1.8" fill="#ffffff" opacity="0.97"/>
<rect x="163.0" y="156.7" width="2.4" height="1.8" fill="#ffffff" opacity="0.93"/>
<rect x="170.2" y="156.7" width="2.4" height="1.8" fill="#e8c080" opacity="0.84"/>
<rect x="152.2" y="160.9" width="2.4" height="1.8" fill="#fff6dc" opacity="0.99"/>
<rect x="155.8" y="160.9" width="2.4" height="1.8" fill="#fff6dc" opacity="0.93"/>
<rect x="159.4" y="160.9" width="2.4" height="1.8" fill="#f8e0b0" opacity="0.77"/>
<rect x="163.0" y="160.9" width="2.4" height="1.8" fill="#e8c080" opacity="0.93"/>
<rect x="166.6" y="160.9" width="2.4" height="1.8" fill="#ffffff" opacity="0.99"/>
<rect x="172" y="116" width="8" height="49" fill="#0b0a09"/>
<rect x="173.2" y="117.5" width="2.4" height="1.8" fill="#ffffff" opacity="0.93"/>
<rect x="176.8" y="125.9" width="2.4" height="1.8" fill="#ffffff" opacity="0.76"/>
<rect x="173.2" y="138.5" width="2.4" height="1.8" fill="#e8c080" opacity="0.93"/>
<rect x="173.2" y="142.7" width="2.4" height="1.8" fill="#ffffff" opacity="0.77"/>
<rect x="176.8" y="146.9" width="2.4" height="1.8" fill="#f8e0b0" opacity="0.81"/>
<rect x="173.2" y="151.1" width="2.4" height="1.8" fill="#fff6dc" opacity="0.83"/>
<rect x="173.2" y="159.5" width="2.4" height="1.8" fill="#f8e0b0" opacity="0.77"/>
<rect x="176.8" y="159.5" width="2.4" height="1.8" fill="#ffffff" opacity="0.79"/>
<rect x="173.2" y="163.7" width="2.4" height="1.8" fill="#e8c080" opacity="0.98"/>
<rect x="176.8" y="163.7" width="2.4" height="1.8" fill="#fff6dc" opacity="0.86"/>
<rect x="181" y="77" width="25" height="88" fill="#0b0a09"/>
<rect x="182.2" y="78.5" width="2.6" height="1.8" fill="#dfe8ff" opacity="0.77"/>
<rect x="185.2" y="78.5" width="2.6" height="1.8" fill="#f5ead0" opacity="0.94"/>
<rect x="188.2" y="78.5" width="2.6" height="1.8" fill="#f5ead0" opacity="0.76"/>
<rect x="194.2" y="78.5" width="2.6" height="1.8" fill="#ffffff" opacity="0.84"/>
<rect x="197.2" y="78.5" width="2.6" height="1.8" fill="#ffffff" opacity="0.81"/>
<rect x="200.2" y="78.5" width="2.6" height="1.8" fill="#dfe8ff" opacity="0.90"/>
<rect x="203.2" y="78.5" width="2.6" height="1.8" fill="#ffffff" opacity="0.85"/>
<rect x="188.2" y="82.3" width="2.6" height="1.8" fill="#f5ead0" opacity="0.91"/>
<rect x="191.2" y="82.3" width="2.6" height="1.8" fill="#ffffff" opacity="0.78"/>
<rect x="197.2" y="82.3" width="2.6" height="1.8" fill="#dfe8ff" opacity="0.94"/>
<rect x="200.2" y="82.3" width="2.6" height="1.8" fill="#f5ead0" opacity="0.96"/>
<rect x="203.2" y="82.3" width="2.6" height="1.8" fill="#dfe8ff" opacity="0.77"/>
<rect x="182.2" y="86.1" width="2.6" height="1.8" fill="#f5ead0" opacity="0.91"/>
<rect x="185.2" y="86.1" width="2.6" height="1.8" fill="#dfe8ff" opacity="0.97"/>
<rect x="191.2" y="86.1" width="2.6" height="1.8" fill="#f5ead0" opacity="0.91"/>
<rect x="194.2" y="86.1" width="2.6" height="1.8" fill="#f5ead0" opacity="0.81"/>
<rect x="197.2" y="86.1" width="2.6" height="1.8" fill="#ffffff" opacity="0.80"/>
<rect x="200.2" y="86.1" width="2.6" height="1.8" fill="#dfe8ff" opacity="0.79"/>
<rect x="203.2" y="86.1" width="2.6" height="1.8" fill="#f5ead0" opacity="0.95"/>
<rect x="182.2" y="89.9" width="2.6" height="1.8" fill="#dfe8ff" opacity="0.79"/>
<rect x="188.2" y="89.9" width="2.6" height="1.8" fill="#dfe8ff" opacity="0.90"/>
<rect x="191.2" y="89.9" width="2.6" height="1.8" fill="#ffffff" opacity="0.93"/>
<rect x="194.2" y="89.9" width="2.6" height="1.8" fill="#f5ead0" opacity="0.84"/>
<rect x="197.2" y="89.9" width="2.6" height="1.8" fill="#f5ead0" opacity="0.90"/>
<rect x="200.2" y="89.9" width="2.6" height="1.8" fill="#dfe8ff" opacity="0.88"/>
<rect x="203.2" y="89.9" width="2.6" height="1.8" fill="#dfe8ff" opacity="0.82"/>
<rect x="182.2" y="93.7" width="2.6" height="1.8" fill="#ffffff" opacity="0.96"/>
<rect x="185.2" y="93.7" width="2.6" height="1.8" fill="#dfe8ff" opacity="0.78"/>
<rect x="188.2" y="93.7" width="2.6" height="1.8" fill="#f5ead0" opacity="0.92"/>
<rect x="191.2" y="93.7" width="2.6" height="1.8" fill="#ffffff" opacity="0.94"/>
<rect x="194.2" y="93.7" width="2.6" height="1.8" fill="#f5ead0" opacity="0.95"/>
<rect x="197.2" y="93.7" width="2.6" height="1.8" fill="#dfe8ff" opacity="0.78"/>
<rect x="200.2" y="93.7" width="2.6" height="1.8" fill="#dfe8ff" opacity="0.77"/>
<rect x="203.2" y="93.7" width="2.6" height="1.8" fill="#ffffff" opacity="0.78"/>
<rect x="191.2" y="97.5" width="2.6" height="1.8" fill="#ffffff" opacity="0.75"/>
<rect x="194.2" y="97.5" width="2.6" height="1.8" fill="#f5ead0" opacity="0.79"/>
<rect x="197.2" y="97.5" width="2.6" height="1.8" fill="#f5ead0" opacity="0.96"/>
<rect x="200.2" y="97.5" width="2.6" height="1.8" fill="#f5ead0" opacity="0.89"/>
<rect x="203.2" y="97.5" width="2.6" height="1.8" fill="#ffffff" opacity="0.99"/>
<rect x="182.2" y="101.3" width="2.6" height="1.8" fill="#f5ead0" opacity="0.93"/>
<rect x="185.2" y="101.3" width="2.6" height="1.8" fill="#f5ead0" opacity="1.00"/>
<rect x="188.2" y="101.3" width="2.6" height="1.8" fill="#ffffff" opacity="0.76"/>
<rect x="191.2" y="101.3" width="2.6" height="1.8" fill="#f5ead0" opacity="0.93"/>
<rect x="194.2" y="101.3" width="2.6" height="1.8" fill="#dfe8ff" opacity="0.94"/>
<rect x="197.2" y="101.3" width="2.6" height="1.8" fill="#f5ead0" opacity="0.99"/>
<rect x="203.2" y="101.3" width="2.6" height="1.8" fill="#ffffff" opacity="0.86"/>
<rect x="182.2" y="105.1" width="2.6" height="1.8" fill="#ffffff" opacity="0.78"/>
<rect x="185.2" y="105.1" width="2.6" height="1.8" fill="#ffffff" opacity="0.80"/>
<rect x="188.2" y="105.1" width="2.6" height="1.8" fill="#f5ead0" opacity="0.76"/>
<rect x="191.2" y="105.1" width="2.6" height="1.8" fill="#dfe8ff" opacity="0.97"/>
<rect x="194.2" y="105.1" width="2.6" height="1.8" fill="#f5ead0" opacity="0.93"/>
<rect x="203.2" y="105.1" width="2.6" height="1.8" fill="#f5ead0" opacity="0.95"/>
<rect x="182.2" y="108.9" width="2.6" height="1.8" fill="#f5ead0" opacity="0.92"/>
<rect x="188.2" y="108.9" width="2.6" height="1.8" fill="#ffffff" opacity="0.99"/>
<rect x="194.2" y="108.9" width="2.6" height="1.8" fill="#ffffff" opacity="0.80"/>
<rect x="200.2" y="108.9" width="2.6" height="1.8" fill="#ffffff" opacity="0.93"/>
<rect x="182.2" y="112.7" width="2.6" height="1.8" fill="#ffffff" opacity="0.87"/>
<rect x="188.2" y="112.7" width="2.6" height="1.8" fill="#f5ead0" opacity="0.99"/>
<rect x="191.2" y="112.7" width="2.6" height="1.8" fill="#f5ead0" opacity="0.88"/>
<rect x="194.2" y="112.7" width="2.6" height="1.8" fill="#ffffff" opacity="0.86"/>
<rect x="197.2" y="112.7" width="2.6" height="1.8" fill="#ffffff" opacity="0.98"/>
<rect x="200.2" y="112.7" width="2.6" height="1.8" fill="#f5ead0" opacity="0.98"/>
<rect x="203.2" y="112.7" width="2.6" height="1.8" fill="#ffffff" opacity="0.75"/>
<rect x="182.2" y="116.5" width="2.6" height="1.8" fill="#ffffff" opacity="0.83"/>
<rect x="185.2" y="116.5" width="2.6" height="1.8" fill="#dfe8ff" opacity="0.97"/>
<rect x="188.2" y="116.5" width="2.6" height="1.8" fill="#dfe8ff" opacity="0.87"/>
<rect x="191.2" y="116.5" width="2.6" height="1.8" fill="#ffffff" opacity="0.87"/>
<rect x="194.2" y="116.5" width="2.6" height="1.8" fill="#ffffff" opacity="0.95"/>
<rect x="197.2" y="116.5" width="2.6" height="1.8" fill="#ffffff" opacity="0.87"/>
<rect x="200.2" y="116.5" width="2.6" height="1.8" fill="#f5ead0" opacity="0.96"/>
<rect x="182.2" y="120.3" width="2.6" height="1.8" fill="#f5ead0" opacity="0.89"/>
<rect x="185.2" y="120.3" width="2.6" height="1.8" fill="#dfe8ff" opacity="0.91"/>
<rect x="188.2" y="120.3" width="2.6" height="1.8" fill="#dfe8ff" opacity="0.91"/>
<rect x="191.2" y="120.3" width="2.6" height="1.8" fill="#dfe8ff" opacity="0.89"/>
<rect x="194.2" y="120.3" width="2.6" height="1.8" fill="#dfe8ff" opacity="0.99"/>
<rect x="197.2" y="120.3" width="2.6" height="1.8" fill="#ffffff" opacity="0.92"/>
<rect x="200.2" y="120.3" width="2.6" height="1.8" fill="#ffffff" opacity="0.75"/>
<rect x="203.2" y="120.3" width="2.6" height="1.8" fill="#dfe8ff" opacity="0.90"/>
<rect x="182.2" y="124.1" width="2.6" height="1.8" fill="#dfe8ff" opacity="0.92"/>
<rect x="185.2" y="124.1" width="2.6" height="1.8" fill="#f5ead0" opacity="0.85"/>
<rect x="188.2" y="124.1" width="2.6" height="1.8" fill="#f5ead0" opacity="0.88"/>
<rect x="191.2" y="124.1" width="2.6" height="1.8" fill="#f5ead0" opacity="0.96"/>
<rect x="194.2" y="124.1" width="2.6" height="1.8" fill="#f5ead0" opacity="0.80"/>
<rect x="197.2" y="124.1" width="2.6" height="1.8" fill="#f5ead0" opacity="0.94"/>
<rect x="200.2" y="124.1" width="2.6" height="1.8" fill="#dfe8ff" opacity="0.76"/>
<rect x="203.2" y="124.1" width="2.6" height="1.8" fill="#dfe8ff" opacity="0.82"/>
<rect x="182.2" y="127.9" width="2.6" height="1.8" fill="#ffffff" opacity="0.96"/>
<rect x="185.2" y="127.9" width="2.6" height="1.8" fill="#ffffff" opacity="0.86"/>
<rect x="188.2" y="127.9" width="2.6" height="1.8" fill="#dfe8ff" opacity="0.85"/>
<rect x="191.2" y="127.9" width="2.6" height="1.8" fill="#dfe8ff" opacity="0.85"/>
<rect x="194.2" y="127.9" width="2.6" height="1.8" fill="#ffffff" opacity="0.79"/>
<rect x="197.2" y="127.9" width="2.6" height="1.8" fill="#f5ead0" opacity="0.91"/>
<rect x="203.2" y="127.9" width="2.6" height="1.8" fill="#dfe8ff" opacity="0.88"/>
<rect x="182.2" y="131.7" width="2.6" height="1.8" fill="#ffffff" opacity="0.76"/>
<rect x="185.2" y="131.7" width="2.6" height="1.8" fill="#dfe8ff" opacity="0.96"/>
<rect x="188.2" y="131.7" width="2.6" height="1.8" fill="#f5ead0" opacity="0.94"/>
<rect x="194.2" y="131.7" width="2.6" height="1.8" fill="#f5ead0" opacity="0.84"/>
<rect x="197.2" y="131.7" width="2.6" height="1.8" fill="#f5ead0" opacity="0.93"/>
<rect x="200.2" y="131.7" width="2.6" height="1.8" fill="#dfe8ff" opacity="0.85"/>
<rect x="203.2" y="131.7" width="2.6" height="1.8" fill="#ffffff" opacity="0.97"/>
<rect x="182.2" y="135.5" width="2.6" height="1.8" fill="#f5ead0" opacity="0.76"/>
<rect x="185.2" y="135.5" width="2.6" height="1.8" fill="#dfe8ff" opacity="0.89"/>
<rect x="188.2" y="135.5" width="2.6" height="1.8" fill="#f5ead0" opacity="0.87"/>
<rect x="191.2" y="135.5" width="2.6" height="1.8" fill="#ffffff" opacity="0.84"/>
<rect x="194.2" y="135.5" width="2.6" height="1.8" fill="#f5ead0" opacity="0.91"/>
<rect x="197.2" y="135.5" width="2.6" height="1.8" fill="#ffffff" opacity="0.84"/>
<rect x="200.2" y="135.5" width="2.6" height="1.8" fill="#f5ead0" opacity="0.98"/>
<rect x="182.2" y="139.3" width="2.6" height="1.8" fill="#f5ead0" opacity="0.98"/>
<rect x="185.2" y="139.3" width="2.6" height="1.8" fill="#ffffff" opacity="0.77"/>
<rect x="188.2" y="139.3" width="2.6" height="1.8" fill="#dfe8ff" opacity="0.89"/>
<rect x="194.2" y="139.3" width="2.6" height="1.8" fill="#f5ead0" opacity="0.83"/>
<rect x="197.2" y="139.3" width="2.6" height="1.8" fill="#dfe8ff" opacity="0.98"/>
<rect x="200.2" y="139.3" width="2.6" height="1.8" fill="#ffffff" opacity="0.94"/>
<rect x="182.2" y="143.1" width="2.6" height="1.8" fill="#f5ead0" opacity="0.94"/>
<rect x="185.2" y="143.1" width="2.6" height="1.8" fill="#f5ead0" opacity="0.99"/>
<rect x="188.2" y="143.1" width="2.6" height="1.8" fill="#dfe8ff" opacity="0.98"/>
<rect x="194.2" y="143.1" width="2.6" height="1.8" fill="#dfe8ff" opacity="0.77"/>
<rect x="197.2" y="143.1" width="2.6" height="1.8" fill="#ffffff" opacity="0.77"/>
<rect x="200.2" y="143.1" width="2.6" height="1.8" fill="#dfe8ff" opacity="0.85"/>
<rect x="203.2" y="143.1" width="2.6" height="1.8" fill="#f5ead0" opacity="0.82"/>
<rect x="182.2" y="146.9" width="2.6" height="1.8" fill="#dfe8ff" opacity="0.86"/>
<rect x="185.2" y="146.9" width="2.6" height="1.8" fill="#dfe8ff" opacity="0.91"/>
<rect x="188.2" y="146.9" width="2.6" height="1.8" fill="#ffffff" opacity="0.85"/>
<rect x="191.2" y="146.9" width="2.6" height="1.8" fill="#f5ead0" opacity="0.77"/>
<rect x="194.2" y="146.9" width="2.6" height="1.8" fill="#f5ead0" opacity="0.98"/>
<rect x="200.2" y="146.9" width="2.6" height="1.8" fill="#f5ead0" opacity="0.81"/>
<rect x="203.2" y="146.9" width="2.6" height="1.8" fill="#f5ead0" opacity="0.86"/>
<rect x="182.2" y="150.7" width="2.6" height="1.8" fill="#ffffff" opacity="0.90"/>
<rect x="185.2" y="150.7" width="2.6" height="1.8" fill="#f5ead0" opacity="0.99"/>
<rect x="188.2" y="150.7" width="2.6" height="1.8" fill="#dfe8ff" opacity="0.94"/>
<rect x="191.2" y="150.7" width="2.6" height="1.8" fill="#f5ead0" opacity="0.89"/>
<rect x="194.2" y="150.7" width="2.6" height="1.8" fill="#dfe8ff" opacity="0.91"/>
<rect x="197.2" y="150.7" width="2.6" height="1.8" fill="#ffffff" opacity="0.77"/>
<rect x="200.2" y="150.7" width="2.6" height="1.8" fill="#ffffff" opacity="0.81"/>
<rect x="182.2" y="154.5" width="2.6" height="1.8" fill="#dfe8ff" opacity="1.00"/>
<rect x="185.2" y="154.5" width="2.6" height="1.8" fill="#ffffff" opacity="0.79"/>
<rect x="188.2" y="154.5" width="2.6" height="1.8" fill="#f5ead0" opacity="0.89"/>
<rect x="191.2" y="154.5" width="2.6" height="1.8" fill="#dfe8ff" opacity="0.78"/>
<rect x="197.2" y="154.5" width="2.6" height="1.8" fill="#f5ead0" opacity="0.76"/>
<rect x="200.2" y="154.5" width="2.6" height="1.8" fill="#dfe8ff" opacity="0.78"/>
<rect x="203.2" y="154.5" width="2.6" height="1.8" fill="#ffffff" opacity="0.76"/>
<rect x="182.2" y="158.3" width="2.6" height="1.8" fill="#ffffff" opacity="0.99"/>
<rect x="185.2" y="158.3" width="2.6" height="1.8" fill="#ffffff" opacity="0.96"/>
<rect x="188.2" y="158.3" width="2.6" height="1.8" fill="#dfe8ff" opacity="0.84"/>
<rect x="191.2" y="158.3" width="2.6" height="1.8" fill="#dfe8ff" opacity="0.79"/>
<rect x="194.2" y="158.3" width="2.6" height="1.8" fill="#dfe8ff" opacity="0.80"/>
<rect x="197.2" y="158.3" width="2.6" height="1.8" fill="#dfe8ff" opacity="0.76"/>
<rect x="200.2" y="158.3" width="2.6" height="1.8" fill="#ffffff" opacity="0.89"/>
<rect x="203.2" y="158.3" width="2.6" height="1.8" fill="#f5ead0" opacity="0.78"/>
<rect x="182.2" y="162.1" width="2.6" height="1.8" fill="#f5ead0" opacity="0.99"/>
<rect x="185.2" y="162.1" width="2.6" height="1.8" fill="#dfe8ff" opacity="0.96"/>
<rect x="191.2" y="162.1" width="2.6" height="1.8" fill="#f5ead0" opacity="0.97"/>
<rect x="194.2" y="162.1" width="2.6" height="1.8" fill="#f5ead0" opacity="0.76"/>
<rect x="200.2" y="162.1" width="2.6" height="1.8" fill="#ffffff" opacity="0.78"/>
<rect x="203.2" y="162.1" width="2.6" height="1.8" fill="#f5ead0" opacity="0.87"/>
<rect x="214" y="144" width="20" height="21" fill="#0b0a09"/>
<rect x="226.0" y="145.5" width="2.4" height="1.8" fill="#e8c080" opacity="0.84"/>
<rect x="215.2" y="149.7" width="2.4" height="1.8" fill="#ffffff" opacity="0.77"/>
<rect x="218.8" y="149.7" width="2.4" height="1.8" fill="#fff6dc" opacity="0.96"/>
<rect x="222.4" y="149.7" width="2.4" height="1.8" fill="#e8c080" opacity="0.94"/>
<rect x="226.0" y="149.7" width="2.4" height="1.8" fill="#f8e0b0" opacity="0.84"/>
<rect x="229.6" y="149.7" width="2.4" height="1.8" fill="#f8e0b0" opacity="0.97"/>
<rect x="215.2" y="153.9" width="2.4" height="1.8" fill="#f8e0b0" opacity="0.82"/>
<rect x="229.6" y="153.9" width="2.4" height="1.8" fill="#f8e0b0" opacity="0.86"/>
<rect x="218.8" y="158.1" width="2.4" height="1.8" fill="#e8c080" opacity="0.83"/>
<rect x="222.4" y="158.1" width="2.4" height="1.8" fill="#e8c080" opacity="0.98"/>
<rect x="226.0" y="158.1" width="2.4" height="1.8" fill="#f8e0b0" opacity="0.94"/>
<rect x="215.2" y="162.3" width="2.4" height="1.8" fill="#e8c080" opacity="0.85"/>
<rect x="226.0" y="162.3" width="2.4" height="1.8" fill="#ffffff" opacity="0.90"/>
<rect x="229.6" y="162.3" width="2.4" height="1.8" fill="#ffffff" opacity="0.87"/>
<rect x="258" y="102" width="29" height="63" fill="#0b0a09"/>
<rect x="259.2" y="103.5" width="2.4" height="1.8" fill="#e8c080" opacity="0.75"/>
<rect x="262.8" y="103.5" width="2.4" height="1.8" fill="#fff6dc" opacity="0.84"/>
<rect x="270.0" y="103.5" width="2.4" height="1.8" fill="#e8c080" opacity="0.79"/>
<rect x="273.6" y="103.5" width="2.4" height="1.8" fill="#e8c080" opacity="0.95"/>
<rect x="277.2" y="103.5" width="2.4" height="1.8" fill="#ffffff" opacity="0.92"/>
<rect x="284.4" y="103.5" width="2.4" height="1.8" fill="#e8c080" opacity="0.99"/>
<rect x="259.2" y="107.7" width="2.4" height="1.8" fill="#e8c080" opacity="0.82"/>
<rect x="273.6" y="107.7" width="2.4" height="1.8" fill="#f8e0b0" opacity="0.97"/>
<rect x="277.2" y="107.7" width="2.4" height="1.8" fill="#f8e0b0" opacity="0.93"/>
<rect x="284.4" y="107.7" width="2.4" height="1.8" fill="#e8c080" opacity="0.88"/>
<rect x="259.2" y="111.9" width="2.4" height="1.8" fill="#ffffff" opacity="0.90"/>
<rect x="266.4" y="111.9" width="2.4" height="1.8" fill="#e8c080" opacity="0.94"/>
<rect x="270.0" y="111.9" width="2.4" height="1.8" fill="#e8c080" opacity="0.78"/>
<rect x="284.4" y="111.9" width="2.4" height="1.8" fill="#ffffff" opacity="0.75"/>
<rect x="259.2" y="116.1" width="2.4" height="1.8" fill="#f8e0b0" opacity="0.98"/>
<rect x="262.8" y="116.1" width="2.4" height="1.8" fill="#fff6dc" opacity="0.81"/>
<rect x="270.0" y="116.1" width="2.4" height="1.8" fill="#e8c080" opacity="0.86"/>
<rect x="280.8" y="116.1" width="2.4" height="1.8" fill="#e8c080" opacity="0.87"/>
<rect x="284.4" y="116.1" width="2.4" height="1.8" fill="#ffffff" opacity="0.97"/>
<rect x="262.8" y="120.3" width="2.4" height="1.8" fill="#f8e0b0" opacity="0.95"/>
<rect x="266.4" y="120.3" width="2.4" height="1.8" fill="#e8c080" opacity="0.83"/>
<rect x="270.0" y="120.3" width="2.4" height="1.8" fill="#e8c080" opacity="0.82"/>
<rect x="273.6" y="120.3" width="2.4" height="1.8" fill="#ffffff" opacity="0.98"/>
<rect x="277.2" y="120.3" width="2.4" height="1.8" fill="#f8e0b0" opacity="0.95"/>
<rect x="280.8" y="120.3" width="2.4" height="1.8" fill="#fff6dc" opacity="0.82"/>
<rect x="259.2" y="124.5" width="2.4" height="1.8" fill="#f8e0b0" opacity="0.82"/>
<rect x="262.8" y="124.5" width="2.4" height="1.8" fill="#fff6dc" opacity="0.96"/>
<rect x="266.4" y="124.5" width="2.4" height="1.8" fill="#f8e0b0" opacity="0.89"/>
<rect x="273.6" y="124.5" width="2.4" height="1.8" fill="#ffffff" opacity="0.77"/>
<rect x="280.8" y="124.5" width="2.4" height="1.8" fill="#ffffff" opacity="0.88"/>
<rect x="259.2" y="128.7" width="2.4" height="1.8" fill="#ffffff" opacity="0.93"/>
<rect x="266.4" y="128.7" width="2.4" height="1.8" fill="#f8e0b0" opacity="0.94"/>
<rect x="270.0" y="128.7" width="2.4" height="1.8" fill="#f8e0b0" opacity="0.85"/>
<rect x="262.8" y="132.9" width="2.4" height="1.8" fill="#fff6dc" opacity="0.80"/>
<rect x="270.0" y="132.9" width="2.4" height="1.8" fill="#f8e0b0" opacity="0.99"/>
<rect x="284.4" y="132.9" width="2.4" height="1.8" fill="#f8e0b0" opacity="0.75"/>
<rect x="262.8" y="137.1" width="2.4" height="1.8" fill="#f8e0b0" opacity="0.94"/>
<rect x="270.0" y="137.1" width="2.4" height="1.8" fill="#fff6dc" opacity="0.92"/>
<rect x="284.4" y="137.1" width="2.4" height="1.8" fill="#fff6dc" opacity="0.90"/>
<rect x="262.8" y="141.3" width="2.4" height="1.8" fill="#fff6dc" opacity="0.84"/>
<rect x="273.6" y="141.3" width="2.4" height="1.8" fill="#f8e0b0" opacity="0.86"/>
<rect x="277.2" y="141.3" width="2.4" height="1.8" fill="#f8e0b0" opacity="0.84"/>
<rect x="284.4" y="141.3" width="2.4" height="1.8" fill="#fff6dc" opacity="1.00"/>
<rect x="262.8" y="145.5" width="2.4" height="1.8" fill="#fff6dc" opacity="0.87"/>
<rect x="266.4" y="145.5" width="2.4" height="1.8" fill="#fff6dc" opacity="0.80"/>
<rect x="270.0" y="145.5" width="2.4" height="1.8" fill="#ffffff" opacity="0.94"/>
<rect x="277.2" y="145.5" width="2.4" height="1.8" fill="#e8c080" opacity="0.95"/>
<rect x="280.8" y="145.5" width="2.4" height="1.8" fill="#e8c080" opacity="0.86"/>
<rect x="284.4" y="145.5" width="2.4" height="1.8" fill="#f8e0b0" opacity="0.90"/>
<rect x="259.2" y="149.7" width="2.4" height="1.8" fill="#ffffff" opacity="1.00"/>
<rect x="262.8" y="149.7" width="2.4" height="1.8" fill="#f8e0b0" opacity="0.95"/>
<rect x="266.4" y="149.7" width="2.4" height="1.8" fill="#f8e0b0" opacity="0.84"/>
<rect x="270.0" y="149.7" width="2.4" height="1.8" fill="#e8c080" opacity="0.84"/>
<rect x="273.6" y="149.7" width="2.4" height="1.8" fill="#fff6dc" opacity="0.97"/>
<rect x="277.2" y="149.7" width="2.4" height="1.8" fill="#f8e0b0" opacity="0.81"/>
<rect x="284.4" y="149.7" width="2.4" height="1.8" fill="#e8c080" opacity="0.99"/>
<rect x="266.4" y="153.9" width="2.4" height="1.8" fill="#e8c080" opacity="0.98"/>
<rect x="270.0" y="153.9" width="2.4" height="1.8" fill="#e8c080" opacity="0.85"/>
<rect x="273.6" y="153.9" width="2.4" height="1.8" fill="#ffffff" opacity="0.79"/>
<rect x="277.2" y="153.9" width="2.4" height="1.8" fill="#e8c080" opacity="0.87"/>
<rect x="284.4" y="153.9" width="2.4" height="1.8" fill="#fff6dc" opacity="0.97"/>
<rect x="259.2" y="158.1" width="2.4" height="1.8" fill="#fff6dc" opacity="0.88"/>
<rect x="266.4" y="158.1" width="2.4" height="1.8" fill="#f8e0b0" opacity="0.75"/>
<rect x="270.0" y="158.1" width="2.4" height="1.8" fill="#fff6dc" opacity="0.98"/>
<rect x="273.6" y="158.1" width="2.4" height="1.8" fill="#f8e0b0" opacity="0.83"/>
<rect x="280.8" y="162.3" width="2.4" height="1.8" fill="#f8e0b0" opacity="0.92"/>
<rect x="300" y="150" width="40" height="15" fill="#0b0a09"/>
<rect x="301.2" y="151.5" width="2.4" height="1.8" fill="#fff6dc" opacity="0.79"/>
<rect x="330.0" y="151.5" width="2.4" height="1.8" fill="#ffffff" opacity="0.81"/>
<rect x="333.6" y="151.5" width="2.4" height="1.8" fill="#f8e0b0" opacity="0.84"/>
<rect x="301.2" y="155.7" width="2.4" height="1.8" fill="#fff6dc" opacity="0.76"/>
<rect x="312.0" y="155.7" width="2.4" height="1.8" fill="#e8c080" opacity="0.96"/>
<rect x="315.6" y="155.7" width="2.4" height="1.8" fill="#fff6dc" opacity="0.78"/>
<rect x="322.8" y="155.7" width="2.4" height="1.8" fill="#e8c080" opacity="0.91"/>
<rect x="333.6" y="155.7" width="2.4" height="1.8" fill="#e8c080" opacity="0.80"/>
<rect x="304.8" y="159.9" width="2.4" height="1.8" fill="#e8c080" opacity="0.93"/>
<rect x="308.4" y="159.9" width="2.4" height="1.8" fill="#e8c080" opacity="0.98"/>
<rect x="312.0" y="159.9" width="2.4" height="1.8" fill="#fff6dc" opacity="0.99"/>
<rect x="330.0" y="159.9" width="2.4" height="1.8" fill="#fff6dc" opacity="0.97"/>
<rect x="392" y="198" width="320" height="32" fill="#0b0a09"/>
<rect x="393.2" y="199.5" width="2.4" height="1.8" fill="#ffe8c0" opacity="0.86"/>
<rect x="515.0" y="199.5" width="2.4" height="1.8" fill="#ffffff" opacity="0.77"/>
<rect x="531.8" y="199.5" width="2.4" height="1.8" fill="#d8b070" opacity="0.84"/>
<rect x="540.2" y="199.5" width="2.4" height="1.8" fill="#ffe8c0" opacity="0.76"/>
<rect x="565.4" y="199.5" width="2.4" height="1.8" fill="#ffe8c0" opacity="0.98"/>
<rect x="599.0" y="199.5" width="2.4" height="1.8" fill="#ff9050" opacity="0.98"/>
<rect x="603.2" y="199.5" width="2.4" height="1.8" fill="#ffe8c0" opacity="0.76"/>
<rect x="611.6" y="199.5" width="2.4" height="1.8" fill="#ffffff" opacity="0.85"/>
<rect x="620.0" y="199.5" width="2.4" height="1.8" fill="#ffffff" opacity="0.84"/>
<rect x="641.0" y="199.5" width="2.4" height="1.8" fill="#ffe8c0" opacity="0.78"/>
<rect x="653.6" y="199.5" width="2.4" height="1.8" fill="#ff9050" opacity="0.84"/>
<rect x="674.6" y="199.5" width="2.4" height="1.8" fill="#ff9050" opacity="0.97"/>
<rect x="426.8" y="204.1" width="2.4" height="1.8" fill="#ffffff" opacity="0.76"/>
<rect x="435.2" y="204.1" width="2.4" height="1.8" fill="#d8b070" opacity="0.91"/>
<rect x="443.6" y="204.1" width="2.4" height="1.8" fill="#d8b070" opacity="0.89"/>
<rect x="477.2" y="204.1" width="2.4" height="1.8" fill="#ff9050" opacity="0.79"/>
<rect x="485.6" y="204.1" width="2.4" height="1.8" fill="#ffffff" opacity="0.95"/>
<rect x="527.6" y="204.1" width="2.4" height="1.8" fill="#f0d8a8" opacity="0.79"/>
<rect x="561.2" y="204.1" width="2.4" height="1.8" fill="#ffe8c0" opacity="0.94"/>
<rect x="603.2" y="204.1" width="2.4" height="1.8" fill="#ffe8c0" opacity="0.76"/>
<rect x="620.0" y="204.1" width="2.4" height="1.8" fill="#ffffff" opacity="1.00"/>
<rect x="628.4" y="204.1" width="2.4" height="1.8" fill="#f0d8a8" opacity="0.76"/>
<rect x="645.2" y="204.1" width="2.4" height="1.8" fill="#f0d8a8" opacity="0.85"/>
<rect x="670.4" y="204.1" width="2.4" height="1.8" fill="#f0d8a8" opacity="0.90"/>
<rect x="695.6" y="204.1" width="2.4" height="1.8" fill="#d8b070" opacity="0.92"/>
<rect x="502.4" y="208.7" width="2.4" height="1.8" fill="#ffe8c0" opacity="0.96"/>
<rect x="506.6" y="208.7" width="2.4" height="1.8" fill="#d8b070" opacity="0.96"/>
<rect x="531.8" y="208.7" width="2.4" height="1.8" fill="#ff9050" opacity="0.79"/>
<rect x="569.6" y="208.7" width="2.4" height="1.8" fill="#ffffff" opacity="1.00"/>
<rect x="599.0" y="208.7" width="2.4" height="1.8" fill="#ffffff" opacity="0.92"/>
<rect x="615.8" y="208.7" width="2.4" height="1.8" fill="#ffe8c0" opacity="0.78"/>
<rect x="624.2" y="208.7" width="2.4" height="1.8" fill="#ffe8c0" opacity="0.98"/>
<rect x="636.8" y="208.7" width="2.4" height="1.8" fill="#ffffff" opacity="0.79"/>
<rect x="649.4" y="208.7" width="2.4" height="1.8" fill="#ffffff" opacity="0.98"/>
<rect x="666.2" y="208.7" width="2.4" height="1.8" fill="#d8b070" opacity="0.82"/>
<rect x="670.4" y="208.7" width="2.4" height="1.8" fill="#ff9050" opacity="0.79"/>
<rect x="691.4" y="208.7" width="2.4" height="1.8" fill="#ffffff" opacity="0.82"/>
<rect x="393.2" y="213.3" width="2.4" height="1.8" fill="#ffffff" opacity="0.94"/>
<rect x="397.4" y="213.3" width="2.4" height="1.8" fill="#d8b070" opacity="0.88"/>
<rect x="452.0" y="213.3" width="2.4" height="1.8" fill="#f0d8a8" opacity="0.95"/>
<rect x="515.0" y="213.3" width="2.4" height="1.8" fill="#f0d8a8" opacity="0.96"/>
<rect x="527.6" y="213.3" width="2.4" height="1.8" fill="#f0d8a8" opacity="0.77"/>
<rect x="531.8" y="213.3" width="2.4" height="1.8" fill="#ffffff" opacity="0.83"/>
<rect x="552.8" y="213.3" width="2.4" height="1.8" fill="#d8b070" opacity="0.84"/>
<rect x="620.0" y="213.3" width="2.4" height="1.8" fill="#f0d8a8" opacity="0.75"/>
<rect x="636.8" y="213.3" width="2.4" height="1.8" fill="#d8b070" opacity="0.97"/>
<rect x="641.0" y="213.3" width="2.4" height="1.8" fill="#ffe8c0" opacity="0.87"/>
<rect x="431.0" y="217.9" width="2.4" height="1.8" fill="#ffe8c0" opacity="0.84"/>
<rect x="502.4" y="217.9" width="2.4" height="1.8" fill="#ffe8c0" opacity="0.84"/>
<rect x="531.8" y="217.9" width="2.4" height="1.8" fill="#ff9050" opacity="0.76"/>
<rect x="536.0" y="217.9" width="2.4" height="1.8" fill="#ffffff" opacity="0.90"/>
<rect x="552.8" y="217.9" width="2.4" height="1.8" fill="#d8b070" opacity="0.99"/>
<rect x="565.4" y="217.9" width="2.4" height="1.8" fill="#ffe8c0" opacity="0.89"/>
<rect x="573.8" y="217.9" width="2.4" height="1.8" fill="#d8b070" opacity="0.96"/>
<rect x="590.6" y="217.9" width="2.4" height="1.8" fill="#ffe8c0" opacity="0.86"/>
<rect x="594.8" y="217.9" width="2.4" height="1.8" fill="#f0d8a8" opacity="0.85"/>
<rect x="615.8" y="217.9" width="2.4" height="1.8" fill="#ffffff" opacity="0.89"/>
<rect x="624.2" y="217.9" width="2.4" height="1.8" fill="#d8b070" opacity="0.79"/>
<rect x="393.2" y="222.5" width="2.4" height="1.8" fill="#f0d8a8" opacity="0.87"/>
<rect x="418.4" y="222.5" width="2.4" height="1.8" fill="#ff9050" opacity="0.77"/>
<rect x="422.6" y="222.5" width="2.4" height="1.8" fill="#d8b070" opacity="0.88"/>
<rect x="452.0" y="222.5" width="2.4" height="1.8" fill="#ff9050" opacity="0.80"/>
<rect x="464.6" y="222.5" width="2.4" height="1.8" fill="#f0d8a8" opacity="0.80"/>
<rect x="557.0" y="222.5" width="2.4" height="1.8" fill="#ff9050" opacity="0.94"/>
<rect x="586.4" y="222.5" width="2.4" height="1.8" fill="#ffe8c0" opacity="0.81"/>
<rect x="662.0" y="222.5" width="2.4" height="1.8" fill="#f0d8a8" opacity="0.75"/>
<rect x="393.2" y="227.1" width="2.4" height="1.8" fill="#ffe8c0" opacity="0.84"/>
<rect x="414.2" y="227.1" width="2.4" height="1.8" fill="#d8b070" opacity="0.98"/>
<rect x="431.0" y="227.1" width="2.4" height="1.8" fill="#f0d8a8" opacity="0.78"/>
<rect x="435.2" y="227.1" width="2.4" height="1.8" fill="#f0d8a8" opacity="0.81"/>
<rect x="468.8" y="227.1" width="2.4" height="1.8" fill="#f0d8a8" opacity="0.92"/>
<rect x="485.6" y="227.1" width="2.4" height="1.8" fill="#d8b070" opacity="0.95"/>
<rect x="510.8" y="227.1" width="2.4" height="1.8" fill="#ff9050" opacity="0.83"/>
<rect x="582.2" y="227.1" width="2.4" height="1.8" fill="#ff9050" opacity="0.81"/>
<rect x="628.4" y="227.1" width="2.4" height="1.8" fill="#ff9050" opacity="1.00"/>
<rect x="645.2" y="227.1" width="2.4" height="1.8" fill="#ff9050" opacity="0.88"/>
<rect x="704.0" y="227.1" width="2.4" height="1.8" fill="#d8b070" opacity="0.80"/>
<rect x="392" y="230" width="320" height="32" fill="#0b0a09"/>
<rect x="397.4" y="231.5" width="2.4" height="1.8" fill="#ff9050" opacity="0.89"/>
<rect x="414.2" y="231.5" width="2.4" height="1.8" fill="#ff9050" opacity="0.92"/>
<rect x="418.4" y="231.5" width="2.4" height="1.8" fill="#ff9050" opacity="0.89"/>
<rect x="426.8" y="231.5" width="2.4" height="1.8" fill="#ff9050" opacity="0.91"/>
<rect x="447.8" y="231.5" width="2.4" height="1.8" fill="#ff9050" opacity="0.89"/>
<rect x="477.2" y="231.5" width="2.4" height="1.8" fill="#f0d8a8" opacity="0.76"/>
<rect x="485.6" y="231.5" width="2.4" height="1.8" fill="#d8b070" opacity="0.77"/>
<rect x="515.0" y="231.5" width="2.4" height="1.8" fill="#ffe8c0" opacity="0.88"/>
<rect x="527.6" y="231.5" width="2.4" height="1.8" fill="#f0d8a8" opacity="0.99"/>
<rect x="531.8" y="231.5" width="2.4" height="1.8" fill="#ffe8c0" opacity="0.87"/>
<rect x="544.4" y="231.5" width="2.4" height="1.8" fill="#ff9050" opacity="0.91"/>
<rect x="548.6" y="231.5" width="2.4" height="1.8" fill="#ffe8c0" opacity="0.97"/>
<rect x="552.8" y="231.5" width="2.4" height="1.8" fill="#ff9050" opacity="0.81"/>
<rect x="561.2" y="231.5" width="2.4" height="1.8" fill="#ff9050" opacity="0.84"/>
<rect x="578.0" y="231.5" width="2.4" height="1.8" fill="#ffe8c0" opacity="0.91"/>
<rect x="586.4" y="231.5" width="2.4" height="1.8" fill="#ffffff" opacity="0.99"/>
<rect x="594.8" y="231.5" width="2.4" height="1.8" fill="#ffffff" opacity="0.91"/>
<rect x="607.4" y="231.5" width="2.4" height="1.8" fill="#d8b070" opacity="0.76"/>
<rect x="624.2" y="231.5" width="2.4" height="1.8" fill="#ffffff" opacity="0.99"/>
<rect x="636.8" y="231.5" width="2.4" height="1.8" fill="#f0d8a8" opacity="0.78"/>
<rect x="649.4" y="231.5" width="2.4" height="1.8" fill="#ffffff" opacity="0.91"/>
<rect x="666.2" y="231.5" width="2.4" height="1.8" fill="#d8b070" opacity="0.82"/>
<rect x="670.4" y="231.5" width="2.4" height="1.8" fill="#f0d8a8" opacity="0.80"/>
<rect x="678.8" y="231.5" width="2.4" height="1.8" fill="#ffffff" opacity="0.86"/>
<rect x="683.0" y="231.5" width="2.4" height="1.8" fill="#ffe8c0" opacity="0.80"/>
<rect x="687.2" y="231.5" width="2.4" height="1.8" fill="#d8b070" opacity="0.77"/>
<rect x="699.8" y="231.5" width="2.4" height="1.8" fill="#ffe8c0" opacity="0.81"/>
<rect x="704.0" y="231.5" width="2.4" height="1.8" fill="#f0d8a8" opacity="0.77"/>
<rect x="414.2" y="236.1" width="2.4" height="1.8" fill="#ffffff" opacity="0.80"/>
<rect x="418.4" y="236.1" width="2.4" height="1.8" fill="#f0d8a8" opacity="0.89"/>
<rect x="431.0" y="236.1" width="2.4" height="1.8" fill="#f0d8a8" opacity="0.88"/>
<rect x="494.0" y="236.1" width="2.4" height="1.8" fill="#d8b070" opacity="0.86"/>
<rect x="498.2" y="236.1" width="2.4" height="1.8" fill="#f0d8a8" opacity="0.92"/>
<rect x="506.6" y="236.1" width="2.4" height="1.8" fill="#d8b070" opacity="0.83"/>
<rect x="510.8" y="236.1" width="2.4" height="1.8" fill="#ffffff" opacity="0.94"/>
<rect x="527.6" y="236.1" width="2.4" height="1.8" fill="#ffffff" opacity="0.97"/>
<rect x="531.8" y="236.1" width="2.4" height="1.8" fill="#ff9050" opacity="0.96"/>
<rect x="548.6" y="236.1" width="2.4" height="1.8" fill="#d8b070" opacity="0.97"/>
<rect x="557.0" y="236.1" width="2.4" height="1.8" fill="#ffe8c0" opacity="0.95"/>
<rect x="569.6" y="236.1" width="2.4" height="1.8" fill="#ffe8c0" opacity="0.96"/>
<rect x="586.4" y="236.1" width="2.4" height="1.8" fill="#ff9050" opacity="0.84"/>
<rect x="603.2" y="236.1" width="2.4" height="1.8" fill="#ff9050" opacity="0.81"/>
<rect x="607.4" y="236.1" width="2.4" height="1.8" fill="#ffffff" opacity="0.78"/>
<rect x="632.6" y="236.1" width="2.4" height="1.8" fill="#ff9050" opacity="0.75"/>
<rect x="657.8" y="236.1" width="2.4" height="1.8" fill="#ffffff" opacity="0.85"/>
<rect x="670.4" y="236.1" width="2.4" height="1.8" fill="#f0d8a8" opacity="0.89"/>
<rect x="691.4" y="236.1" width="2.4" height="1.8" fill="#d8b070" opacity="0.77"/>
<rect x="695.6" y="236.1" width="2.4" height="1.8" fill="#ffffff" opacity="0.81"/>
<rect x="699.8" y="236.1" width="2.4" height="1.8" fill="#d8b070" opacity="0.98"/>
<rect x="393.2" y="240.7" width="2.4" height="1.8" fill="#ffe8c0" opacity="0.79"/>
<rect x="397.4" y="240.7" width="2.4" height="1.8" fill="#f0d8a8" opacity="0.92"/>
<rect x="414.2" y="240.7" width="2.4" height="1.8" fill="#ffe8c0" opacity="0.94"/>
<rect x="431.0" y="240.7" width="2.4" height="1.8" fill="#ffffff" opacity="0.89"/>
<rect x="473.0" y="240.7" width="2.4" height="1.8" fill="#ffffff" opacity="0.93"/>
<rect x="485.6" y="240.7" width="2.4" height="1.8" fill="#ff9050" opacity="0.75"/>
<rect x="498.2" y="240.7" width="2.4" height="1.8" fill="#ffffff" opacity="0.82"/>
<rect x="502.4" y="240.7" width="2.4" height="1.8" fill="#d8b070" opacity="0.92"/>
<rect x="540.2" y="240.7" width="2.4" height="1.8" fill="#f0d8a8" opacity="0.85"/>
<rect x="548.6" y="240.7" width="2.4" height="1.8" fill="#ff9050" opacity="0.89"/>
<rect x="569.6" y="240.7" width="2.4" height="1.8" fill="#d8b070" opacity="0.90"/>
<rect x="607.4" y="240.7" width="2.4" height="1.8" fill="#f0d8a8" opacity="0.91"/>
<rect x="628.4" y="240.7" width="2.4" height="1.8" fill="#ff9050" opacity="0.77"/>
<rect x="657.8" y="240.7" width="2.4" height="1.8" fill="#d8b070" opacity="0.89"/>
<rect x="662.0" y="240.7" width="2.4" height="1.8" fill="#ffffff" opacity="1.00"/>
<rect x="683.0" y="240.7" width="2.4" height="1.8" fill="#ffffff" opacity="0.79"/>
<rect x="695.6" y="240.7" width="2.4" height="1.8" fill="#ffe8c0" opacity="0.84"/>
<rect x="699.8" y="240.7" width="2.4" height="1.8" fill="#d8b070" opacity="0.95"/>
<rect x="708.2" y="240.7" width="2.4" height="1.8" fill="#ff9050" opacity="0.82"/>
<rect x="397.4" y="245.3" width="2.4" height="1.8" fill="#ffe8c0" opacity="0.84"/>
<rect x="401.6" y="245.3" width="2.4" height="1.8" fill="#ffe8c0" opacity="0.78"/>
<rect x="414.2" y="245.3" width="2.4" height="1.8" fill="#f0d8a8" opacity="0.87"/>
<rect x="422.6" y="245.3" width="2.4" height="1.8" fill="#ff9050" opacity="0.94"/>
<rect x="426.8" y="245.3" width="2.4" height="1.8" fill="#f0d8a8" opacity="0.79"/>
<rect x="435.2" y="245.3" width="2.4" height="1.8" fill="#ffffff" opacity="0.97"/>
<rect x="439.4" y="245.3" width="2.4" height="1.8" fill="#d8b070" opacity="0.87"/>
<rect x="443.6" y="245.3" width="2.4" height="1.8" fill="#f0d8a8" opacity="0.95"/>
<rect x="460.4" y="245.3" width="2.4" height="1.8" fill="#ffe8c0" opacity="0.81"/>
<rect x="464.6" y="245.3" width="2.4" height="1.8" fill="#ffffff" opacity="0.93"/>
<rect x="477.2" y="245.3" width="2.4" height="1.8" fill="#d8b070" opacity="0.91"/>
<rect x="506.6" y="245.3" width="2.4" height="1.8" fill="#ffffff" opacity="0.83"/>
<rect x="515.0" y="245.3" width="2.4" height="1.8" fill="#ff9050" opacity="0.95"/>
<rect x="519.2" y="245.3" width="2.4" height="1.8" fill="#f0d8a8" opacity="0.80"/>
<rect x="548.6" y="245.3" width="2.4" height="1.8" fill="#ffffff" opacity="0.76"/>
<rect x="561.2" y="245.3" width="2.4" height="1.8" fill="#ff9050" opacity="0.81"/>
<rect x="565.4" y="245.3" width="2.4" height="1.8" fill="#ffffff" opacity="0.76"/>
<rect x="582.2" y="245.3" width="2.4" height="1.8" fill="#d8b070" opacity="0.92"/>
<rect x="607.4" y="245.3" width="2.4" height="1.8" fill="#ffe8c0" opacity="0.78"/>
<rect x="615.8" y="245.3" width="2.4" height="1.8" fill="#ff9050" opacity="0.92"/>
<rect x="620.0" y="245.3" width="2.4" height="1.8" fill="#ffffff" opacity="0.90"/>
<rect x="624.2" y="245.3" width="2.4" height="1.8" fill="#d8b070" opacity="0.78"/>
<rect x="645.2" y="245.3" width="2.4" height="1.8" fill="#ffffff" opacity="0.89"/>
<rect x="657.8" y="245.3" width="2.4" height="1.8" fill="#ffffff" opacity="0.86"/>
<rect x="662.0" y="245.3" width="2.4" height="1.8" fill="#f0d8a8" opacity="0.97"/>
<rect x="687.2" y="245.3" width="2.4" height="1.8" fill="#ff9050" opacity="0.94"/>
<rect x="691.4" y="245.3" width="2.4" height="1.8" fill="#ff9050" opacity="0.86"/>
<rect x="695.6" y="245.3" width="2.4" height="1.8" fill="#ffffff" opacity="0.83"/>
<rect x="699.8" y="245.3" width="2.4" height="1.8" fill="#f0d8a8" opacity="0.84"/>
<rect x="405.8" y="249.9" width="2.4" height="1.8" fill="#ffe8c0" opacity="0.86"/>
<rect x="426.8" y="249.9" width="2.4" height="1.8" fill="#ffe8c0" opacity="0.79"/>
<rect x="431.0" y="249.9" width="2.4" height="1.8" fill="#ff9050" opacity="0.81"/>
<rect x="439.4" y="249.9" width="2.4" height="1.8" fill="#d8b070" opacity="0.94"/>
<rect x="468.8" y="249.9" width="2.4" height="1.8" fill="#ff9050" opacity="0.81"/>
<rect x="473.0" y="249.9" width="2.4" height="1.8" fill="#f0d8a8" opacity="0.95"/>
<rect x="477.2" y="249.9" width="2.4" height="1.8" fill="#d8b070" opacity="0.84"/>
<rect x="481.4" y="249.9" width="2.4" height="1.8" fill="#ffe8c0" opacity="0.77"/>
<rect x="494.0" y="249.9" width="2.4" height="1.8" fill="#ff9050" opacity="0.95"/>
<rect x="510.8" y="249.9" width="2.4" height="1.8" fill="#d8b070" opacity="0.90"/>
<rect x="523.4" y="249.9" width="2.4" height="1.8" fill="#ff9050" opacity="0.96"/>
<rect x="527.6" y="249.9" width="2.4" height="1.8" fill="#f0d8a8" opacity="0.97"/>
<rect x="531.8" y="249.9" width="2.4" height="1.8" fill="#ff9050" opacity="0.85"/>
<rect x="536.0" y="249.9" width="2.4" height="1.8" fill="#f0d8a8" opacity="0.87"/>
<rect x="540.2" y="249.9" width="2.4" height="1.8" fill="#ffe8c0" opacity="0.84"/>
<rect x="565.4" y="249.9" width="2.4" height="1.8" fill="#ffffff" opacity="0.94"/>
<rect x="573.8" y="249.9" width="2.4" height="1.8" fill="#d8b070" opacity="0.79"/>
<rect x="611.6" y="249.9" width="2.4" height="1.8" fill="#d8b070" opacity="0.91"/>
<rect x="620.0" y="249.9" width="2.4" height="1.8" fill="#ffffff" opacity="0.76"/>
<rect x="628.4" y="249.9" width="2.4" height="1.8" fill="#ff9050" opacity="0.95"/>
<rect x="645.2" y="249.9" width="2.4" height="1.8" fill="#d8b070" opacity="0.78"/>
<rect x="657.8" y="249.9" width="2.4" height="1.8" fill="#ff9050" opacity="0.96"/>
<rect x="666.2" y="249.9" width="2.4" height="1.8" fill="#ff9050" opacity="0.87"/>
<rect x="678.8" y="249.9" width="2.4" height="1.8" fill="#ffe8c0" opacity="0.93"/>
<rect x="704.0" y="249.9" width="2.4" height="1.8" fill="#f0d8a8" opacity="0.96"/>
<rect x="708.2" y="249.9" width="2.4" height="1.8" fill="#ffe8c0" opacity="0.99"/>
<rect x="393.2" y="254.5" width="2.4" height="1.8" fill="#f0d8a8" opacity="0.89"/>
<rect x="410.0" y="254.5" width="2.4" height="1.8" fill="#ff9050" opacity="0.82"/>
<rect x="418.4" y="254.5" width="2.4" height="1.8" fill="#d8b070" opacity="0.84"/>
<rect x="422.6" y="254.5" width="2.4" height="1.8" fill="#ffffff" opacity="0.96"/>
<rect x="435.2" y="254.5" width="2.4" height="1.8" fill="#ff9050" opacity="0.87"/>
<rect x="443.6" y="254.5" width="2.4" height="1.8" fill="#ffffff" opacity="0.82"/>
<rect x="447.8" y="254.5" width="2.4" height="1.8" fill="#d8b070" opacity="0.75"/>
<rect x="477.2" y="254.5" width="2.4" height="1.8" fill="#ffffff" opacity="0.95"/>
<rect x="489.8" y="254.5" width="2.4" height="1.8" fill="#d8b070" opacity="0.78"/>
<rect x="498.2" y="254.5" width="2.4" height="1.8" fill="#ff9050" opacity="0.88"/>
<rect x="506.6" y="254.5" width="2.4" height="1.8" fill="#ffffff" opacity="0.89"/>
<rect x="519.2" y="254.5" width="2.4" height="1.8" fill="#d8b070" opacity="0.98"/>
<rect x="523.4" y="254.5" width="2.4" height="1.8" fill="#ffe8c0" opacity="0.80"/>
<rect x="552.8" y="254.5" width="2.4" height="1.8" fill="#ffffff" opacity="0.88"/>
<rect x="569.6" y="254.5" width="2.4" height="1.8" fill="#d8b070" opacity="0.89"/>
<rect x="573.8" y="254.5" width="2.4" height="1.8" fill="#d8b070" opacity="0.85"/>
<rect x="578.0" y="254.5" width="2.4" height="1.8" fill="#ffe8c0" opacity="0.91"/>
<rect x="607.4" y="254.5" width="2.4" height="1.8" fill="#ffe8c0" opacity="0.94"/>
<rect x="620.0" y="254.5" width="2.4" height="1.8" fill="#f0d8a8" opacity="0.92"/>
<rect x="624.2" y="254.5" width="2.4" height="1.8" fill="#ff9050" opacity="0.85"/>
<rect x="628.4" y="254.5" width="2.4" height="1.8" fill="#d8b070" opacity="0.79"/>
<rect x="645.2" y="254.5" width="2.4" height="1.8" fill="#d8b070" opacity="0.94"/>
<rect x="653.6" y="254.5" width="2.4" height="1.8" fill="#d8b070" opacity="0.78"/>
<rect x="666.2" y="254.5" width="2.4" height="1.8" fill="#ffffff" opacity="0.81"/>
<rect x="670.4" y="254.5" width="2.4" height="1.8" fill="#ffe8c0" opacity="0.97"/>
<rect x="678.8" y="254.5" width="2.4" height="1.8" fill="#ff9050" opacity="0.83"/>
<rect x="683.0" y="254.5" width="2.4" height="1.8" fill="#d8b070" opacity="0.96"/>
<rect x="699.8" y="254.5" width="2.4" height="1.8" fill="#f0d8a8" opacity="0.96"/>
<rect x="704.0" y="254.5" width="2.4" height="1.8" fill="#f0d8a8" opacity="0.88"/>
<rect x="397.4" y="259.1" width="2.4" height="1.8" fill="#d8b070" opacity="0.96"/>
<rect x="401.6" y="259.1" width="2.4" height="1.8" fill="#d8b070" opacity="0.96"/>
<rect x="414.2" y="259.1" width="2.4" height="1.8" fill="#ffe8c0" opacity="1.00"/>
<rect x="422.6" y="259.1" width="2.4" height="1.8" fill="#ffe8c0" opacity="0.98"/>
<rect x="443.6" y="259.1" width="2.4" height="1.8" fill="#ff9050" opacity="0.80"/>
<rect x="456.2" y="259.1" width="2.4" height="1.8" fill="#d8b070" opacity="0.82"/>
<rect x="460.4" y="259.1" width="2.4" height="1.8" fill="#d8b070" opacity="0.87"/>
<rect x="489.8" y="259.1" width="2.4" height="1.8" fill="#ffffff" opacity="0.90"/>
<rect x="519.2" y="259.1" width="2.4" height="1.8" fill="#ffe8c0" opacity="0.80"/>
<rect x="536.0" y="259.1" width="2.4" height="1.8" fill="#d8b070" opacity="0.93"/>
<rect x="548.6" y="259.1" width="2.4" height="1.8" fill="#d8b070" opacity="0.89"/>
<rect x="552.8" y="259.1" width="2.4" height="1.8" fill="#ff9050" opacity="0.90"/>
<rect x="573.8" y="259.1" width="2.4" height="1.8" fill="#d8b070" opacity="0.80"/>
<rect x="582.2" y="259.1" width="2.4" height="1.8" fill="#ff9050" opacity="0.80"/>
<rect x="603.2" y="259.1" width="2.4" height="1.8" fill="#d8b070" opacity="0.99"/>
<rect x="607.4" y="259.1" width="2.4" height="1.8" fill="#d8b070" opacity="0.79"/>
<rect x="620.0" y="259.1" width="2.4" height="1.8" fill="#d8b070" opacity="0.88"/>
<rect x="649.4" y="259.1" width="2.4" height="1.8" fill="#f0d8a8" opacity="0.96"/>
<rect x="674.6" y="259.1" width="2.4" height="1.8" fill="#ffffff" opacity="0.82"/>
<rect x="678.8" y="259.1" width="2.4" height="1.8" fill="#d8b070" opacity="1.00"/>
<rect x="687.2" y="259.1" width="2.4" height="1.8" fill="#f0d8a8" opacity="0.86"/>
<rect x="691.4" y="259.1" width="2.4" height="1.8" fill="#ffe8c0" opacity="0.86"/>
<rect x="708.2" y="259.1" width="2.4" height="1.8" fill="#f0d8a8" opacity="0.84"/>
<rect x="407" y="130" width="27" height="68" fill="#0b0a09"/>
<rect x="408.2" y="131.5" width="3" height="1.8" fill="#ffffff" opacity="0.75"/>
<rect x="411.7" y="131.5" width="3" height="1.8" fill="#f0e8d8" opacity="0.93"/>
<rect x="418.7" y="131.5" width="3" height="1.8" fill="#f0e8d8" opacity="0.80"/>
<rect x="429.2" y="131.5" width="3" height="1.8" fill="#f0e8d8" opacity="0.94"/>
<rect x="432.7" y="131.5" width="3" height="1.8" fill="#f0e8d8" opacity="0.78"/>
<rect x="408.2" y="136.0" width="3" height="1.8" fill="#ffffff" opacity="0.88"/>
<rect x="415.2" y="136.0" width="3" height="1.8" fill="#f0e8d8" opacity="0.87"/>
<rect x="432.7" y="136.0" width="3" height="1.8" fill="#ffffff" opacity="0.94"/>
<rect x="408.2" y="140.5" width="3" height="1.8" fill="#ffffff" opacity="0.75"/>
<rect x="418.7" y="140.5" width="3" height="1.8" fill="#f0e8d8" opacity="0.89"/>
<rect x="422.2" y="140.5" width="3" height="1.8" fill="#ffffff" opacity="1.00"/>
<rect x="429.2" y="140.5" width="3" height="1.8" fill="#ffffff" opacity="0.82"/>
<rect x="432.7" y="140.5" width="3" height="1.8" fill="#f0e8d8" opacity="0.80"/>
<rect x="411.7" y="145.0" width="3" height="1.8" fill="#f0e8d8" opacity="0.90"/>
<rect x="415.2" y="145.0" width="3" height="1.8" fill="#ffffff" opacity="0.75"/>
<rect x="429.2" y="145.0" width="3" height="1.8" fill="#f0e8d8" opacity="0.95"/>
<rect x="432.7" y="145.0" width="3" height="1.8" fill="#ffffff" opacity="0.97"/>
<rect x="415.2" y="149.5" width="3" height="1.8" fill="#ffffff" opacity="0.80"/>
<rect x="418.7" y="149.5" width="3" height="1.8" fill="#f0e8d8" opacity="0.79"/>
<rect x="422.2" y="149.5" width="3" height="1.8" fill="#f0e8d8" opacity="0.79"/>
<rect x="425.7" y="149.5" width="3" height="1.8" fill="#ffffff" opacity="0.94"/>
<rect x="432.7" y="149.5" width="3" height="1.8" fill="#ffffff" opacity="0.87"/>
<rect x="408.2" y="154.0" width="3" height="1.8" fill="#f0e8d8" opacity="0.99"/>
<rect x="415.2" y="154.0" width="3" height="1.8" fill="#ffffff" opacity="0.98"/>
<rect x="418.7" y="154.0" width="3" height="1.8" fill="#ffffff" opacity="0.89"/>
<rect x="429.2" y="154.0" width="3" height="1.8" fill="#f0e8d8" opacity="0.92"/>
<rect x="408.2" y="163.0" width="3" height="1.8" fill="#f0e8d8" opacity="0.76"/>
<rect x="411.7" y="163.0" width="3" height="1.8" fill="#f0e8d8" opacity="0.89"/>
<rect x="418.7" y="163.0" width="3" height="1.8" fill="#ffffff" opacity="0.92"/>
<rect x="429.2" y="163.0" width="3" height="1.8" fill="#ffffff" opacity="0.99"/>
<rect x="411.7" y="167.5" width="3" height="1.8" fill="#f0e8d8" opacity="0.86"/>
<rect x="415.2" y="167.5" width="3" height="1.8" fill="#f0e8d8" opacity="0.82"/>
<rect x="418.7" y="167.5" width="3" height="1.8" fill="#ffffff" opacity="0.95"/>
<rect x="432.7" y="167.5" width="3" height="1.8" fill="#ffffff" opacity="0.99"/>
<rect x="408.2" y="172.0" width="3" height="1.8" fill="#f0e8d8" opacity="0.84"/>
<rect x="411.7" y="172.0" width="3" height="1.8" fill="#ffffff" opacity="0.86"/>
<rect x="415.2" y="172.0" width="3" height="1.8" fill="#f0e8d8" opacity="0.87"/>
<rect x="422.2" y="172.0" width="3" height="1.8" fill="#ffffff" opacity="0.82"/>
<rect x="429.2" y="172.0" width="3" height="1.8" fill="#f0e8d8" opacity="0.95"/>
<rect x="432.7" y="172.0" width="3" height="1.8" fill="#ffffff" opacity="0.86"/>
<rect x="418.7" y="176.5" width="3" height="1.8" fill="#f0e8d8" opacity="0.93"/>
<rect x="425.7" y="176.5" width="3" height="1.8" fill="#ffffff" opacity="0.99"/>
<rect x="429.2" y="176.5" width="3" height="1.8" fill="#ffffff" opacity="0.81"/>
<rect x="408.2" y="181.0" width="3" height="1.8" fill="#ffffff" opacity="0.93"/>
<rect x="415.2" y="181.0" width="3" height="1.8" fill="#ffffff" opacity="0.99"/>
<rect x="422.2" y="181.0" width="3" height="1.8" fill="#f0e8d8" opacity="0.95"/>
<rect x="425.7" y="181.0" width="3" height="1.8" fill="#f0e8d8" opacity="0.85"/>
<rect x="429.2" y="181.0" width="3" height="1.8" fill="#f0e8d8" opacity="0.90"/>
<rect x="432.7" y="181.0" width="3" height="1.8" fill="#f0e8d8" opacity="0.77"/>
<rect x="408.2" y="185.5" width="3" height="1.8" fill="#ffffff" opacity="0.94"/>
<rect x="411.7" y="185.5" width="3" height="1.8" fill="#ffffff" opacity="0.86"/>
<rect x="415.2" y="185.5" width="3" height="1.8" fill="#f0e8d8" opacity="0.96"/>
<rect x="418.7" y="185.5" width="3" height="1.8" fill="#f0e8d8" opacity="0.82"/>
<rect x="422.2" y="185.5" width="3" height="1.8" fill="#ffffff" opacity="0.77"/>
<rect x="425.7" y="185.5" width="3" height="1.8" fill="#f0e8d8" opacity="0.87"/>
<rect x="429.2" y="185.5" width="3" height="1.8" fill="#ffffff" opacity="0.93"/>
<rect x="432.7" y="185.5" width="3" height="1.8" fill="#f0e8d8" opacity="0.90"/>
<rect x="408.2" y="190.0" width="3" height="1.8" fill="#ffffff" opacity="0.96"/>
<rect x="418.7" y="190.0" width="3" height="1.8" fill="#ffffff" opacity="0.89"/>
<rect x="422.2" y="190.0" width="3" height="1.8" fill="#ffffff" opacity="0.89"/>
<rect x="425.7" y="190.0" width="3" height="1.8" fill="#f0e8d8" opacity="0.90"/>
<rect x="411.7" y="194.5" width="3" height="1.8" fill="#f0e8d8" opacity="0.93"/>
<rect x="422.2" y="194.5" width="3" height="1.8" fill="#ffffff" opacity="0.84"/>
<rect x="429.2" y="194.5" width="3" height="1.8" fill="#f0e8d8" opacity="0.99"/>
<rect x="435" y="137" width="21" height="61" fill="#0b0a09"/>
<rect x="436.2" y="138.5" width="2.4" height="1.8" fill="#f8e0b0" opacity="0.80"/>
<rect x="443.4" y="138.5" width="2.4" height="1.8" fill="#fff6dc" opacity="0.89"/>
<rect x="439.8" y="142.7" width="2.4" height="1.8" fill="#ffffff" opacity="0.91"/>
<rect x="454.2" y="142.7" width="2.4" height="1.8" fill="#e8c080" opacity="0.81"/>
<rect x="450.6" y="151.1" width="2.4" height="1.8" fill="#f8e0b0" opacity="0.77"/>
<rect x="447.0" y="155.3" width="2.4" height="1.8" fill="#e8c080" opacity="0.78"/>
<rect x="450.6" y="155.3" width="2.4" height="1.8" fill="#ffffff" opacity="0.99"/>
<rect x="436.2" y="159.5" width="2.4" height="1.8" fill="#f8e0b0" opacity="0.93"/>
<rect x="447.0" y="159.5" width="2.4" height="1.8" fill="#fff6dc" opacity="0.80"/>
<rect x="436.2" y="163.7" width="2.4" height="1.8" fill="#e8c080" opacity="0.89"/>
<rect x="439.8" y="163.7" width="2.4" height="1.8" fill="#f8e0b0" opacity="0.93"/>
<rect x="447.0" y="163.7" width="2.4" height="1.8" fill="#ffffff" opacity="0.93"/>
<rect x="439.8" y="167.9" width="2.4" height="1.8" fill="#ffffff" opacity="0.95"/>
<rect x="443.4" y="167.9" width="2.4" height="1.8" fill="#fff6dc" opacity="0.80"/>
<rect x="450.6" y="167.9" width="2.4" height="1.8" fill="#fff6dc" opacity="0.82"/>
<rect x="439.8" y="172.1" width="2.4" height="1.8" fill="#e8c080" opacity="0.78"/>
<rect x="443.4" y="172.1" width="2.4" height="1.8" fill="#f8e0b0" opacity="0.84"/>
<rect x="447.0" y="172.1" width="2.4" height="1.8" fill="#fff6dc" opacity="0.85"/>
<rect x="450.6" y="176.3" width="2.4" height="1.8" fill="#ffffff" opacity="0.98"/>
<rect x="436.2" y="184.7" width="2.4" height="1.8" fill="#ffffff" opacity="0.76"/>
<rect x="447.0" y="184.7" width="2.4" height="1.8" fill="#fff6dc" opacity="0.84"/>
<rect x="439.8" y="188.9" width="2.4" height="1.8" fill="#fff6dc" opacity="0.78"/>
<rect x="443.4" y="188.9" width="2.4" height="1.8" fill="#e8c080" opacity="0.98"/>
<rect x="436.2" y="193.1" width="2.4" height="1.8" fill="#f8e0b0" opacity="0.87"/>
<rect x="456" y="150" width="14" height="48" fill="#0b0a09"/>
<rect x="457.2" y="151.5" width="2.4" height="1.8" fill="#ffffff" opacity="0.82"/>
<rect x="468.0" y="151.5" width="2.4" height="1.8" fill="#fff6dc" opacity="0.97"/>
<rect x="468.0" y="155.7" width="2.4" height="1.8" fill="#ffffff" opacity="0.82"/>
<rect x="460.8" y="164.1" width="2.4" height="1.8" fill="#e8c080" opacity="0.86"/>
<rect x="464.4" y="168.3" width="2.4" height="1.8" fill="#fff6dc" opacity="0.79"/>
<rect x="464.4" y="172.5" width="2.4" height="1.8" fill="#fff6dc" opacity="0.85"/>
<rect x="464.4" y="176.7" width="2.4" height="1.8" fill="#fff6dc" opacity="0.85"/>
<rect x="468.0" y="176.7" width="2.4" height="1.8" fill="#ffffff" opacity="0.92"/>
<rect x="457.2" y="180.9" width="2.4" height="1.8" fill="#f8e0b0" opacity="0.91"/>
<rect x="464.4" y="180.9" width="2.4" height="1.8" fill="#ffffff" opacity="0.90"/>
<rect x="468.0" y="180.9" width="2.4" height="1.8" fill="#fff6dc" opacity="0.84"/>
<rect x="457.2" y="185.1" width="2.4" height="1.8" fill="#ffffff" opacity="0.87"/>
<rect x="460.8" y="189.3" width="2.4" height="1.8" fill="#e8c080" opacity="0.96"/>
<rect x="464.4" y="189.3" width="2.4" height="1.8" fill="#ffffff" opacity="0.92"/>
<rect x="470" y="165" width="30" height="33" fill="#0b0a09"/>
<rect x="482.0" y="166.5" width="2.4" height="1.8" fill="#f8e0b0" opacity="0.86"/>
<rect x="492.8" y="166.5" width="2.4" height="1.8" fill="#ffffff" opacity="0.99"/>
<rect x="478.4" y="170.7" width="2.4" height="1.8" fill="#ffffff" opacity="0.82"/>
<rect x="489.2" y="170.7" width="2.4" height="1.8" fill="#fff6dc" opacity="0.79"/>
<rect x="496.4" y="170.7" width="2.4" height="1.8" fill="#ffffff" opacity="0.89"/>
<rect x="474.8" y="174.9" width="2.4" height="1.8" fill="#f8e0b0" opacity="0.78"/>
<rect x="482.0" y="174.9" width="2.4" height="1.8" fill="#f8e0b0" opacity="0.90"/>
<rect x="492.8" y="174.9" width="2.4" height="1.8" fill="#f8e0b0" opacity="0.86"/>
<rect x="474.8" y="179.1" width="2.4" height="1.8" fill="#e8c080" opacity="0.97"/>
<rect x="478.4" y="179.1" width="2.4" height="1.8" fill="#f8e0b0" opacity="0.86"/>
<rect x="485.6" y="179.1" width="2.4" height="1.8" fill="#ffffff" opacity="0.86"/>
<rect x="489.2" y="179.1" width="2.4" height="1.8" fill="#e8c080" opacity="0.81"/>
<rect x="496.4" y="179.1" width="2.4" height="1.8" fill="#fff6dc" opacity="0.75"/>
<rect x="471.2" y="183.3" width="2.4" height="1.8" fill="#e8c080" opacity="0.90"/>
<rect x="474.8" y="183.3" width="2.4" height="1.8" fill="#e8c080" opacity="0.98"/>
<rect x="489.2" y="183.3" width="2.4" height="1.8" fill="#e8c080" opacity="0.95"/>
<rect x="474.8" y="187.5" width="2.4" height="1.8" fill="#e8c080" opacity="0.86"/>
<rect x="485.6" y="187.5" width="2.4" height="1.8" fill="#e8c080" opacity="0.97"/>
<rect x="471.2" y="191.7" width="2.4" height="1.8" fill="#fff6dc" opacity="0.76"/>
<rect x="485.6" y="191.7" width="2.4" height="1.8" fill="#fff6dc" opacity="0.95"/>
<rect x="492.8" y="191.7" width="2.4" height="1.8" fill="#ffffff" opacity="0.91"/>
<rect x="496.4" y="191.7" width="2.4" height="1.8" fill="#e8c080" opacity="0.98"/>
<rect x="474.8" y="195.9" width="2.4" height="1.8" fill="#fff6dc" opacity="0.81"/>
<rect x="526" y="161" width="30" height="37" fill="#0b0a09"/>
<rect x="534.4" y="162.5" width="2.4" height="1.8" fill="#ffffff" opacity="0.94"/>
<rect x="545.2" y="162.5" width="2.4" height="1.8" fill="#f8e0b0" opacity="0.76"/>
<rect x="548.8" y="162.5" width="2.4" height="1.8" fill="#f8e0b0" opacity="0.83"/>
<rect x="552.4" y="162.5" width="2.4" height="1.8" fill="#fff6dc" opacity="0.84"/>
<rect x="527.2" y="166.7" width="2.4" height="1.8" fill="#e8c080" opacity="0.79"/>
<rect x="534.4" y="166.7" width="2.4" height="1.8" fill="#ffffff" opacity="0.91"/>
<rect x="541.6" y="166.7" width="2.4" height="1.8" fill="#e8c080" opacity="0.88"/>
<rect x="552.4" y="166.7" width="2.4" height="1.8" fill="#e8c080" opacity="0.81"/>
<rect x="534.4" y="170.9" width="2.4" height="1.8" fill="#e8c080" opacity="0.77"/>
<rect x="541.6" y="170.9" width="2.4" height="1.8" fill="#fff6dc" opacity="0.89"/>
<rect x="552.4" y="170.9" width="2.4" height="1.8" fill="#e8c080" opacity="0.91"/>
<rect x="534.4" y="175.1" width="2.4" height="1.8" fill="#f8e0b0" opacity="0.84"/>
<rect x="538.0" y="175.1" width="2.4" height="1.8" fill="#fff6dc" opacity="0.78"/>
<rect x="538.0" y="179.3" width="2.4" height="1.8" fill="#fff6dc" opacity="0.96"/>
<rect x="541.6" y="179.3" width="2.4" height="1.8" fill="#fff6dc" opacity="0.83"/>
<rect x="545.2" y="179.3" width="2.4" height="1.8" fill="#ffffff" opacity="0.99"/>
<rect x="548.8" y="179.3" width="2.4" height="1.8" fill="#e8c080" opacity="0.81"/>
<rect x="527.2" y="183.5" width="2.4" height="1.8" fill="#fff6dc" opacity="0.78"/>
<rect x="548.8" y="183.5" width="2.4" height="1.8" fill="#e8c080" opacity="0.93"/>
<rect x="552.4" y="183.5" width="2.4" height="1.8" fill="#f8e0b0" opacity="0.86"/>
<rect x="527.2" y="187.7" width="2.4" height="1.8" fill="#fff6dc" opacity="0.97"/>
<rect x="534.4" y="187.7" width="2.4" height="1.8" fill="#e8c080" opacity="0.89"/>
<rect x="541.6" y="187.7" width="2.4" height="1.8" fill="#ffffff" opacity="0.84"/>
<rect x="545.2" y="187.7" width="2.4" height="1.8" fill="#fff6dc" opacity="0.80"/>
<rect x="548.8" y="187.7" width="2.4" height="1.8" fill="#ffffff" opacity="0.99"/>
<rect x="552.4" y="187.7" width="2.4" height="1.8" fill="#ffffff" opacity="0.82"/>
<rect x="534.4" y="191.9" width="2.4" height="1.8" fill="#e8c080" opacity="0.88"/>
<rect x="552.4" y="191.9" width="2.4" height="1.8" fill="#e8c080" opacity="0.80"/>
<rect x="527.2" y="196.1" width="2.4" height="1.8" fill="#ffffff" opacity="0.82"/>
<rect x="534.4" y="196.1" width="2.4" height="1.8" fill="#ffffff" opacity="0.89"/>
<rect x="538.0" y="196.1" width="2.4" height="1.8" fill="#ffffff" opacity="0.93"/>
<rect x="541.6" y="196.1" width="2.4" height="1.8" fill="#ffffff" opacity="0.96"/>
<rect x="548.8" y="196.1" width="2.4" height="1.8" fill="#f8e0b0" opacity="0.98"/>
<rect x="552.4" y="196.1" width="2.4" height="1.8" fill="#f8e0b0" opacity="0.97"/>
<rect x="604" y="182" width="12" height="16" fill="#0b0a09"/>
<rect x="605.2" y="183.5" width="2.4" height="1.8" fill="#e8c080" opacity="1.00"/>
<rect x="605.2" y="196.1" width="2.4" height="1.8" fill="#fff6dc" opacity="0.85"/>
<rect x="612.4" y="196.1" width="2.4" height="1.8" fill="#fff6dc" opacity="0.76"/>
<rect x="690" y="190" width="22" height="8" fill="#0b0a09"/>
<rect x="691.2" y="191.5" width="2.4" height="1.8" fill="#f8e0b0" opacity="0.78"/>
<rect x="698.4" y="191.5" width="2.4" height="1.8" fill="#ffffff" opacity="0.83"/>
<rect x="702.0" y="191.5" width="2.4" height="1.8" fill="#fff6dc" opacity="0.97"/>
<rect x="705.6" y="191.5" width="2.4" height="1.8" fill="#fff6dc" opacity="0.80"/>
<rect x="691.2" y="195.7" width="2.4" height="1.8" fill="#fff6dc" opacity="0.77"/>
<rect x="694.8" y="195.7" width="2.4" height="1.8" fill="#e8c080" opacity="0.92"/>
<rect x="702.0" y="195.7" width="2.4" height="1.8" fill="#f8e0b0" opacity="0.91"/>
<rect x="709.2" y="195.7" width="2.4" height="1.8" fill="#f8e0b0" opacity="0.94"/>
</g>
<rect x="192" y="35" width="2.2" height="42" fill="#2a2220"/>
<rect x="192" y="38" width="2.2" height="2" fill="#ff5a4a" opacity=".8"/>
<rect x="192" y="44" width="2.2" height="2" fill="#ff5a4a" opacity=".8"/>
<rect x="192" y="50" width="2.2" height="2" fill="#ff5a4a" opacity=".8"/>
<rect x="192" y="56" width="2.2" height="2" fill="#ff5a4a" opacity=".8"/>
<rect x="192" y="62" width="2.2" height="2" fill="#ff5a4a" opacity=".8"/>
<rect x="192" y="68" width="2.2" height="2" fill="#ff5a4a" opacity=".8"/>
<rect x="192" y="74" width="2.2" height="2" fill="#ff5a4a" opacity=".8"/>
<path d="M476 166 L482 151 L488 166Z" fill="#e89838"/><path d="M479 160 L482 153 L485 160Z" fill="#ffd080"/>
<g filter="url(#bl1)">
<rect x="152.4" y="252.8" width="2.4" height="1.8" fill="#ffdca0" opacity="0.92"/>
<rect x="100.7" y="260.5" width="5.5" height="1.8" fill="#ffdca0" opacity="0.79"/>
<rect x="204.5" y="258.3" width="4.8" height="1.8" fill="#ffdca0" opacity="0.85"/>
<rect x="115.7" y="255.8" width="5.0" height="1.8" fill="#ffdca0" opacity="0.65"/>
<rect x="246.0" y="257.5" width="7.8" height="1.8" fill="#ffdca0" opacity="0.53"/>
<rect x="324.9" y="252.2" width="6.9" height="1.8" fill="#ffdca0" opacity="0.46"/>
<rect x="163.5" y="257.9" width="7.5" height="1.8" fill="#ffdca0" opacity="0.48"/>
<rect x="219.9" y="263.1" width="4.9" height="1.8" fill="#ffdca0" opacity="0.83"/>
<rect x="344.8" y="263.2" width="3.5" height="1.8" fill="#ffdca0" opacity="0.60"/>
<rect x="230.0" y="262.5" width="7.9" height="1.8" fill="#ffdca0" opacity="0.91"/>
<rect x="289.0" y="260.5" width="6.3" height="1.8" fill="#ffdca0" opacity="0.92"/>
<rect x="294.0" y="254.4" width="3.4" height="1.8" fill="#ffdca0" opacity="0.64"/>
<rect x="335.9" y="256.4" width="6.9" height="1.8" fill="#ffdca0" opacity="0.58"/>
<rect x="270.5" y="264.2" width="7.9" height="1.8" fill="#ffdca0" opacity="0.74"/>
<rect x="242.0" y="254.4" width="7.1" height="1.8" fill="#ffdca0" opacity="0.53"/>
<rect x="122.2" y="264.1" width="5.1" height="1.8" fill="#ffdca0" opacity="0.68"/>
<rect x="138.7" y="264.9" width="6.1" height="1.8" fill="#ffdca0" opacity="0.92"/>
<rect x="189.5" y="258.7" width="5.1" height="1.8" fill="#ffdca0" opacity="0.46"/>
<rect x="95.0" y="260.3" width="4.1" height="1.8" fill="#ffdca0" opacity="0.91"/>
<rect x="284.6" y="261.4" width="5.4" height="1.8" fill="#ffdca0" opacity="0.54"/>
<rect x="238.4" y="261.3" width="3.5" height="1.8" fill="#ffdca0" opacity="0.68"/>
<rect x="107.8" y="261.4" width="4.6" height="1.8" fill="#ffdca0" opacity="0.53"/>
<rect x="271.1" y="263.2" width="3.3" height="1.8" fill="#ffdca0" opacity="0.40"/>
<rect x="238.9" y="265.3" width="2.5" height="1.8" fill="#ffdca0" opacity="0.88"/>
<rect x="244.5" y="261.9" width="2.1" height="1.8" fill="#ffdca0" opacity="0.64"/>
<rect x="101.0" y="265.3" width="7.9" height="1.8" fill="#ffdca0" opacity="0.83"/>
<rect x="241.5" y="262.8" width="2.8" height="1.8" fill="#ffdca0" opacity="0.99"/>
<rect x="188.5" y="258.0" width="2.1" height="1.8" fill="#ffdca0" opacity="0.45"/>
<rect x="326.2" y="254.7" width="5.0" height="1.8" fill="#ffdca0" opacity="0.84"/>
<rect x="276.2" y="258.2" width="6.1" height="1.8" fill="#ffdca0" opacity="0.90"/>
<rect x="141.8" y="257.4" width="5.5" height="1.8" fill="#ffdca0" opacity="0.82"/>
<rect x="234.8" y="252.4" width="3.5" height="1.8" fill="#ffdca0" opacity="0.61"/>
<rect x="310.9" y="260.6" width="3.6" height="1.8" fill="#ffdca0" opacity="0.74"/>
<rect x="165.6" y="265.5" width="6.2" height="1.8" fill="#ffdca0" opacity="0.93"/>
<rect x="189.7" y="253.8" width="6.7" height="1.8" fill="#ffdca0" opacity="0.51"/>
<rect x="307.3" y="262.7" width="7.2" height="1.8" fill="#ffdca0" opacity="0.74"/>
<rect x="254.1" y="252.4" width="3.7" height="1.8" fill="#ffdca0" opacity="0.47"/>
<rect x="106.1" y="259.5" width="2.4" height="1.8" fill="#ffdca0" opacity="0.70"/>
<rect x="129.9" y="254.6" width="6.8" height="1.8" fill="#ffdca0" opacity="0.99"/>
<rect x="251.2" y="260.6" width="3.1" height="1.8" fill="#ffdca0" opacity="0.65"/>
<rect x="317.0" y="253.0" width="4.3" height="1.8" fill="#ffdca0" opacity="0.55"/>
<rect x="146.9" y="254.1" width="6.4" height="1.8" fill="#ffdca0" opacity="0.60"/>
<rect x="341.3" y="256.5" width="6.2" height="1.8" fill="#ffdca0" opacity="0.62"/>
<rect x="286.5" y="252.8" width="7.9" height="1.8" fill="#ffdca0" opacity="0.55"/>
<rect x="278.6" y="256.5" width="2.1" height="1.8" fill="#ffdca0" opacity="0.72"/>
<rect x="122.1" y="263.0" width="3.3" height="1.8" fill="#ffdca0" opacity="0.43"/>
<rect x="227.4" y="260.2" width="5.8" height="1.8" fill="#ffdca0" opacity="0.83"/>
<rect x="102.9" y="264.7" width="6.8" height="1.8" fill="#ffdca0" opacity="0.85"/>
<rect x="91.5" y="256.1" width="3.2" height="1.8" fill="#ffdca0" opacity="0.93"/>
<rect x="158.8" y="257.6" width="3.3" height="1.8" fill="#ffdca0" opacity="0.84"/>
<rect x="120.8" y="258.5" width="6.5" height="1.8" fill="#ffdca0" opacity="0.62"/>
<rect x="147.7" y="259.2" width="3.1" height="1.8" fill="#ffdca0" opacity="0.84"/>
<rect x="297.5" y="255.3" width="2.3" height="1.8" fill="#ffdca0" opacity="0.62"/>
<rect x="92.9" y="263.9" width="7.7" height="1.8" fill="#ffdca0" opacity="0.76"/>
<rect x="223.4" y="260.2" width="4.2" height="1.8" fill="#ffdca0" opacity="0.72"/>
<rect x="246.7" y="263.9" width="3.8" height="1.8" fill="#ffdca0" opacity="0.49"/>
<rect x="203.3" y="252.7" width="3.9" height="1.8" fill="#ffdca0" opacity="0.71"/>
<rect x="308.1" y="260.2" width="7.9" height="1.8" fill="#ffdca0" opacity="0.87"/>
<rect x="341.1" y="264.3" width="4.0" height="1.8" fill="#ffdca0" opacity="0.51"/>
<rect x="267.9" y="262.3" width="4.4" height="1.8" fill="#ffdca0" opacity="0.89"/>
<rect x="254.4" y="263.5" width="2.0" height="1.8" fill="#ffdca0" opacity="0.90"/>
<rect x="314.1" y="255.3" width="7.0" height="1.8" fill="#ffdca0" opacity="0.56"/>
<rect x="306.6" y="263.7" width="7.0" height="1.8" fill="#ffdca0" opacity="0.46"/>
<rect x="139.7" y="259.7" width="3.4" height="1.8" fill="#ffdca0" opacity="0.63"/>
<rect x="334.7" y="264.8" width="3.0" height="1.8" fill="#ffdca0" opacity="0.50"/>
<rect x="288.6" y="260.0" width="2.1" height="1.8" fill="#ffdca0" opacity="0.98"/>
<rect x="136.7" y="253.2" width="7.3" height="1.8" fill="#ffdca0" opacity="0.90"/>
<rect x="115.7" y="260.1" width="7.7" height="1.8" fill="#ffdca0" opacity="1.00"/>
<rect x="321.6" y="263.7" width="7.6" height="1.8" fill="#ffdca0" opacity="0.64"/>
<rect x="271.2" y="264.0" width="6.9" height="1.8" fill="#ffdca0" opacity="0.76"/>
<rect x="665.1" y="272.4" width="9.4" height="1.8" fill="#ffdca0" opacity="0.94"/>
<rect x="675.0" y="265.9" width="4.7" height="1.8" fill="#ffdca0" opacity="0.70"/>
<rect x="421.1" y="259.4" width="9.0" height="1.8" fill="#ffdca0" opacity="0.99"/>
<rect x="563.3" y="266.5" width="2.9" height="1.8" fill="#ffdca0" opacity="0.72"/>
<rect x="692.3" y="267.9" width="7.3" height="1.8" fill="#ffdca0" opacity="0.89"/>
<rect x="552.9" y="265.2" width="7.7" height="1.8" fill="#ffdca0" opacity="0.51"/>
<rect x="518.8" y="261.7" width="2.5" height="1.8" fill="#ffdca0" opacity="0.55"/>
<rect x="662.8" y="272.3" width="5.2" height="1.8" fill="#ffdca0" opacity="0.47"/>
<rect x="569.8" y="263.9" width="7.0" height="1.8" fill="#ffdca0" opacity="0.91"/>
<rect x="525.4" y="263.1" width="8.6" height="1.8" fill="#ffdca0" opacity="0.91"/>
<rect x="622.4" y="266.1" width="9.4" height="1.8" fill="#ffdca0" opacity="0.44"/>
<rect x="708.6" y="273.3" width="2.5" height="1.8" fill="#ffdca0" opacity="0.50"/>
<rect x="652.5" y="274.2" width="2.8" height="1.8" fill="#ffdca0" opacity="0.77"/>
<rect x="670.4" y="271.5" width="9.4" height="1.8" fill="#ffdca0" opacity="0.93"/>
<rect x="471.7" y="258.6" width="9.1" height="1.8" fill="#ffdca0" opacity="0.55"/>
<rect x="675.9" y="275.2" width="5.1" height="1.8" fill="#ffdca0" opacity="0.86"/>
<rect x="481.4" y="264.0" width="3.0" height="1.8" fill="#ffdca0" opacity="0.78"/>
<rect x="461.5" y="262.4" width="2.2" height="1.8" fill="#ffdca0" opacity="0.99"/>
<rect x="599.7" y="265.4" width="3.8" height="1.8" fill="#ffdca0" opacity="0.87"/>
<rect x="563.3" y="267.1" width="2.3" height="1.8" fill="#ffdca0" opacity="0.62"/>
<rect x="556.2" y="270.2" width="3.6" height="1.8" fill="#ffdca0" opacity="0.43"/>
<rect x="577.1" y="263.3" width="2.3" height="1.8" fill="#ffdca0" opacity="0.46"/>
<rect x="560.3" y="265.3" width="4.1" height="1.8" fill="#ffdca0" opacity="0.82"/>
<rect x="434.6" y="260.0" width="6.0" height="1.8" fill="#ffdca0" opacity="0.55"/>
<rect x="702.2" y="268.5" width="5.6" height="1.8" fill="#ffdca0" opacity="0.97"/>
<rect x="571.8" y="263.4" width="5.8" height="1.8" fill="#ffdca0" opacity="0.99"/>
<rect x="662.7" y="267.0" width="2.6" height="1.8" fill="#ffdca0" opacity="0.96"/>
<rect x="507.5" y="259.6" width="5.4" height="1.8" fill="#ffdca0" opacity="0.86"/>
<rect x="528.5" y="268.9" width="9.5" height="1.8" fill="#ffdca0" opacity="0.80"/>
<rect x="677.5" y="270.8" width="2.7" height="1.8" fill="#ffdca0" opacity="0.81"/>
<rect x="494.6" y="267.9" width="9.2" height="1.8" fill="#ffdca0" opacity="0.68"/>
<rect x="625.8" y="262.8" width="6.6" height="1.8" fill="#ffdca0" opacity="0.80"/>
<rect x="688.2" y="264.9" width="3.6" height="1.8" fill="#ffdca0" opacity="0.86"/>
<rect x="598.9" y="266.8" width="9.8" height="1.8" fill="#ffdca0" opacity="0.44"/>
<rect x="674.2" y="265.0" width="3.9" height="1.8" fill="#ffdca0" opacity="0.79"/>
<rect x="435.0" y="265.6" width="4.5" height="1.8" fill="#ffdca0" opacity="0.88"/>
<rect x="595.3" y="264.3" width="8.3" height="1.8" fill="#ffdca0" opacity="0.95"/>
<rect x="650.9" y="264.0" width="5.5" height="1.8" fill="#ffdca0" opacity="0.44"/>
<rect x="551.0" y="263.3" width="6.2" height="1.8" fill="#ffdca0" opacity="0.92"/>
<rect x="637.5" y="272.0" width="2.4" height="1.8" fill="#ffdca0" opacity="0.69"/>
<rect x="541.5" y="268.4" width="9.1" height="1.8" fill="#ffdca0" opacity="0.40"/>
<rect x="671.8" y="267.5" width="2.3" height="1.8" fill="#ffdca0" opacity="0.77"/>
<rect x="576.2" y="272.2" width="8.4" height="1.8" fill="#ffdca0" opacity="0.68"/>
<rect x="647.7" y="273.5" width="6.1" height="1.8" fill="#ffdca0" opacity="0.59"/>
<rect x="610.7" y="271.9" width="7.7" height="1.8" fill="#ffdca0" opacity="0.77"/>
<rect x="467.8" y="266.2" width="6.8" height="1.8" fill="#ffdca0" opacity="0.83"/>
<rect x="554.1" y="260.5" width="4.0" height="1.8" fill="#ffdca0" opacity="0.76"/>
<rect x="465.5" y="261.3" width="5.3" height="1.8" fill="#ffdca0" opacity="0.49"/>
<rect x="502.2" y="263.9" width="9.3" height="1.8" fill="#ffdca0" opacity="0.83"/>
<rect x="449.8" y="261.6" width="8.5" height="1.8" fill="#ffdca0" opacity="0.40"/>
<rect x="626.8" y="270.8" width="4.0" height="1.8" fill="#ffdca0" opacity="0.41"/>
<rect x="510.2" y="262.6" width="7.3" height="1.8" fill="#ffdca0" opacity="0.45"/>
<rect x="468.6" y="266.1" width="2.3" height="1.8" fill="#ffdca0" opacity="0.76"/>
<rect x="528.5" y="263.3" width="5.3" height="1.8" fill="#ffdca0" opacity="0.60"/>
<rect x="651.9" y="273.9" width="6.6" height="1.8" fill="#ffdca0" opacity="0.81"/>
<rect x="666.5" y="264.7" width="5.7" height="1.8" fill="#ffdca0" opacity="0.42"/>
<rect x="640.6" y="273.3" width="3.1" height="1.8" fill="#ffdca0" opacity="0.65"/>
<rect x="601.5" y="267.8" width="2.4" height="1.8" fill="#ffdca0" opacity="0.65"/>
<rect x="518.9" y="266.2" width="9.1" height="1.8" fill="#ffdca0" opacity="0.45"/>
<rect x="577.8" y="266.3" width="5.1" height="1.8" fill="#ffdca0" opacity="0.52"/>
<rect x="551.8" y="261.4" width="7.4" height="1.8" fill="#ffdca0" opacity="0.58"/>
<rect x="674.7" y="266.6" width="3.7" height="1.8" fill="#ffdca0" opacity="0.51"/>
<rect x="632.4" y="272.5" width="8.9" height="1.8" fill="#ffdca0" opacity="0.71"/>
<rect x="606.3" y="265.9" width="6.3" height="1.8" fill="#ffdca0" opacity="0.47"/>
<rect x="674.7" y="268.7" width="5.8" height="1.8" fill="#ffdca0" opacity="0.46"/>
<rect x="570.0" y="262.9" width="9.9" height="1.8" fill="#ffdca0" opacity="0.44"/>
<rect x="523.4" y="260.0" width="3.6" height="1.8" fill="#ffdca0" opacity="0.70"/>
<rect x="439.8" y="264.2" width="6.8" height="1.8" fill="#ffdca0" opacity="0.86"/>
<rect x="519.7" y="266.6" width="4.7" height="1.8" fill="#ffdca0" opacity="0.81"/>
<rect x="708.4" y="266.8" width="7.4" height="1.8" fill="#ffdca0" opacity="0.88"/>
<rect x="492.4" y="258.8" width="6.1" height="1.8" fill="#ffdca0" opacity="0.71"/>
<rect x="598.4" y="270.5" width="4.7" height="1.8" fill="#ffdca0" opacity="0.88"/>
<rect x="628.0" y="265.2" width="3.9" height="1.8" fill="#ffdca0" opacity="0.67"/>
<rect x="670.5" y="274.0" width="6.3" height="1.8" fill="#ffdca0" opacity="0.72"/>
<rect x="564.5" y="269.3" width="2.2" height="1.8" fill="#ffdca0" opacity="0.82"/>
<rect x="570.6" y="267.3" width="8.8" height="1.8" fill="#ffdca0" opacity="0.46"/>
<rect x="569.4" y="271.9" width="4.0" height="1.8" fill="#ffdca0" opacity="0.77"/>
<rect x="501.0" y="267.6" width="7.1" height="1.8" fill="#ffdca0" opacity="0.48"/>
<rect x="460.6" y="261.4" width="5.6" height="1.8" fill="#ffdca0" opacity="0.88"/>
<rect x="695.3" y="270.9" width="2.7" height="1.8" fill="#ffdca0" opacity="0.68"/>
<path d="M600 264 L712 272 L712 275 L600 267Z" fill="#c89a60" opacity=".6"/>
</g>
<g filter="url(#bl2)">
<rect x="323.6" y="267.1" width="2" height="11.3" fill="#b0a080" opacity="0.31"/>
<rect x="262.5" y="269.0" width="2" height="6.5" fill="#b0a080" opacity="0.27"/>
<rect x="237.6" y="271.9" width="2" height="16.1" fill="#b0a080" opacity="0.29"/>
<rect x="263.4" y="279.0" width="2" height="6.3" fill="#b0a080" opacity="0.40"/>
<rect x="172.6" y="271.4" width="2" height="9.1" fill="#b0a080" opacity="0.50"/>
<rect x="182.7" y="279.8" width="2" height="8.5" fill="#b0a080" opacity="0.32"/>
<rect x="261.0" y="267.7" width="2" height="8.1" fill="#b0a080" opacity="0.33"/>
<rect x="266.0" y="277.5" width="2" height="13.1" fill="#b0a080" opacity="0.31"/>
<rect x="245.5" y="279.8" width="2" height="10.4" fill="#b0a080" opacity="0.25"/>
<rect x="137.9" y="272.3" width="2" height="17.4" fill="#b0a080" opacity="0.58"/>
<rect x="272.5" y="269.3" width="2" height="10.5" fill="#b0a080" opacity="0.29"/>
<rect x="220.0" y="276.8" width="2" height="6.4" fill="#b0a080" opacity="0.41"/>
<rect x="174.0" y="274.7" width="2" height="15.5" fill="#b0a080" opacity="0.51"/>
<rect x="201.2" y="278.6" width="2" height="6.2" fill="#b0a080" opacity="0.32"/>
<rect x="160.2" y="275.6" width="2" height="11.8" fill="#b0a080" opacity="0.44"/>
<rect x="141.6" y="267.5" width="2" height="15.0" fill="#b0a080" opacity="0.46"/>
<rect x="318.6" y="272.1" width="2" height="13.2" fill="#b0a080" opacity="0.37"/>
<rect x="309.7" y="270.1" width="2" height="11.9" fill="#b0a080" opacity="0.52"/>
<rect x="206.4" y="272.1" width="2" height="7.2" fill="#b0a080" opacity="0.58"/>
<rect x="232.7" y="272.6" width="2" height="8.0" fill="#b0a080" opacity="0.36"/>
<rect x="202.1" y="268.6" width="2" height="10.3" fill="#b0a080" opacity="0.34"/>
<rect x="261.5" y="267.0" width="2" height="17.9" fill="#b0a080" opacity="0.54"/>
<rect x="132.1" y="272.4" width="2" height="14.8" fill="#b0a080" opacity="0.22"/>
<rect x="312.6" y="279.6" width="2" height="6.8" fill="#b0a080" opacity="0.33"/>
<rect x="328.5" y="270.0" width="2" height="14.8" fill="#b0a080" opacity="0.52"/>
<rect x="130.9" y="272.7" width="2" height="10.0" fill="#b0a080" opacity="0.53"/>
<rect x="146.2" y="275.4" width="2" height="6.3" fill="#b0a080" opacity="0.44"/>
<rect x="227.4" y="279.0" width="2" height="17.8" fill="#b0a080" opacity="0.53"/>
<rect x="273.2" y="271.3" width="2" height="13.1" fill="#b0a080" opacity="0.37"/>
<rect x="282.2" y="279.7" width="2" height="13.9" fill="#b0a080" opacity="0.26"/>
<rect x="243.0" y="273.4" width="2" height="16.8" fill="#b0a080" opacity="0.33"/>
<rect x="211.3" y="275.7" width="2" height="13.3" fill="#b0a080" opacity="0.40"/>
<rect x="253.3" y="269.2" width="2" height="7.1" fill="#b0a080" opacity="0.37"/>
<rect x="238.6" y="276.2" width="2" height="10.8" fill="#b0a080" opacity="0.33"/>
<rect x="326.5" y="278.7" width="2" height="8.5" fill="#b0a080" opacity="0.54"/>
<rect x="200.0" y="266.7" width="2" height="15.6" fill="#b0a080" opacity="0.41"/>
<rect x="321.0" y="272.1" width="2" height="6.5" fill="#b0a080" opacity="0.36"/>
<rect x="272.7" y="269.3" width="2" height="13.9" fill="#b0a080" opacity="0.29"/>
<rect x="267.1" y="266.2" width="2" height="14.5" fill="#b0a080" opacity="0.28"/>
<rect x="209.4" y="279.6" width="2" height="7.3" fill="#b0a080" opacity="0.23"/>
<rect x="328.7" y="277.4" width="2" height="12.8" fill="#b0a080" opacity="0.41"/>
<rect x="224.3" y="275.0" width="2" height="15.8" fill="#b0a080" opacity="0.25"/>
<rect x="203.3" y="273.0" width="2" height="7.9" fill="#b0a080" opacity="0.24"/>
<rect x="262.0" y="279.8" width="2" height="15.8" fill="#b0a080" opacity="0.33"/>
<rect x="199.0" y="279.8" width="2" height="15.9" fill="#b0a080" opacity="0.44"/>
<rect x="460.8" y="273.7" width="2.5" height="20.7" fill="#b8a888" opacity="0.35"/>
<rect x="611.9" y="274.1" width="2.5" height="19.6" fill="#b8a888" opacity="0.41"/>
<rect x="468.6" y="273.7" width="2.5" height="12.2" fill="#b8a888" opacity="0.36"/>
<rect x="580.4" y="284.3" width="2.5" height="11.2" fill="#b8a888" opacity="0.28"/>
<rect x="578.0" y="274.9" width="2.5" height="8.1" fill="#b8a888" opacity="0.40"/>
<rect x="547.1" y="280.5" width="2.5" height="16.7" fill="#b8a888" opacity="0.23"/>
<rect x="554.5" y="273.2" width="2.5" height="9.3" fill="#b8a888" opacity="0.54"/>
<rect x="675.8" y="284.4" width="2.5" height="20.5" fill="#b8a888" opacity="0.45"/>
<rect x="571.0" y="278.8" width="2.5" height="13.4" fill="#b8a888" opacity="0.55"/>
<rect x="560.6" y="283.9" width="2.5" height="14.1" fill="#b8a888" opacity="0.30"/>
<rect x="606.0" y="281.2" width="2.5" height="16.3" fill="#b8a888" opacity="0.29"/>
<rect x="461.8" y="280.2" width="2.5" height="10.3" fill="#b8a888" opacity="0.54"/>
<rect x="559.5" y="281.4" width="2.5" height="12.6" fill="#b8a888" opacity="0.56"/>
<rect x="502.6" y="284.9" width="2.5" height="9.1" fill="#b8a888" opacity="0.49"/>
<rect x="517.7" y="284.2" width="2.5" height="18.3" fill="#b8a888" opacity="0.49"/>
<rect x="582.0" y="282.0" width="2.5" height="12.8" fill="#b8a888" opacity="0.35"/>
<rect x="612.4" y="272.8" width="2.5" height="12.9" fill="#b8a888" opacity="0.28"/>
<rect x="485.7" y="275.3" width="2.5" height="8.4" fill="#b8a888" opacity="0.42"/>
<rect x="549.3" y="281.6" width="2.5" height="24.3" fill="#b8a888" opacity="0.44"/>
<rect x="611.0" y="283.6" width="2.5" height="24.4" fill="#b8a888" opacity="0.38"/>
<rect x="664.6" y="277.5" width="2.5" height="15.8" fill="#b8a888" opacity="0.30"/>
<rect x="633.4" y="275.3" width="2.5" height="13.4" fill="#b8a888" opacity="0.38"/>
<rect x="444.3" y="282.7" width="2.5" height="8.0" fill="#b8a888" opacity="0.25"/>
<rect x="673.3" y="282.1" width="2.5" height="8.4" fill="#b8a888" opacity="0.29"/>
<rect x="547.3" y="272.2" width="2.5" height="12.0" fill="#b8a888" opacity="0.34"/>
<rect x="695.0" y="272.7" width="2.5" height="19.9" fill="#b8a888" opacity="0.28"/>
<rect x="602.8" y="272.2" width="2.5" height="20.8" fill="#b8a888" opacity="0.57"/>
<rect x="456.2" y="284.6" width="2.5" height="22.6" fill="#b8a888" opacity="0.32"/>
<rect x="565.7" y="272.1" width="2.5" height="11.1" fill="#b8a888" opacity="0.22"/>
<rect x="529.5" y="275.3" width="2.5" height="9.2" fill="#b8a888" opacity="0.23"/>
<rect x="488.0" y="272.8" width="2.5" height="10.3" fill="#b8a888" opacity="0.54"/>
<rect x="550.6" y="273.1" width="2.5" height="22.7" fill="#b8a888" opacity="0.27"/>
<rect x="498.2" y="272.6" width="2.5" height="22.2" fill="#b8a888" opacity="0.38"/>
<rect x="590.8" y="278.6" width="2.5" height="22.5" fill="#b8a888" opacity="0.56"/>
<rect x="648.3" y="278.9" width="2.5" height="19.8" fill="#b8a888" opacity="0.29"/>
<rect x="664.4" y="278.7" width="2.5" height="8.4" fill="#b8a888" opacity="0.33"/>
<rect x="686.3" y="275.8" width="2.5" height="10.0" fill="#b8a888" opacity="0.59"/>
<rect x="551.3" y="279.5" width="2.5" height="14.2" fill="#b8a888" opacity="0.30"/>
<rect x="523.8" y="284.1" width="2.5" height="16.3" fill="#b8a888" opacity="0.48"/>
<rect x="599.7" y="275.2" width="2.5" height="23.4" fill="#b8a888" opacity="0.57"/>
<rect x="476.2" y="272.6" width="2.5" height="20.3" fill="#b8a888" opacity="0.26"/>
<rect x="665.4" y="278.3" width="2.5" height="16.8" fill="#b8a888" opacity="0.31"/>
<rect x="584.4" y="276.1" width="2.5" height="8.3" fill="#b8a888" opacity="0.41"/>
<rect x="666.9" y="280.7" width="2.5" height="15.9" fill="#b8a888" opacity="0.54"/>
<rect x="452.5" y="274.8" width="2.5" height="14.3" fill="#b8a888" opacity="0.21"/>
<rect x="463.4" y="282.4" width="2.5" height="16.0" fill="#b8a888" opacity="0.46"/>
<rect x="487.9" y="283.8" width="2.5" height="23.7" fill="#b8a888" opacity="0.34"/>
<rect x="491.6" y="276.5" width="2.5" height="12.8" fill="#b8a888" opacity="0.35"/>
<rect x="618.0" y="282.0" width="2.5" height="23.3" fill="#b8a888" opacity="0.45"/>
<rect x="653.7" y="280.4" width="2.5" height="9.4" fill="#b8a888" opacity="0.27"/>
<rect x="501.4" y="273.4" width="2.5" height="12.4" fill="#b8a888" opacity="0.47"/>
<rect x="633.3" y="277.8" width="2.5" height="17.3" fill="#b8a888" opacity="0.46"/>
<rect x="617.9" y="277.6" width="2.5" height="14.2" fill="#b8a888" opacity="0.41"/>
<rect x="591.1" y="273.8" width="2.5" height="15.8" fill="#b8a888" opacity="0.40"/>
<rect x="637.8" y="275.7" width="2.5" height="24.3" fill="#b8a888" opacity="0.49"/>
<rect x="601.7" y="278.5" width="2.5" height="10.9" fill="#b8a888" opacity="0.34"/>
<rect x="520.6" y="278.2" width="2.5" height="9.2" fill="#b8a888" opacity="0.21"/>
<rect x="699.3" y="272.1" width="2.5" height="13.1" fill="#b8a888" opacity="0.36"/>
<rect x="696.7" y="276.4" width="2.5" height="12.9" fill="#b8a888" opacity="0.39"/>
<rect x="603.3" y="283.4" width="2.5" height="19.7" fill="#b8a888" opacity="0.23"/>
</g>
<path d="M100 286 L340 272 L320 439 L0 439 L0 350Z" fill="#15130f" opacity=".6"/>
<path d="M450 282 L712 288 L700 439 L610 439Z" fill="#100e0b" opacity=".6"/>
<path d="M378 224 L400 224 L461 259 L561 384 L610 439 L489 439Z" fill="url(#latt)"/>
<g stroke="#2a1a10" stroke-width="1.6" opacity=".85">
<line x1="379.3" y1="226.5" x2="404.4" y2="226.5"/>
<line x1="381.4" y1="230.6" x2="411.6" y2="230.6"/>
<line x1="384.0" y1="235.7" x2="420.4" y2="235.7"/>
<line x1="387.0" y1="241.5" x2="430.5" y2="241.5"/>
<line x1="390.3" y1="247.9" x2="441.7" y2="247.9"/>
<line x1="393.9" y1="254.9" x2="453.8" y2="254.9"/>
<line x1="397.8" y1="262.3" x2="463.6" y2="262.3"/>
<line x1="401.8" y1="270.2" x2="469.9" y2="270.2"/>
<line x1="406.1" y1="278.5" x2="476.6" y2="278.5"/>
<line x1="410.6" y1="287.1" x2="483.5" y2="287.1"/>
<line x1="415.2" y1="296.1" x2="490.7" y2="296.1"/>
<line x1="420.1" y1="305.5" x2="498.2" y2="305.5"/>
<line x1="425.0" y1="315.1" x2="505.9" y2="315.1"/>
<line x1="430.2" y1="325.1" x2="513.9" y2="325.1"/>
<line x1="435.5" y1="335.3" x2="522.1" y2="335.3"/>
<line x1="440.9" y1="345.9" x2="530.5" y2="345.9"/>
<line x1="446.5" y1="356.7" x2="539.1" y2="356.7"/>
<line x1="452.2" y1="367.7" x2="548.0" y2="367.7"/>
<line x1="458.0" y1="379.0" x2="557.0" y2="379.0"/>
<line x1="464.0" y1="390.6" x2="566.8" y2="390.6"/>
<line x1="470.1" y1="402.3" x2="577.3" y2="402.3"/>
<line x1="476.3" y1="414.3" x2="588.0" y2="414.3"/>
<line x1="482.6" y1="426.6" x2="598.9" y2="426.6"/>
</g>
<g stroke="#d8a860" stroke-width="0.9" opacity=".4">
<line x1="385.0" y1="224" x2="489.0" y2="439"/>
<line x1="386.2" y1="224" x2="498.3" y2="439"/>
<line x1="387.3" y1="224" x2="507.6" y2="439"/>
<line x1="388.5" y1="224" x2="516.9" y2="439"/>
<line x1="389.6" y1="224" x2="526.2" y2="439"/>
<line x1="390.8" y1="224" x2="535.5" y2="439"/>
<line x1="391.9" y1="224" x2="544.8" y2="439"/>
<line x1="393.1" y1="224" x2="554.2" y2="439"/>
<line x1="394.2" y1="224" x2="563.5" y2="439"/>
<line x1="395.4" y1="224" x2="572.8" y2="439"/>
<line x1="396.5" y1="224" x2="582.1" y2="439"/>
<line x1="397.7" y1="224" x2="591.4" y2="439"/>
<line x1="398.8" y1="224" x2="600.7" y2="439"/>
<line x1="400.0" y1="224" x2="610.0" y2="439"/>
</g>
<path d="M366 224 L378 224 L489 439 L413 439Z" fill="url(#road)"/>
<g stroke="#c8b8a0" stroke-width="0.8" opacity=".35">
<line x1="370" y1="224" x2="440" y2="439"/><line x1="374" y1="224" x2="462" y2="439"/>
</g>
<path d="M352 224 L366 224 L415 439 L311 439Z" fill="url(#walk)"/>
<g stroke="#3a3020" stroke-width="1.5" opacity=".8">
<line x1="351.8" y1="225.1" x2="366.2" y2="225.1"/>
<line x1="351.4" y1="227.1" x2="366.7" y2="227.1"/>
<line x1="350.9" y1="229.6" x2="367.3" y2="229.6"/>
<line x1="350.3" y1="232.7" x2="368.0" y2="232.7"/>
<line x1="349.7" y1="236.1" x2="368.8" y2="236.1"/>
<line x1="349.0" y1="239.9" x2="369.6" y2="239.9"/>
<line x1="348.2" y1="244.1" x2="370.6" y2="244.1"/>
<line x1="347.3" y1="248.5" x2="371.6" y2="248.5"/>
<line x1="346.4" y1="253.3" x2="372.7" y2="253.3"/>
<line x1="345.5" y1="258.3" x2="373.8" y2="258.3"/>
<line x1="344.5" y1="263.6" x2="375.0" y2="263.6"/>
<line x1="343.4" y1="269.1" x2="376.3" y2="269.1"/>
<line x1="342.3" y1="274.8" x2="377.6" y2="274.8"/>
<line x1="341.2" y1="280.8" x2="378.9" y2="280.8"/>
<line x1="340.0" y1="287.0" x2="380.4" y2="287.0"/>
<line x1="338.8" y1="293.4" x2="381.8" y2="293.4"/>
<line x1="337.5" y1="300.0" x2="383.3" y2="300.0"/>
<line x1="336.2" y1="306.8" x2="384.9" y2="306.8"/>
<line x1="334.9" y1="313.8" x2="386.5" y2="313.8"/>
<line x1="333.5" y1="321.0" x2="388.1" y2="321.0"/>
<line x1="332.1" y1="328.4" x2="389.8" y2="328.4"/>
<line x1="330.7" y1="335.9" x2="391.5" y2="335.9"/>
<line x1="329.2" y1="343.6" x2="393.3" y2="343.6"/>
<line x1="327.7" y1="351.5" x2="395.1" y2="351.5"/>
<line x1="326.1" y1="359.6" x2="396.9" y2="359.6"/>
<line x1="324.6" y1="367.8" x2="398.8" y2="367.8"/>
<line x1="323.0" y1="376.1" x2="400.7" y2="376.1"/>
<line x1="321.4" y1="384.7" x2="402.6" y2="384.7"/>
<line x1="319.7" y1="393.4" x2="404.6" y2="393.4"/>
<line x1="318.0" y1="402.2" x2="406.6" y2="402.2"/>
<line x1="316.3" y1="411.2" x2="408.7" y2="411.2"/>
<line x1="314.6" y1="420.3" x2="410.7" y2="420.3"/>
<line x1="312.8" y1="429.6" x2="412.9" y2="429.6"/>
</g>
<path d="M352 224 L311 439" stroke="#ffe8c0" stroke-width="2.2" opacity=".85"/>
<path d="M366 224 L415 439" stroke="#fff0d0" stroke-width="1.8" opacity=".7"/>
<path d="M400 224 L461 259 L561 384 L610 439" fill="none" stroke="#a88860" stroke-width="1.4" opacity=".7"/>
<g stroke="#2e2a24" stroke-width="3" fill="none">
<path d="M250 0 L336 262"/>
<path d="M486 0 L398 224"/>
</g>
<g stroke="#8a7a60" stroke-width="0.8" opacity=".6" fill="none">
<path d="M251.5 0 L337.5 262"/>
<path d="M487.5 0 L399.5 224"/>
</g>
<g fill="#d8c8a0" opacity=".7">
<circle cx="250.0" cy="0.0" r="0.9"/>
<circle cx="486.0" cy="0.0" r="0.8"/>
<circle cx="257.2" cy="21.8" r="0.9"/>
<circle cx="478.7" cy="18.7" r="0.8"/>
<circle cx="264.3" cy="43.7" r="0.9"/>
<circle cx="471.3" cy="37.3" r="0.8"/>
<circle cx="271.5" cy="65.5" r="0.9"/>
<circle cx="464.0" cy="56.0" r="0.8"/>
<circle cx="278.7" cy="87.3" r="0.9"/>
<circle cx="456.7" cy="74.7" r="0.8"/>
<circle cx="285.8" cy="109.2" r="0.9"/>
<circle cx="449.3" cy="93.3" r="0.8"/>
<circle cx="293.0" cy="131.0" r="0.9"/>
<circle cx="442.0" cy="112.0" r="0.8"/>
<circle cx="300.2" cy="152.8" r="0.9"/>
<circle cx="434.7" cy="130.7" r="0.8"/>
<circle cx="307.3" cy="174.7" r="0.9"/>
<circle cx="427.3" cy="149.3" r="0.8"/>
<circle cx="314.5" cy="196.5" r="0.9"/>
<circle cx="420.0" cy="168.0" r="0.8"/>
<circle cx="321.7" cy="218.3" r="0.9"/>
<circle cx="412.7" cy="186.7" r="0.8"/>
<circle cx="328.8" cy="240.2" r="0.9"/>
<circle cx="405.3" cy="205.3" r="0.8"/>
</g>
<path d="M295 136 L312 188" stroke="#ffffff" stroke-width="1" opacity=".5"/>
<g fill="#d8ffd8" opacity=".85">
<rect x="344" y="186" width="2" height="2"/>
<rect x="344" y="190" width="2" height="2"/>
<rect x="344" y="194" width="2" height="2"/>
<rect x="344" y="198" width="2" height="2"/>
<rect x="344" y="202" width="2" height="2"/>
<rect x="344" y="206" width="2" height="2"/>
<rect x="344" y="210" width="2" height="2"/>
<rect x="344" y="214" width="2" height="2"/>
<rect x="344" y="218" width="2" height="2"/>
<rect x="344" y="222" width="2" height="2"/>
<rect x="344" y="226" width="2" height="2"/>
<rect x="344" y="230" width="2" height="2"/>
<rect x="344" y="234" width="2" height="2"/>
<rect x="392" y="195" width="2" height="2"/>
<rect x="392" y="199" width="2" height="2"/>
<rect x="392" y="203" width="2" height="2"/>
<rect x="392" y="207" width="2" height="2"/>
<rect x="392" y="211" width="2" height="2"/>
<rect x="392" y="215" width="2" height="2"/>
<rect x="392" y="219" width="2" height="2"/>
<rect x="392" y="223" width="2" height="2"/>
</g>
<g filter="url(#bl2)">
<circle cx="667" cy="79" r="6.5" fill="#80ffc0" opacity=".45"/>
<circle cx="617" cy="124" r="6.5" fill="#80ffc0" opacity=".45"/>
<circle cx="552" cy="180" r="4.7" fill="#80ffc0" opacity=".45"/>
<circle cx="530" cy="199" r="5.5" fill="#80ffc0" opacity=".45"/>
<circle cx="512" cy="214" r="5.0" fill="#80ffc0" opacity=".45"/>
<circle cx="497" cy="224" r="5.0" fill="#80ffc0" opacity=".45"/>
<circle cx="485" cy="233" r="5.0" fill="#80ffc0" opacity=".45"/>
<circle cx="474" cy="240" r="4.7" fill="#80ffc0" opacity=".45"/>
<circle cx="465" cy="246" r="4.7" fill="#80ffc0" opacity=".45"/>
<circle cx="451" cy="254" r="4.5" fill="#80ffc0" opacity=".45"/>
<circle cx="440" cy="259" r="4.5" fill="#80ffc0" opacity=".45"/>
<circle cx="430" cy="265" r="4.3" fill="#80ffc0" opacity=".45"/>
</g>
<circle cx="667" cy="79" r="2.4" fill="#f0fff8"/>
<circle cx="617" cy="124" r="2.4" fill="#f0fff8"/>
<circle cx="552" cy="180" r="1.3" fill="#f0fff8"/>
<circle cx="530" cy="199" r="1.8" fill="#f0fff8"/>
<circle cx="512" cy="214" r="1.5" fill="#f0fff8"/>
<circle cx="497" cy="224" r="1.5" fill="#f0fff8"/>
<circle cx="485" cy="233" r="1.5" fill="#f0fff8"/>
<circle cx="474" cy="240" r="1.3" fill="#f0fff8"/>
<circle cx="465" cy="246" r="1.3" fill="#f0fff8"/>
<circle cx="451" cy="254" r="1.2" fill="#f0fff8"/>
<circle cx="440" cy="259" r="1.2" fill="#f0fff8"/>
<circle cx="430" cy="265" r="1.1" fill="#f0fff8"/>
<ellipse cx="360" cy="228" rx="11" ry="4" fill="#fff" opacity=".9" filter="url(#bl2)"/>
<g filter="url(#bl1)">
<circle cx="370" cy="237" r="2" fill="#fff" opacity=".85"/>
<circle cx="376" cy="246" r="2" fill="#fff" opacity=".85"/>
<circle cx="383" cy="256" r="2" fill="#fff" opacity=".85"/>
<circle cx="408" cy="287" r="2" fill="#fff" opacity=".85"/>
<circle cx="392" cy="268" r="2" fill="#fff" opacity=".85"/>
<ellipse cx="360" cy="296" rx="3.5" ry="2.5" fill="#f8f8ff" opacity=".85"/>
<ellipse cx="356" cy="321" rx="3.5" ry="2.5" fill="#f8f8ff" opacity=".85"/>
<ellipse cx="352" cy="330" rx="3.5" ry="2.5" fill="#f8f8ff" opacity=".85"/>
</g>
</svg></div>
<div class="a" style="left:856px;top:768px;width:164px;height:43px;box-sizing:border-box;border:2px solid #e6ded0;border-radius:6px;background:rgba(8,8,8,.72)"></div>
<div class="t" style="left:876px;top:780px;color:#f0e8d8">Preview 2 of 10</div>
<div class="a" style="left:877px;top:827px;width:59px;height:40px;background:#898989;border-radius:3px"></div>
<div class="a" style="left:940px;top:827px;width:59px;height:40px;background:#898989;border-radius:3px"></div>
<div class="t" style="left:901px;top:836px;color:#fff">&lt;</div>
<div class="t" style="left:963px;top:836px;color:#fff">&gt;</div>

<!-- save as -->
<div class="t b" style="left:19px;top:914px;letter-spacing:-0.4px">Save As:</div>
<div class="a" style="left:105px;top:904px;width:1339px;height:38px;box-sizing:border-box;border:2px solid #5a92d2;border-radius:4px;background:#fff"></div>
<div class="a" style="left:109px;top:913px;width:1.5px;height:22px;background:#000"></div>
<div class="btn" style="left:1459px;top:906px;width:90px;height:34px"></div>
<div class="t b" style="left:1473px;top:913px;letter-spacing:-0.5px">Browse</div>

<!-- status -->
<div class="a" style="left:0;top:965px;width:1563px;height:46px;background:#f3f3f3"></div>
<div class="t" style="left:8px;top:981px;font-size:19.5px">1 Jobs Pending</div>
<div class="t b" style="left:1309px;top:981px;font-size:19.5px">When Done:</div>
<div class="t" style="left:1432px;top:981px;font-size:19.5px;letter-spacing:0.3px">Do nothing</div>
<div class="a" style="left:1533px;top:988px;width:0;height:0;border-left:6px solid transparent;border-right:6px solid transparent;border-top:6px solid #444"></div>
</body></html>
